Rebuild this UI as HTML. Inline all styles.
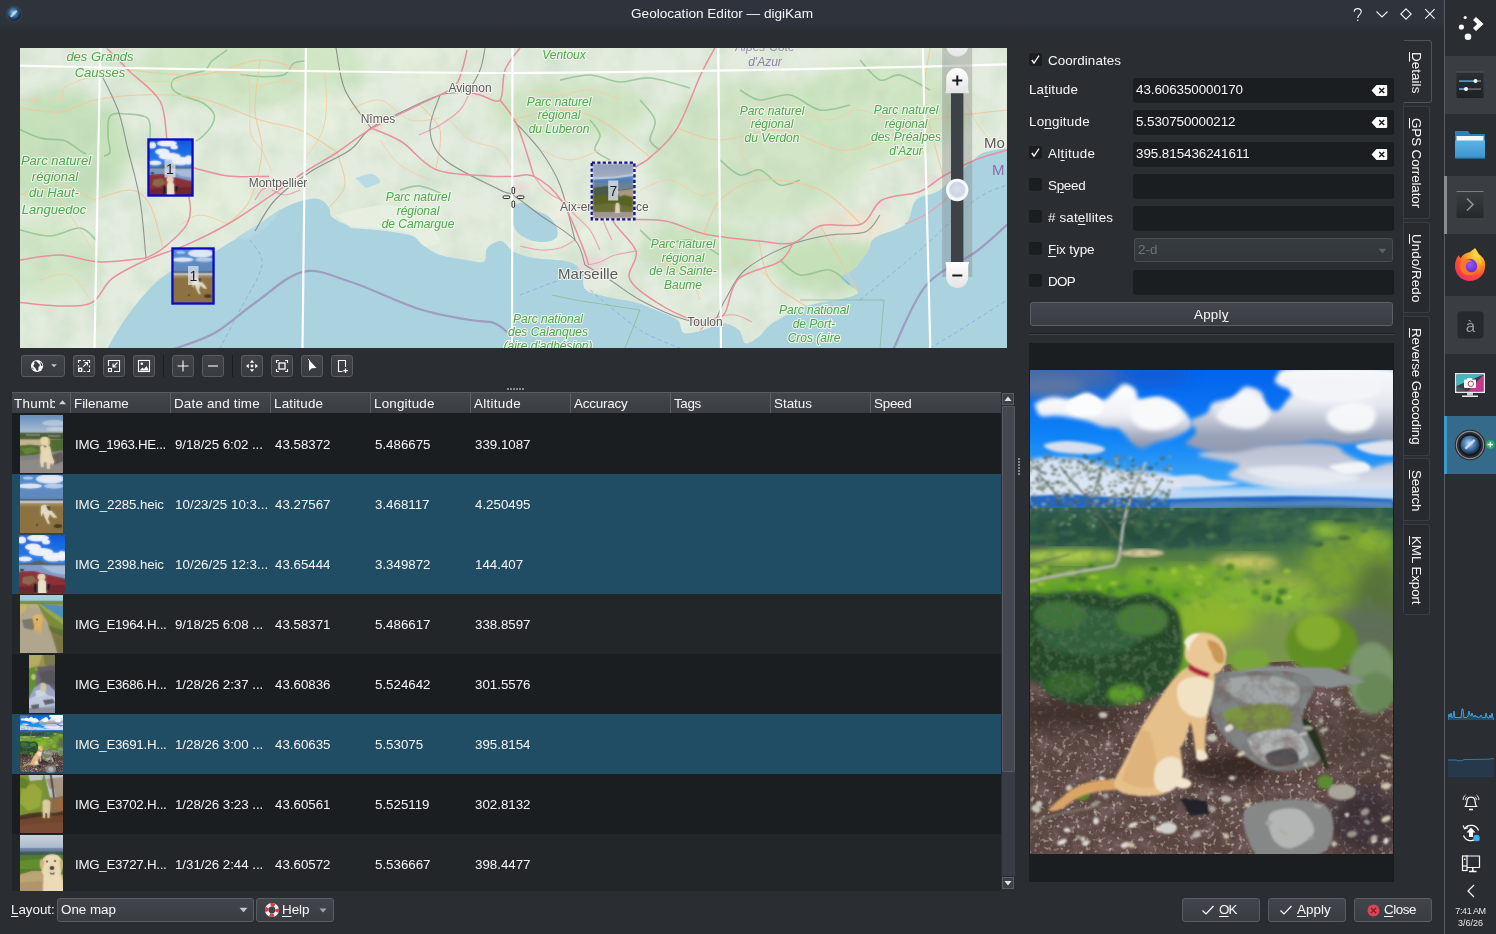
<!DOCTYPE html>
<html>
<head>
<meta charset="utf-8">
<title>Geolocation Editor — digiKam</title>
<style>
*{box-sizing:border-box;margin:0;padding:0}
html,body{width:1496px;height:934px;overflow:hidden;background:#2a2e32}
body{font-family:"Liberation Sans",sans-serif;font-size:13.4px;color:#f6f7f7;position:relative}
.abs{position:absolute}
.t{position:absolute;white-space:nowrap;line-height:16px;color:#f6f7f7}
.t,.cell,.vt,svg{will-change:transform}
u{text-decoration:underline;text-underline-offset:2px;text-decoration-thickness:1px}
#titlebar{left:0;top:0;width:1444px;height:34px;background:linear-gradient(#2f343c 0,#2f343c 23px,#2a2e32 32px)}
#win{left:0;top:0;width:1444px;height:934px;background:#2a2e32}
.btn{position:absolute;border:1px solid #585c61;border-radius:3px;background:linear-gradient(#40444a,#383c42);}
.field{position:absolute;background:#1b1e20;border-radius:3px;height:25px;left:1133px;width:261px}
.cb{position:absolute;width:13px;height:13px;background:#1b1e20;border-radius:2px;left:1029px}
.hdr{position:absolute;top:392px;height:21px;background:linear-gradient(#42464d,#3a3e44);border-top:1px solid #595d63}
.row{position:absolute;left:12px;width:989px;height:60px}
.sel{background:#204c64}
.alt{background:#232629}
.base{background:#1b1e20}
.cell{position:absolute;white-space:nowrap;line-height:16px;top:23px;font-size:13.3px}
.vtab{position:absolute;left:1404px;width:26px;border:1px solid #464a4e;border-left:none;border-radius:0 3px 3px 0}
.vt{position:absolute;white-space:nowrap;transform-origin:0 0;transform:rotate(90deg);line-height:16px;font-size:13.4px}
</style>
</head>
<body>
<div id="win" class="abs"></div>
<div id="titlebar" class="abs"></div>
<!--TITLE-->
<svg class="abs" style="left:4px;top:4px" width="20" height="20" viewBox="0 0 20 20">
<defs><radialGradient id="dk" cx="0.45" cy="0.4" r="0.6"><stop offset="0" stop-color="#a4c8e2"/><stop offset="0.4" stop-color="#3f76a6"/><stop offset="0.8" stop-color="#1c3656"/><stop offset="1" stop-color="#141c28"/></radialGradient></defs>
<circle cx="10" cy="10" r="8.3" fill="#3a424c"/><circle cx="10" cy="10" r="7" fill="url(#dk)"/>
<path d="M7.5 12 L12 7.5" stroke="#dcebf8" stroke-width="2.4" stroke-linecap="round" opacity="0.7"/>
</svg>
<div class="t" id="ttl" style="left:631px;top:6px;width:182px;text-align:center;font-size:13.6px;letter-spacing:-0.004px">Geolocation Editor — digiKam</div>
<svg class="abs" style="left:1346px;top:2px" width="96" height="24" viewBox="0 0 96 24" fill="none" stroke="#f2f3f4" stroke-width="1.1">
<path d="M8.2 9.8 C8.2 5.6 15.2 5.6 15.2 9.8 C15.2 12.6 11.8 12.6 11.8 16"/><circle cx="11.8" cy="18.3" r="0.8" fill="#f2f3f4" stroke="none"/>
<path d="M30.5 9.5 L36 15 L41.5 9.5"/>
<path d="M60 6.8 L65.2 12 L60 17.2 L54.8 12 Z"/>
<path d="M79.2 7.2 L88.6 16.6 M88.6 7.2 L79.2 16.6"/>
</svg>

<!--MAP-->
<svg class="abs" style="left:20px;top:48px" width="987" height="300" viewBox="0 0 987 300">
<defs><filter id="b6" x="-20%" y="-20%" width="140%" height="140%"><feGaussianBlur stdDeviation="7"/></filter><filter id="b3"><feGaussianBlur stdDeviation="3"/></filter><filter id="nz" x="0" y="0" width="100%" height="100%"><feTurbulence type="fractalNoise" baseFrequency="0.035" numOctaves="3" seed="4" result="n"/><feColorMatrix in="n" type="matrix" values="0 0 0 0 0.42  0 0 0 0 0.60  0 0 0 0 0.42  1.6 0 0 0 -0.62"/><feComposite in2="SourceGraphic" operator="in"/></filter><clipPath id="mc"><rect width="987" height="300"/></clipPath></defs>
<g clip-path="url(#mc)">
<rect width="987" height="300" fill="#e3ecde"/>
<ellipse cx="40" cy="102" rx="70" ry="60" fill="#c3e0b8" opacity="0.9" filter="url(#b6)"/>
<ellipse cx="20" cy="212" rx="60" ry="40" fill="#cfe6c2" opacity="0.8" filter="url(#b6)"/>
<ellipse cx="230" cy="22" rx="120" ry="40" fill="#cde5c0" opacity="0.8" filter="url(#b6)"/>
<ellipse cx="550" cy="62" rx="80" ry="30" fill="#cbe3bd" opacity="0.8" filter="url(#b6)"/>
<ellipse cx="740" cy="102" rx="110" ry="70" fill="#cbe3bd" opacity="0.7" filter="url(#b6)"/>
<ellipse cx="860" cy="62" rx="90" ry="50" fill="#cde5c0" opacity="0.8" filter="url(#b6)"/>
<ellipse cx="680" cy="202" rx="60" ry="30" fill="#c6e1b9" opacity="0.8" filter="url(#b6)"/>
<ellipse cx="810" cy="217" rx="60" ry="28" fill="#c3e0b6" opacity="0.9" filter="url(#b6)"/>
<ellipse cx="410" cy="12" rx="50" ry="25" fill="#e6efdd" opacity="0.8" filter="url(#b6)"/>
<ellipse cx="310" cy="72" rx="60" ry="30" fill="#e8f0de" opacity="0.8" filter="url(#b6)"/>
<ellipse cx="180" cy="152" rx="50" ry="30" fill="#e6efdb" opacity="0.8" filter="url(#b6)"/>
<ellipse cx="540" cy="172" rx="40" ry="25" fill="#ecefe2" opacity="0.8" filter="url(#b6)"/>
<ellipse cx="830" cy="177" rx="40" ry="14" fill="#f0e3d2" opacity="0.9" filter="url(#b6)"/>
<rect width="987" height="300" fill="#fff" filter="url(#nz)" opacity="0.38"/>
<path d="M87.0 301.0 C89.6 296.7 95.9 284.4 102.5 275.0 C109.1 265.6 118.4 252.8 126.4 244.3 C134.4 235.8 138.9 230.6 150.3 223.8 C161.7 217.0 183.8 208.8 194.6 203.4 C205.4 198.0 208.2 194.9 215.0 191.5 C221.8 188.1 229.8 186.8 235.5 183.0 C241.2 179.2 242.8 173.6 249.0 169.0 C255.2 164.4 265.0 158.8 273.0 155.7 C281.0 152.6 290.9 149.9 296.9 150.5 C302.9 151.1 306.2 155.9 308.8 159.0 C311.4 162.1 308.5 166.2 312.2 169.3 C315.9 172.4 322.2 175.9 331.0 177.8 C339.8 179.8 354.8 179.6 365.0 181.0 C375.2 182.4 386.0 183.7 392.3 186.3 C398.6 188.9 398.1 193.2 402.6 196.6 C407.2 200.0 412.2 204.2 419.6 206.8 C427.0 209.4 439.5 210.9 446.9 212.0 C454.3 213.1 460.6 215.6 464.0 213.6 C467.4 211.6 464.5 203.4 467.3 200.0 C470.1 196.6 476.6 192.4 481.0 193.0 C485.4 193.6 488.1 200.6 493.6 203.4 C499.1 206.2 504.9 208.3 514.0 210.0 C523.1 211.7 540.0 211.3 548.0 213.6 C556.0 215.9 559.0 219.2 561.8 223.8 C564.6 228.4 561.6 237.0 565.0 241.0 C568.4 245.0 573.5 245.4 582.0 247.7 C590.5 249.9 607.5 252.3 616.0 254.5 C624.5 256.7 626.2 258.1 633.0 261.0 C639.8 263.9 651.8 267.6 657.0 271.6 C662.2 275.6 659.4 283.3 664.0 285.0 C668.6 286.7 678.3 283.5 684.6 281.8 C690.9 280.1 695.9 275.0 701.6 275.0 C707.3 275.0 714.7 278.4 718.7 281.8 C722.7 285.2 722.1 294.3 725.5 295.4 C728.9 296.5 734.5 292.0 739.0 288.6 C743.5 285.2 744.8 280.1 752.8 275.0 C760.8 269.9 775.4 262.0 786.8 258.0 C798.2 254.0 812.5 253.3 821.0 251.0 C829.5 248.7 838.0 247.4 838.0 244.0 C838.0 240.6 821.6 234.6 821.0 230.7 C820.4 226.8 830.1 224.9 834.6 220.4 C839.1 215.8 844.6 208.5 848.0 203.4 C851.4 198.3 848.7 194.4 855.0 189.8 C861.3 185.2 878.9 182.3 885.7 176.0 C892.5 169.7 890.3 157.7 896.0 152.0 C901.7 146.3 910.7 148.2 919.8 142.0 C928.9 135.8 943.1 120.9 950.5 114.7 C957.9 108.4 957.4 107.0 964.0 104.5 C970.6 102.0 985.7 100.8 990.0 100.0 L990 304 L80 304 Z" fill="#abd3df"/>
<path d="M493.0 158.0 C494.5 157.5 498.3 154.3 502.0 155.0 C505.7 155.7 510.7 159.8 515.0 162.0 C519.3 164.2 524.3 165.0 528.0 168.0 C531.7 171.0 535.7 176.3 537.0 180.0 C538.3 183.7 538.0 187.7 536.0 190.0 C534.0 192.3 529.3 193.7 525.0 194.0 C520.7 194.3 514.7 193.7 510.0 192.0 C505.3 190.3 500.0 187.3 497.0 184.0 C494.0 180.7 492.8 174.0 492.0 172.0 Z" fill="#abd3df"/>
<path d="M335.0 130.0 C337.8 129.3 347.8 125.3 352.0 126.0 C356.2 126.7 361.0 131.7 360.0 134.0 C359.0 136.3 348.3 139.0 346.0 140.0 Z" fill="#b9dbe4"/>
<path d="M216.0 190.0 C220.3 187.3 234.7 178.7 242.0 174.0 C249.3 169.3 259.0 161.3 260.0 162.0 C261.0 162.7 253.7 173.0 248.0 178.0 C242.3 183.0 229.7 189.7 226.0 192.0 Z" fill="#b4d8e2"/>
<path d="M315.0 167.0 C323.3 165.3 350.8 157.0 365.0 157.0 C379.2 157.0 390.8 161.2 400.0 167.0 C409.2 172.8 419.2 186.8 420.0 192.0 C420.8 197.2 409.7 198.7 405.0 198.0 C400.3 197.3 398.7 190.5 392.0 188.0 C385.3 185.5 375.2 184.3 365.0 183.0 C354.8 181.7 336.7 180.5 331.0 180.0 Z" fill="#e9f0e2" opacity=".8"/>
<path d="M207.0 2.0 C204.5 3.8 195.7 9.7 192.0 13.0 C188.3 16.3 189.0 19.8 185.0 22.0 C181.0 24.2 173.2 25.0 168.0 26.5 C162.8 28.0 156.7 28.8 154.0 31.0 C151.3 33.2 151.2 37.5 152.0 40.0 C152.8 42.5 155.7 44.2 159.0 46.0 C162.3 47.8 168.0 49.5 172.0 51.0 C176.0 52.5 179.3 52.5 183.0 55.0 C186.7 57.5 192.5 62.3 194.0 66.0 C195.5 69.7 193.8 73.3 192.0 77.0 C190.2 80.7 185.7 85.3 183.0 88.0 C180.3 90.7 177.2 92.2 176.0 93.0" fill="none" stroke="#86bb86" stroke-width="1.6" opacity=".7"/>
<path d="M84.0 108.0 C85.0 107.3 89.3 107.3 90.0 104.0 C90.7 100.7 88.0 94.0 88.0 88.0 C88.0 82.0 87.0 71.7 90.0 68.0 C93.0 64.3 99.7 65.6 106.0 66.0 C112.3 66.4 124.0 66.2 128.0 70.6 C132.0 75.0 129.7 88.9 130.0 92.6" fill="none" stroke="#86bb86" stroke-width="1.6" opacity=".7"/>
<path d="M220.6 26.5 C224.3 26.9 235.3 28.7 242.7 28.7 C250.0 28.7 259.6 28.7 264.7 26.5 C269.8 24.3 270.2 17.6 273.5 15.4 C276.8 13.1 282.8 13.4 284.6 13.0" fill="none" stroke="#86bb86" stroke-width="1.6" opacity=".7"/>
<path d="M0.0 81.6 C3.7 83.1 14.7 88.6 22.0 90.4 C29.3 92.2 37.4 90.4 44.0 92.6 C50.6 94.8 58.1 101.5 61.8 103.7 C65.5 105.9 65.3 105.6 66.0 106.0" fill="none" stroke="#86bb86" stroke-width="1.6" opacity=".7"/>
<path d="M0.0 182.0 C5.0 183.0 20.0 188.3 30.0 188.0 C40.0 187.7 52.3 179.3 60.0 180.0 C67.7 180.7 73.3 190.0 76.0 192.0" fill="none" stroke="#86bb86" stroke-width="1.6" opacity=".7"/>
<path d="M540.0 32.0 C545.0 31.2 560.0 26.7 570.0 27.0 C580.0 27.3 590.0 33.5 600.0 34.0 C610.0 34.5 618.3 29.0 630.0 30.0 C641.7 31.0 663.3 38.3 670.0 40.0" fill="none" stroke="#86bb86" stroke-width="1.6" opacity=".7"/>
<path d="M570.0 72.0 C571.7 74.5 579.2 82.0 580.0 87.0 C580.8 92.0 573.3 97.8 575.0 102.0 C576.7 106.2 587.5 110.3 590.0 112.0" fill="none" stroke="#86bb86" stroke-width="1.6" opacity=".7"/>
<path d="M620.0 52.0 C622.5 55.3 633.3 65.3 635.0 72.0 C636.7 78.7 629.2 87.0 630.0 92.0 C630.8 97.0 638.3 100.3 640.0 102.0" fill="none" stroke="#86bb86" stroke-width="1.6" opacity=".7"/>
<path d="M720.0 42.0 C723.3 43.7 731.7 51.2 740.0 52.0 C748.3 52.8 760.0 45.3 770.0 47.0 C780.0 48.7 790.0 60.3 800.0 62.0 C810.0 63.7 825.0 57.8 830.0 57.0" fill="none" stroke="#86bb86" stroke-width="1.6" opacity=".7"/>
<path d="M700.0 112.0 C703.3 114.5 713.3 125.3 720.0 127.0 C726.7 128.7 733.3 120.3 740.0 122.0 C746.7 123.7 753.3 135.3 760.0 137.0 C766.7 138.7 776.7 132.8 780.0 132.0" fill="none" stroke="#86bb86" stroke-width="1.6" opacity=".7"/>
<path d="M840.0 12.0 C843.3 15.3 853.3 29.5 860.0 32.0 C866.7 34.5 871.7 25.3 880.0 27.0 C888.3 28.7 905.0 39.5 910.0 42.0" fill="none" stroke="#86bb86" stroke-width="1.6" opacity=".7"/>
<path d="M620.0 182.0 C623.3 184.5 631.7 195.3 640.0 197.0 C648.3 198.7 660.0 190.3 670.0 192.0 C680.0 193.7 695.0 204.5 700.0 207.0" fill="none" stroke="#86bb86" stroke-width="1.6" opacity=".7"/>
<path d="M760.0 212.0 C763.3 214.5 771.7 225.3 780.0 227.0 C788.3 228.7 801.7 220.3 810.0 222.0 C818.3 223.7 826.7 234.5 830.0 237.0" fill="none" stroke="#86bb86" stroke-width="1.6" opacity=".7"/>
<path d="M380.0 142.0 C383.3 141.3 392.5 137.2 400.0 138.0 C407.5 138.8 420.8 145.5 425.0 147.0" fill="none" stroke="#86bb86" stroke-width="1.6" opacity=".7"/>
<path d="M0.0 51.8 C6.6 52.0 32.4 55.0 39.7 53.0 C47.0 51.0 38.5 43.8 44.0 39.7 C49.5 35.7 64.0 30.5 72.8 28.7 C81.6 26.9 93.0 28.7 97.0 28.7" fill="none" stroke="#f4cda4" stroke-width="1" opacity=".85"/>
<path d="M123.5 33.0 C128.7 33.0 145.6 34.1 154.4 33.0 C163.2 31.9 165.5 27.8 176.5 26.5 C187.5 25.2 211.8 23.2 220.6 25.4 C229.4 27.6 227.8 30.0 229.4 39.7 C231.1 49.4 228.3 73.1 230.5 83.8 C232.7 94.5 239.2 97.1 242.7 103.7 C246.2 110.3 250.0 120.2 251.5 123.5" fill="none" stroke="#f4cda4" stroke-width="1" opacity=".85"/>
<path d="M229.4 39.7 C235.3 38.6 255.5 33.4 264.7 33.0 C273.9 32.6 281.3 36.8 284.6 37.5" fill="none" stroke="#f4cda4" stroke-width="1" opacity=".85"/>
<path d="M304.4 24.3 C304.8 29.4 307.0 45.1 306.6 55.0 C306.2 64.9 305.5 75.0 302.2 83.8 C298.9 92.6 289.4 104.0 286.8 108.0" fill="none" stroke="#f4cda4" stroke-width="1" opacity=".85"/>
<path d="M330.0 62.0 C335.0 60.3 350.0 50.3 360.0 52.0 C370.0 53.7 380.0 69.0 390.0 72.0 C400.0 75.0 415.0 70.3 420.0 70.0" fill="none" stroke="#f4cda4" stroke-width="1" opacity=".85"/>
<path d="M360.0 92.0 C363.3 96.2 371.7 110.3 380.0 117.0 C388.3 123.7 405.0 129.5 410.0 132.0" fill="none" stroke="#f4cda4" stroke-width="1" opacity=".85"/>
<path d="M430.0 72.0 C433.3 75.3 441.7 87.0 450.0 92.0 C458.3 97.0 473.0 97.0 480.0 102.0 C487.0 107.0 490.0 118.7 492.0 122.0" fill="none" stroke="#f4cda4" stroke-width="1" opacity=".85"/>
<path d="M510.0 42.0 C515.0 42.8 530.0 47.0 540.0 47.0 C550.0 47.0 560.0 41.2 570.0 42.0 C580.0 42.8 595.0 50.3 600.0 52.0" fill="none" stroke="#f4cda4" stroke-width="1" opacity=".85"/>
<path d="M520.0 102.0 C525.0 103.7 540.0 112.0 550.0 112.0 C560.0 112.0 575.0 103.7 580.0 102.0" fill="none" stroke="#f4cda4" stroke-width="1" opacity=".85"/>
<path d="M620.0 142.0 C625.0 140.3 640.0 131.2 650.0 132.0 C660.0 132.8 671.7 145.3 680.0 147.0 C688.3 148.7 696.7 142.8 700.0 142.0" fill="none" stroke="#f4cda4" stroke-width="1" opacity=".85"/>
<path d="M710.0 52.0 C713.3 55.3 728.3 63.7 730.0 72.0 C731.7 80.3 718.3 92.0 720.0 102.0 C721.7 112.0 736.7 127.0 740.0 132.0" fill="none" stroke="#f4cda4" stroke-width="1" opacity=".85"/>
<path d="M780.0 62.0 C785.0 63.7 800.0 72.0 810.0 72.0 C820.0 72.0 828.3 61.2 840.0 62.0 C851.7 62.8 873.3 74.5 880.0 77.0" fill="none" stroke="#f4cda4" stroke-width="1" opacity=".85"/>
<path d="M850.0 122.0 C855.0 120.3 870.0 115.3 880.0 112.0 C890.0 108.7 905.0 103.7 910.0 102.0" fill="none" stroke="#f4cda4" stroke-width="1" opacity=".85"/>
<path d="M710.0 212.0 C715.0 213.7 731.7 217.0 740.0 222.0 C748.3 227.0 752.3 236.0 760.0 242.0 C767.7 248.0 781.7 255.3 786.0 258.0" fill="none" stroke="#f4cda4" stroke-width="1" opacity=".85"/>
<path d="M640.0 212.0 C645.0 215.3 663.3 225.3 670.0 232.0 C676.7 238.7 678.3 248.7 680.0 252.0" fill="none" stroke="#f4cda4" stroke-width="1" opacity=".85"/>
<path d="M20.0 232.0 C25.0 231.2 41.3 223.3 50.0 227.0 C58.7 230.7 68.3 249.5 72.0 254.0" fill="none" stroke="#f4cda4" stroke-width="1" opacity=".85"/>
<path d="M40.0 152.0 C43.3 157.0 53.3 171.7 60.0 182.0 C66.7 192.3 76.7 208.7 80.0 214.0" fill="none" stroke="#f4cda4" stroke-width="1" opacity=".85"/>
<path d="M160.0 177.0 C163.3 175.3 172.0 167.2 180.0 167.0 C188.0 166.8 203.3 174.5 208.0 176.0" fill="none" stroke="#f4cda4" stroke-width="1" opacity=".85"/>
<path d="M940.0 42.0 C942.5 47.0 950.0 63.7 955.0 72.0 C960.0 80.3 967.5 88.7 970.0 92.0" fill="none" stroke="#f4cda4" stroke-width="1" opacity=".85"/>
<path d="M0.0 60.0 C6.7 60.7 27.5 65.3 40.0 64.0 C52.5 62.7 61.7 54.8 75.0 52.0 C88.3 49.2 102.5 47.3 120.0 47.0 C137.5 46.7 160.0 45.8 180.0 50.0 C200.0 54.2 223.3 66.7 240.0 72.0 C256.7 77.3 267.2 76.7 280.0 82.0 C292.8 87.3 310.8 100.3 317.0 104.0" fill="none" stroke="#f3c79b" stroke-width="1.1" opacity=".9"/>
<path d="M109.0 22.0 C120.8 22.8 158.2 28.7 180.0 27.0 C201.8 25.3 222.3 12.5 240.0 12.0 C257.7 11.5 278.3 22.0 286.0 24.0" fill="none" stroke="#f3c79b" stroke-width="1.1" opacity=".9"/>
<path d="M208.0 176.0 C211.7 172.0 224.3 164.3 230.0 152.0 C235.7 139.7 241.2 117.0 242.0 102.0 C242.8 87.0 235.3 77.0 235.0 62.0 C234.7 47.0 239.2 20.3 240.0 12.0" fill="none" stroke="#f3c79b" stroke-width="1.1" opacity=".9"/>
<path d="M74.0 152.0 C80.0 150.3 100.7 141.2 110.0 142.0 C119.3 142.8 124.5 147.3 130.0 157.0 C135.5 166.7 140.8 192.8 143.0 200.0" fill="none" stroke="#f3c79b" stroke-width="1.1" opacity=".9"/>
<path d="M0.0 147.0 C6.7 145.3 27.7 136.2 40.0 137.0 C52.3 137.8 68.3 149.5 74.0 152.0" fill="none" stroke="#f3c79b" stroke-width="1.1" opacity=".9"/>
<path d="M493.0 72.0 C500.8 70.3 525.5 62.0 540.0 62.0 C554.5 62.0 565.0 64.2 580.0 72.0 C595.0 79.8 621.7 102.8 630.0 109.0" fill="none" stroke="#f3c79b" stroke-width="1.1" opacity=".9"/>
<path d="M657.0 80.0 C664.2 82.0 682.8 91.7 700.0 92.0 C717.2 92.3 740.0 80.3 760.0 82.0 C780.0 83.7 803.3 100.3 820.0 102.0 C836.7 103.7 845.0 97.0 860.0 92.0 C875.0 87.0 888.8 77.0 910.0 72.0 C931.2 67.0 974.2 63.7 987.0 62.0" fill="none" stroke="#f3c79b" stroke-width="1.1" opacity=".9"/>
<path d="M684.0 186.0 C686.7 180.3 690.7 161.0 700.0 152.0 C709.3 143.0 723.3 133.7 740.0 132.0 C756.7 130.3 783.2 134.7 800.0 142.0 C816.8 149.3 834.2 170.3 841.0 176.0" fill="none" stroke="#f3c79b" stroke-width="1.1" opacity=".9"/>
<path d="M800.0 177.0 C803.3 182.8 813.7 200.8 820.0 212.0 C826.3 223.2 835.0 238.7 838.0 244.0" fill="none" stroke="#f3c79b" stroke-width="1.1" opacity=".9"/>
<path d="M910.0 0.0 C909.2 8.7 902.8 30.7 905.0 52.0 C907.2 73.3 920.0 115.3 923.0 128.0" fill="none" stroke="#f3c79b" stroke-width="1.1" opacity=".9"/>
<path d="M739.0 193.0 C740.8 199.5 742.2 221.2 750.0 232.0 C757.8 242.8 780.0 253.7 786.0 258.0" fill="none" stroke="#f3c79b" stroke-width="1.1" opacity=".9"/>
<path d="M317.0 104.0 C318.3 109.5 326.2 127.8 325.0 137.0 C323.8 146.2 312.5 155.3 310.0 159.0" fill="none" stroke="#f3c79b" stroke-width="1.1" opacity=".9"/>
<path d="M399.0 56.0 C402.5 60.3 417.2 71.2 420.0 82.0 C422.8 92.8 416.7 114.5 416.0 121.0" fill="none" stroke="#f3c79b" stroke-width="1.1" opacity=".9"/>
<ellipse cx="572" cy="218" rx="14" ry="10" fill="#e6d9d6" opacity=".85" filter="url(#b3)"/>
<ellipse cx="582" cy="157" rx="9" ry="7" fill="#e6d9d6" opacity=".85" filter="url(#b3)"/>
<ellipse cx="692" cy="273" rx="11" ry="5" fill="#e6d9d6" opacity=".85" filter="url(#b3)"/>
<ellipse cx="252" cy="142" rx="11" ry="7" fill="#e6d9d6" opacity=".85" filter="url(#b3)"/>
<ellipse cx="352" cy="79" rx="9" ry="6" fill="#e6d9d6" opacity=".85" filter="url(#b3)"/>
<ellipse cx="458" cy="44" rx="9" ry="6" fill="#e6d9d6" opacity=".85" filter="url(#b3)"/>
<ellipse cx="500" cy="140" rx="10" ry="6" fill="#e6d9d6" opacity=".85" filter="url(#b3)"/>
<ellipse cx="910" cy="132" rx="12" ry="5" fill="#e6d9d6" opacity=".85" filter="url(#b3)"/>
<ellipse cx="860" cy="157" rx="10" ry="5" fill="#e6d9d6" opacity=".85" filter="url(#b3)"/>
<path d="M541.0 152.0 C543.3 154.5 550.2 162.0 555.0 167.0 C559.8 172.0 565.8 176.2 570.0 182.0 C574.2 187.8 578.3 198.7 580.0 202.0" fill="none" stroke="#ee9fa8" stroke-width="1.2" opacity=".9"/>
<path d="M568.0 217.0 C570.0 216.5 575.5 215.7 580.0 214.0 C584.5 212.3 589.0 208.8 595.0 207.0 C601.0 205.2 612.5 203.7 616.0 203.0" fill="none" stroke="#ee9fa8" stroke-width="1.2" opacity=".9"/>
<path d="M555.0 192.0 C552.5 193.3 545.8 198.3 540.0 200.0 C534.2 201.7 526.7 202.3 520.0 202.0 C513.3 201.7 503.3 198.7 500.0 198.0" fill="none" stroke="#ee9fa8" stroke-width="1.2" opacity=".9"/>
<path d="M514.0 128.0 C515.8 130.3 520.5 138.0 525.0 142.0 C529.5 146.0 535.2 149.5 541.0 152.0 C546.8 154.5 553.5 155.7 560.0 157.0 C566.5 158.3 576.7 159.5 580.0 160.0" fill="none" stroke="#ee9fa8" stroke-width="1.2" opacity=".9"/>
<path d="M580.0 160.0 C580.8 162.8 583.0 171.7 585.0 177.0 C587.0 182.3 590.8 189.5 592.0 192.0" fill="none" stroke="#ee9fa8" stroke-width="1.2" opacity=".9"/>
<path d="M450.0 44.0 C448.3 47.0 445.0 56.5 440.0 62.0 C435.0 67.5 426.8 72.8 420.0 77.0 C413.2 81.2 402.5 85.3 399.0 87.0" fill="none" stroke="#ee9fa8" stroke-width="1.2" opacity=".9"/>
<path d="M252.0 142.0 C254.2 142.8 260.3 147.0 265.0 147.0 C269.7 147.0 277.5 142.8 280.0 142.0" fill="none" stroke="#ee9fa8" stroke-width="1.2" opacity=".9"/>
<path d="M235.0 152.0 C236.2 150.3 239.2 144.3 242.0 142.0 C244.8 139.7 250.3 138.7 252.0 138.0" fill="none" stroke="#ee9fa8" stroke-width="1.2" opacity=".9"/>
<path d="M885.0 176.0 C888.3 174.5 898.3 171.0 905.0 167.0 C911.7 163.0 919.2 157.0 925.0 152.0 C930.8 147.0 937.5 139.5 940.0 137.0" fill="none" stroke="#ee9fa8" stroke-width="1.2" opacity=".9"/>
<path d="M680.0 282.0 C682.5 280.0 689.2 272.5 695.0 270.0 C700.8 267.5 708.8 266.3 715.0 267.0 C721.2 267.7 729.2 272.8 732.0 274.0" fill="none" stroke="#ee9fa8" stroke-width="1.2" opacity=".9"/>
<path d="M80.0 24.0 C83.0 30.3 93.3 49.0 98.0 62.0 C102.7 75.0 104.3 87.0 108.0 102.0 C111.7 117.0 117.0 134.0 120.0 152.0 C123.0 170.0 125.0 200.3 126.0 210.0" fill="none" stroke="#7d7d7d" stroke-width="1.1" opacity=".8"/>
<path d="M235.0 183.0 C238.3 177.8 245.8 161.8 255.0 152.0 C264.2 142.2 277.5 132.3 290.0 124.0 C302.5 115.7 319.8 109.3 330.0 102.0 C340.2 94.7 341.0 87.0 351.0 80.0 C361.0 73.0 378.5 65.5 390.0 60.0 C401.5 54.5 410.5 50.0 420.0 47.0 C429.5 44.0 440.3 46.2 447.0 42.0 C453.7 37.8 457.0 29.0 460.0 22.0 C463.0 15.0 464.2 3.7 465.0 0.0" fill="none" stroke="#7d7d7d" stroke-width="1.1" opacity=".8"/>
<path d="M316.0 0.0 C317.5 7.0 319.2 28.7 325.0 42.0 C330.8 55.3 346.7 73.7 351.0 80.0" fill="none" stroke="#7d7d7d" stroke-width="1.1" opacity=".8"/>
<path d="M420.0 47.0 C418.3 52.8 409.2 71.2 410.0 82.0 C410.8 92.8 413.3 102.0 425.0 112.0 C436.7 122.0 468.7 136.2 480.0 142.0 C491.3 147.8 486.3 142.8 493.0 147.0 C499.7 151.2 509.7 159.5 520.0 167.0 C530.3 174.5 547.5 183.7 555.0 192.0 C562.5 200.3 563.3 212.8 565.0 217.0" fill="none" stroke="#7d7d7d" stroke-width="1.1" opacity=".8"/>
<path d="M493.0 72.0 C497.5 77.0 512.2 91.2 520.0 102.0 C527.8 112.8 534.2 122.0 540.0 137.0 C545.8 152.0 552.5 182.8 555.0 192.0" fill="none" stroke="#7d7d7d" stroke-width="1.1" opacity=".8"/>
<path d="M565.0 217.0 C569.2 219.5 580.8 226.2 590.0 232.0 C599.2 237.8 608.3 245.7 620.0 252.0 C631.7 258.3 648.2 266.2 660.0 270.0 C671.8 273.8 683.5 278.0 691.0 275.0 C698.5 272.0 699.3 260.8 705.0 252.0 C710.7 243.2 714.2 231.2 725.0 222.0 C735.8 212.8 755.8 202.8 770.0 197.0 C784.2 191.2 797.5 189.2 810.0 187.0 C822.5 184.8 836.7 187.3 845.0 184.0 C853.3 180.7 857.5 169.8 860.0 167.0" fill="none" stroke="#7d7d7d" stroke-width="1.1" opacity=".8"/>
<path d="M87.0 0.5 C90.7 4.2 100.2 14.0 109.0 22.7 C117.8 31.5 133.7 41.6 140.0 53.0 C146.3 64.4 145.0 81.2 147.0 91.0 C149.0 100.8 148.3 102.2 152.0 112.0 C155.7 121.8 166.5 138.8 169.0 149.5 C171.5 160.2 171.3 167.6 167.0 176.0 C162.7 184.4 150.2 194.3 143.4 200.0 C136.6 205.7 128.9 208.3 126.0 210.0" fill="none" stroke="#e9909c" stroke-width="1.5"/>
<path d="M0.0 254.5 C6.7 255.1 28.0 258.0 40.0 258.0 C52.0 258.0 63.3 259.1 72.0 254.5 C80.7 249.9 82.9 237.8 92.0 230.7 C101.1 223.6 113.9 217.7 126.4 212.0 C138.9 206.3 153.4 202.6 167.0 196.6 C180.6 190.6 194.3 183.9 208.0 176.0 C221.7 168.1 236.5 157.5 249.0 149.0 C261.5 140.5 271.7 132.4 283.0 125.0 C294.3 117.6 305.6 111.9 317.0 104.5 C328.4 97.1 337.7 88.5 351.4 80.6 C365.1 72.6 385.4 63.6 399.0 56.8 C412.6 50.0 425.8 45.5 433.0 39.7 C440.2 33.9 439.7 28.3 442.0 22.0 C444.3 15.7 446.2 5.3 447.0 2.0" fill="none" stroke="#e9909c" stroke-width="1.5"/>
<path d="M351.0 80.0 C356.2 82.3 371.2 87.1 382.0 94.0 C392.8 100.9 401.8 115.9 416.0 121.6 C430.2 127.3 454.2 126.9 467.0 128.0 C479.8 129.1 485.2 128.3 493.0 128.4 C500.8 128.5 506.0 124.5 514.0 128.4 C522.0 132.3 533.0 140.6 541.0 152.0 C549.0 163.4 557.2 185.8 561.8 196.6 C566.4 207.4 567.5 213.6 568.6 217.0" fill="none" stroke="#e9909c" stroke-width="1.5"/>
<path d="M174.0 120.0 C179.7 121.3 195.5 126.6 208.0 128.0 C220.5 129.4 242.2 128.3 249.0 128.4" fill="none" stroke="#e9909c" stroke-width="1.5"/>
<path d="M694.8 0.0 C692.5 4.3 687.3 12.6 681.0 26.0 C674.7 39.4 665.5 66.7 657.0 80.6 C648.5 94.5 637.0 103.0 630.0 109.6 C623.0 116.2 621.3 113.8 615.0 120.0 C608.7 126.2 595.8 138.3 592.0 147.0 C588.2 155.7 588.5 162.7 592.5 172.0 C596.5 181.3 613.1 193.2 616.0 203.0 C618.9 212.8 606.1 222.1 609.6 230.7 C613.1 239.3 626.6 247.7 636.8 254.5 C647.0 261.3 662.0 268.2 671.0 271.6 C680.0 275.0 687.7 274.4 691.0 275.0" fill="none" stroke="#e9909c" stroke-width="1.5"/>
<path d="M592.0 172.0 C600.6 172.1 628.3 170.4 643.7 172.7 C659.1 175.0 668.7 182.6 684.6 186.0 C700.5 189.4 724.3 191.5 739.0 193.0 C753.7 194.5 762.8 197.5 773.0 195.0 C783.2 192.5 789.1 181.0 800.5 177.8 C811.9 174.6 831.1 180.3 841.4 176.0 C851.6 171.7 852.3 157.4 862.0 152.0 C871.7 146.6 889.2 147.6 899.4 143.7 C909.6 139.8 913.7 133.7 923.0 128.4 C932.3 123.1 944.3 116.4 955.0 112.0 C965.7 107.6 981.7 103.7 987.0 102.0" fill="none" stroke="#e9909c" stroke-width="1.5"/>
<path d="M773.0 195.0 C770.8 198.1 768.6 207.7 759.6 213.6 C750.6 219.6 727.8 222.2 718.7 230.7 C709.6 239.2 709.6 257.4 705.0 264.8 C700.4 272.2 693.3 273.3 691.0 275.0" fill="none" stroke="#e9909c" stroke-width="1.5"/>
<path d="M480.0 52.0 C482.8 56.2 491.3 64.3 497.0 77.0 C502.7 89.7 511.2 119.8 514.0 128.4" fill="none" stroke="#e9909c" stroke-width="1.5"/>
<path d="M433.0 39.7 C437.5 40.9 452.2 45.0 460.0 47.0 C467.8 49.0 475.8 56.2 480.0 52.0 C484.2 47.8 481.7 30.7 485.0 22.0 C488.3 13.3 497.5 3.7 500.0 0.0" fill="none" stroke="#e9909c" stroke-width="1.5"/>
<path d="M0.0 212.0 C6.7 211.2 26.7 206.7 40.0 207.0 C53.3 207.3 65.7 213.5 80.0 214.0 C94.3 214.5 118.3 210.7 126.0 210.0" fill="none" stroke="#e9909c" stroke-width="1.5"/>
<path d="M153.7 301.0 C160.5 298.3 181.0 292.8 194.6 285.0 C208.2 277.2 220.8 264.7 235.5 254.5 C250.2 244.3 267.1 227.2 283.0 223.8 C298.9 220.4 311.7 227.8 331.0 234.0 C350.3 240.2 379.2 254.7 399.0 261.0 C418.8 267.3 437.5 269.7 450.0 272.0 C462.5 274.3 467.2 272.2 474.0 275.0 C480.8 277.8 487.5 284.1 491.0 288.6 C494.5 293.1 494.3 299.8 495.0 302.0" fill="none" stroke="#9a89b4" stroke-width="2.2" opacity=".75"/>
<path d="M873.0 302.0 C878.5 291.2 892.0 254.0 906.0 237.5 C920.0 221.0 943.0 213.6 957.0 203.0 C971.0 192.4 984.5 178.8 990.0 174.0" fill="none" stroke="#9a89b4" stroke-width="2.2" opacity=".75"/>
<path d="M230.0 192.0 C232.0 196.2 243.7 205.3 242.0 217.0 C240.3 228.7 227.0 248.2 220.0 262.0 C213.0 275.8 203.3 293.7 200.0 300.0" fill="none" stroke="#7fa6d8" stroke-width="1" stroke-dasharray="4 3" opacity=".7"/>
<path d="M500.0 247.0 C506.7 244.5 529.2 235.3 540.0 232.0 C550.8 228.7 560.8 227.8 565.0 227.0" fill="none" stroke="#7fa6d8" stroke-width="1" stroke-dasharray="4 3" opacity=".7"/>
<path d="M570.0 242.0 C578.3 248.7 605.0 272.3 620.0 282.0 C635.0 291.7 653.3 297.0 660.0 300.0" fill="none" stroke="#7fa6d8" stroke-width="1" stroke-dasharray="4 3" opacity=".7"/>
<path d="M840.0 252.0 C850.0 243.7 880.8 218.7 900.0 202.0 C919.2 185.3 940.5 162.8 955.0 152.0 C969.5 141.2 981.7 139.5 987.0 137.0" fill="none" stroke="#7fa6d8" stroke-width="1" stroke-dasharray="4 3" opacity=".7"/>
<path d="M910.0 300.0 C915.0 297.0 927.2 290.0 940.0 282.0 C952.8 274.0 979.2 257.0 987.0 252.0" fill="none" stroke="#7fa6d8" stroke-width="1" stroke-dasharray="4 3" opacity=".7"/>
<path d="M532.0 247.0 L555.0 252.0 L620.0 262.0 L605.0 300.0" fill="none" stroke="#8fb89a" stroke-width="1" opacity=".8"/>
<path d="M780.0 252.0 L864.0 252.0 L860.0 300.0" fill="none" stroke="#8fb89a" stroke-width="1" opacity=".8"/>
<path d="M80.3 0.0 L74.5 300.0" stroke="#ffffff" stroke-width="2.2" opacity=".95"/>
<path d="M286.0 0.0 L282.5 300.0" stroke="#ffffff" stroke-width="2.2" opacity=".95"/>
<path d="M492.5 0.0 L492.0 300.0" stroke="#ffffff" stroke-width="2.2" opacity=".95"/>
<path d="M698.2 0.0 L701.0 300.0" stroke="#ffffff" stroke-width="2.2" opacity=".95"/>
<path d="M902.8 0.0 L910.3 300.0" stroke="#ffffff" stroke-width="2.2" opacity=".95"/>
<path d="M0.0 17.6 C13.3 17.9 32.3 18.6 80.0 19.5 C127.7 20.4 217.2 22.1 286.0 23.0 C354.8 23.9 424.3 25.1 493.0 25.0 C561.7 24.9 629.7 23.8 698.0 22.7 C766.3 21.6 854.8 19.7 903.0 18.6 C951.2 17.5 973.0 16.7 987.0 16.3" fill="none" stroke="#ffffff" stroke-width="2.2" opacity=".95"/>
<text x="80" y="13" font-family="Liberation Sans, sans-serif" font-size="13" font-style="italic" fill="#48a448" text-anchor="middle" stroke="#eef5e8" stroke-width="2.2" paint-order="stroke" opacity=".95">des Grands</text>
<text x="80" y="29" font-family="Liberation Sans, sans-serif" font-size="13" font-style="italic" fill="#48a448" text-anchor="middle" stroke="#eef5e8" stroke-width="2.2" paint-order="stroke" opacity=".95">Causses</text>
<text x="36" y="117" font-family="Liberation Sans, sans-serif" font-size="13" font-style="italic" fill="#48a448" text-anchor="middle" stroke="#eef5e8" stroke-width="2.2" paint-order="stroke" opacity=".95">Parc naturel</text>
<text x="35" y="133" font-family="Liberation Sans, sans-serif" font-size="13" font-style="italic" fill="#48a448" text-anchor="middle" stroke="#eef5e8" stroke-width="2.2" paint-order="stroke" opacity=".95">régional</text>
<text x="34" y="149" font-family="Liberation Sans, sans-serif" font-size="13" font-style="italic" fill="#48a448" text-anchor="middle" stroke="#eef5e8" stroke-width="2.2" paint-order="stroke" opacity=".95">du Haut-</text>
<text x="34" y="166" font-family="Liberation Sans, sans-serif" font-size="13" font-style="italic" fill="#48a448" text-anchor="middle" stroke="#eef5e8" stroke-width="2.2" paint-order="stroke" opacity=".95">Languedoc</text>
<text x="544" y="11" font-family="Liberation Sans, sans-serif" font-size="12" font-style="italic" fill="#48a448" text-anchor="middle" stroke="#eef5e8" stroke-width="2.2" paint-order="stroke" opacity=".95">Ventoux</text>
<text x="539" y="58" font-family="Liberation Sans, sans-serif" font-size="12" font-style="italic" fill="#48a448" text-anchor="middle" stroke="#eef5e8" stroke-width="2.2" paint-order="stroke" opacity=".95">Parc naturel</text>
<text x="539" y="71" font-family="Liberation Sans, sans-serif" font-size="12" font-style="italic" fill="#48a448" text-anchor="middle" stroke="#eef5e8" stroke-width="2.2" paint-order="stroke" opacity=".95">régional</text>
<text x="539" y="85" font-family="Liberation Sans, sans-serif" font-size="12" font-style="italic" fill="#48a448" text-anchor="middle" stroke="#eef5e8" stroke-width="2.2" paint-order="stroke" opacity=".95">du Luberon</text>
<text x="398" y="153" font-family="Liberation Sans, sans-serif" font-size="12" font-style="italic" fill="#48a448" text-anchor="middle" stroke="#eef5e8" stroke-width="2.2" paint-order="stroke" opacity=".95">Parc naturel</text>
<text x="398" y="167" font-family="Liberation Sans, sans-serif" font-size="12" font-style="italic" fill="#48a448" text-anchor="middle" stroke="#eef5e8" stroke-width="2.2" paint-order="stroke" opacity=".95">régional</text>
<text x="398" y="180" font-family="Liberation Sans, sans-serif" font-size="12" font-style="italic" fill="#48a448" text-anchor="middle" stroke="#eef5e8" stroke-width="2.2" paint-order="stroke" opacity=".95">de Camargue</text>
<text x="752" y="67" font-family="Liberation Sans, sans-serif" font-size="12" font-style="italic" fill="#48a448" text-anchor="middle" stroke="#eef5e8" stroke-width="2.2" paint-order="stroke" opacity=".95">Parc naturel</text>
<text x="752" y="80" font-family="Liberation Sans, sans-serif" font-size="12" font-style="italic" fill="#48a448" text-anchor="middle" stroke="#eef5e8" stroke-width="2.2" paint-order="stroke" opacity=".95">régional</text>
<text x="752" y="94" font-family="Liberation Sans, sans-serif" font-size="12" font-style="italic" fill="#48a448" text-anchor="middle" stroke="#eef5e8" stroke-width="2.2" paint-order="stroke" opacity=".95">du Verdon</text>
<text x="886" y="66" font-family="Liberation Sans, sans-serif" font-size="12" font-style="italic" fill="#48a448" text-anchor="middle" stroke="#eef5e8" stroke-width="2.2" paint-order="stroke" opacity=".95">Parc naturel</text>
<text x="886" y="80" font-family="Liberation Sans, sans-serif" font-size="12" font-style="italic" fill="#48a448" text-anchor="middle" stroke="#eef5e8" stroke-width="2.2" paint-order="stroke" opacity=".95">régional</text>
<text x="886" y="93" font-family="Liberation Sans, sans-serif" font-size="12" font-style="italic" fill="#48a448" text-anchor="middle" stroke="#eef5e8" stroke-width="2.2" paint-order="stroke" opacity=".95">des Préalpes</text>
<text x="886" y="107" font-family="Liberation Sans, sans-serif" font-size="12" font-style="italic" fill="#48a448" text-anchor="middle" stroke="#eef5e8" stroke-width="2.2" paint-order="stroke" opacity=".95">d'Azur</text>
<text x="663" y="200" font-family="Liberation Sans, sans-serif" font-size="12" font-style="italic" fill="#48a448" text-anchor="middle" stroke="#eef5e8" stroke-width="2.2" paint-order="stroke" opacity=".95">Parc naturel</text>
<text x="663" y="214" font-family="Liberation Sans, sans-serif" font-size="12" font-style="italic" fill="#48a448" text-anchor="middle" stroke="#eef5e8" stroke-width="2.2" paint-order="stroke" opacity=".95">régional</text>
<text x="663" y="227" font-family="Liberation Sans, sans-serif" font-size="12" font-style="italic" fill="#48a448" text-anchor="middle" stroke="#eef5e8" stroke-width="2.2" paint-order="stroke" opacity=".95">de la Sainte-</text>
<text x="663" y="241" font-family="Liberation Sans, sans-serif" font-size="12" font-style="italic" fill="#48a448" text-anchor="middle" stroke="#eef5e8" stroke-width="2.2" paint-order="stroke" opacity=".95">Baume</text>
<text x="528" y="275" font-family="Liberation Sans, sans-serif" font-size="12" font-style="italic" fill="#48a448" text-anchor="middle" stroke="#eef5e8" stroke-width="2.2" paint-order="stroke" opacity=".95">Parc national</text>
<text x="528" y="288" font-family="Liberation Sans, sans-serif" font-size="12" font-style="italic" fill="#48a448" text-anchor="middle" stroke="#eef5e8" stroke-width="2.2" paint-order="stroke" opacity=".95">des Calanques</text>
<text x="528" y="302" font-family="Liberation Sans, sans-serif" font-size="12" font-style="italic" fill="#48a448" text-anchor="middle" stroke="#eef5e8" stroke-width="2.2" paint-order="stroke" opacity=".95">(aire d'adhésion)</text>
<text x="794" y="266" font-family="Liberation Sans, sans-serif" font-size="12" font-style="italic" fill="#48a448" text-anchor="middle" stroke="#eef5e8" stroke-width="2.2" paint-order="stroke" opacity=".95">Parc national</text>
<text x="794" y="280" font-family="Liberation Sans, sans-serif" font-size="12" font-style="italic" fill="#48a448" text-anchor="middle" stroke="#eef5e8" stroke-width="2.2" paint-order="stroke" opacity=".95">de Port-</text>
<text x="794" y="294" font-family="Liberation Sans, sans-serif" font-size="12" font-style="italic" fill="#48a448" text-anchor="middle" stroke="#eef5e8" stroke-width="2.2" paint-order="stroke" opacity=".95">Cros (aire</text>
<text x="745" y="3" font-family="Liberation Sans, sans-serif" font-size="12" font-style="italic" fill="#8b78a6" text-anchor="middle" opacity=".8">Alpes-Côte</text>
<text x="745" y="18" font-family="Liberation Sans, sans-serif" font-size="12" font-style="italic" fill="#8b78a6" text-anchor="middle" opacity=".9">d'Azur</text>
<text x="450" y="44" font-family="Liberation Sans, sans-serif" font-size="12" font-style="normal" fill="#5a5a5a" text-anchor="middle" stroke="#f4f4ee" stroke-width="2" paint-order="stroke">Avignon</text>
<text x="358" y="75" font-family="Liberation Sans, sans-serif" font-size="12" font-style="normal" fill="#5a5a5a" text-anchor="middle" stroke="#f4f4ee" stroke-width="2" paint-order="stroke">Nîmes</text>
<text x="258" y="139" font-family="Liberation Sans, sans-serif" font-size="12" font-style="normal" fill="#5a5a5a" text-anchor="middle" stroke="#f4f4ee" stroke-width="2" paint-order="stroke">Montpellier</text>
<text x="568" y="231" font-family="Liberation Sans, sans-serif" font-size="15" font-style="normal" fill="#5a5a5a" text-anchor="middle" stroke="#f4f4ee" stroke-width="2" paint-order="stroke">Marseille</text>
<text x="685" y="278" font-family="Liberation Sans, sans-serif" font-size="12" font-style="normal" fill="#5a5a5a" text-anchor="middle" stroke="#f4f4ee" stroke-width="2" paint-order="stroke">Toulon</text>
<text x="964" y="100" font-family="Liberation Sans, sans-serif" font-size="15" font-style="normal" fill="#5a5a5a" text-anchor="start" stroke="#f4f4ee" stroke-width="2" paint-order="stroke">Mo</text>
<text x="540" y="163" font-family="Liberation Sans, sans-serif" font-size="12" font-style="normal" fill="#5a5a5a" text-anchor="start" stroke="#f4f4ee" stroke-width="2" paint-order="stroke">Aix-en-Provence</text>
<text x="972" y="127" font-family="Liberation Sans, sans-serif" font-size="15" font-style="normal" fill="#8a6fa8" text-anchor="start" >M</text>
</g></svg>
<svg class="abs" style="left:147px;top:138px" width="47" height="59" viewBox="0 0 47 59">
<rect x="-.5" y="-.5" width="48" height="60" fill="#dfe4f0" opacity=".6"/>
<rect x=".3" y=".3" width="46.400" height="58.400" fill="#0a0ac0"/>
<svg x="2.600" y="2.600" width="41.800" height="53.800" viewBox="0 0 46 58" preserveAspectRatio="none"><use href="#thg3"/></svg>
<rect x="17.500" y="22" width="11" height="17.500" fill="#e4e8ee" opacity=".7"/>
<text x="23" y="36" font-family="Liberation Sans, sans-serif" font-size="14" fill="#222" text-anchor="middle">1</text>
</svg>
<svg class="abs" style="left:171px;top:247px" width="44" height="58" viewBox="0 0 44 58">
<rect x=".3" y=".3" width="43.400" height="57.400" fill="#0a0ac0"/>
<svg x="2.600" y="2.600" width="38.800" height="52.800" viewBox="0 0 43 58" preserveAspectRatio="none"><use href="#thg2"/></svg>
<rect x="17" y="19" width="10.500" height="19" fill="#e4e8ee" opacity=".7"/>
<text x="22.300" y="34" font-family="Liberation Sans, sans-serif" font-size="14" fill="#222" text-anchor="middle">1</text>
</svg>
<svg class="abs" style="left:590px;top:161px" width="46" height="60" viewBox="0 0 46 60">
<defs><linearGradient id="m3s" x1="0" y1="0" x2="0" y2="1"><stop offset="0" stop-color="#8f9fb6"/><stop offset=".5" stop-color="#b4bccb"/><stop offset="1" stop-color="#cdd3dc"/></linearGradient><filter id="m3b"><feGaussianBlur stdDeviation=".8"/></filter></defs>
<rect x=".6" y=".4" width="45" height="59.200" fill="#f4f4fb"/>
<rect x="1.900" y="1.700" width="42.400" height="56.600" fill="none" stroke="#0c0c8c" stroke-width="2.600" stroke-dasharray="3.200 2.200"/>
<g filter="url(#m3b)"><rect x="3.200" y="3" width="39.800" height="54" fill="url(#m3s)"/>
<path d="M3.200 17 L20 16 L43 13.500 V24 H3.200Z" fill="#4f7fb4"/><path d="M3.200 16.500 L24 15.500 L43 13 V15 L24 17.500 L3.200 18.500Z" fill="#dfe6ee" opacity=".8"/>
<rect x="3.200" y="22" width="39.800" height="8" fill="#6a8296"/>
<path d="M3.200 27 L16 25 L30 29 L43 27 V40 H3.200Z" fill="#4a5a48"/><path d="M26 30 L43 28 V36 L30 36Z" fill="#a89a84"/>
<path d="M3.200 36 L14 33 L24 38 L34 34 L43 36 V52 H3.200Z" fill="#586224"/><path d="M3.200 44 L20 42 L43 46 V52 H3.200Z" fill="#6a6e34"/>
<rect x="3.200" y="51" width="39.800" height="6" fill="#a09890"/>
<path d="M25 52 L25.500 44 C25.500 41 29.500 41 29.500 44 L30 52Z" fill="#e2d6be"/></g><g opacity=".55"><rect x="3.200" y="3" width="39.800" height="54" fill="url(#m3s)"/>
<path d="M3.200 17 L20 16 L43 13.500 V24 H3.200Z" fill="#4f7fb4"/><path d="M3.200 16.500 L24 15.500 L43 13 V15 L24 17.500 L3.200 18.500Z" fill="#dfe6ee" opacity=".8"/>
<rect x="3.200" y="22" width="39.800" height="8" fill="#6a8296"/>
<path d="M3.200 27 L16 25 L30 29 L43 27 V40 H3.200Z" fill="#4a5a48"/><path d="M26 30 L43 28 V36 L30 36Z" fill="#a89a84"/>
<path d="M3.200 36 L14 33 L24 38 L34 34 L43 36 V52 H3.200Z" fill="#586224"/><path d="M3.200 44 L20 42 L43 46 V52 H3.200Z" fill="#6a6e34"/>
<rect x="3.200" y="51" width="39.800" height="6" fill="#a09890"/>
<path d="M25 52 L25.500 44 C25.500 41 29.500 41 29.500 44 L30 52Z" fill="#e2d6be"/></g>
<rect x="18.200" y="19.500" width="10" height="20" fill="#dfe6f2" opacity=".78"/>
<text x="23.300" y="34.500" font-family="Liberation Sans, sans-serif" font-size="14" fill="#1c1c1c" text-anchor="middle">7</text>
</svg>
<svg class="abs" style="left:938px;top:48px" width="40" height="245" viewBox="0 0 40 245">
<defs><linearGradient id="zb" x1="0" y1="0" x2="0" y2="1"><stop offset="0" stop-color="#ffffff"/><stop offset="1" stop-color="#e4e4e4"/></linearGradient>
<radialGradient id="zh" cx=".5" cy=".45" r=".6"><stop offset="0" stop-color="#d8e0ec"/><stop offset=".7" stop-color="#ccd6e4"/><stop offset="1" stop-color="#eef2f6"/></radialGradient></defs>
<rect x="4.200" y="0" width="30" height="229" fill="#7c7c7c" opacity=".34"/>
<rect x="13" y="44" width="12.400" height="172" fill="#3c4246"/>
<circle cx="19.200" cy="-2.500" r="11" fill="url(#zb)"/>
<path d="M8.200 31 A11 11 0 0 1 30.200 31 V42 L31.200 45.300 H7.200 L8.200 42 Z" fill="url(#zb)"/>
<path d="M14.300 32.500 H24.300 M19.300 27.500 V37.500" stroke="#1a1a1a" stroke-width="2"/>
<path d="M7.200 214 H31.200 L30.200 217 V229 A11 11 0 0 1 8.200 229 V217 Z" fill="url(#zb)"/>
<path d="M14.300 227.500 H24.300" stroke="#1a1a1a" stroke-width="2"/>
<circle cx="19.200" cy="142" r="11.200" fill="#f6f8fa"/><circle cx="19.200" cy="142" r="8.300" fill="url(#zh)"/>
</svg>
<svg class="abs" style="left:501px;top:185px" width="25" height="25" viewBox="0 0 25 25" fill="#fff" stroke="#111" stroke-width=".9">
<rect x="11" y="2.300" width="2.600" height="6.400" rx="1.200"/><rect x="11" y="16" width="2.600" height="6.400" rx="1.200"/><rect x="2" y="10.900" width="6.800" height="2.600" rx="1.200"/><rect x="16.200" y="10.900" width="6.800" height="2.600" rx="1.200"/>
</svg>
<!--TOOLBAR-->
<div class="btn" style="left:21px;top:355px;width:44px;height:22px"></div>
<svg class="abs" style="left:29px;top:358px" width="16" height="16" viewBox="0 0 16 16" ><circle cx="8.100" cy="8" r="6.100" fill="#fcfcfc"/><path d="M5.500 3.400 C6.800 2.800 8.200 3.400 8.600 4.600 C9.200 5.800 10.600 5.600 10.800 7 C11 8.400 9.600 8.600 9.400 9.800 C9.200 11 10 12.200 8.800 12.800 C7.600 13.200 7 11.800 6.600 10.600 C6.200 9.400 4.600 9.400 4.400 8 C4.200 6.800 5.400 6.400 5.400 5.400 C5.400 4.600 4.800 3.900 5.500 3.400Z M11.400 4 C12.600 4.800 13.400 6.400 13.400 8 C12.600 8.400 11.800 7.600 11.800 6.600 C11.800 5.600 11 4.800 11.400 4Z M3 9.600 C3.800 9.800 4.600 10.400 4.800 11.400 C4 11.400 3.200 10.600 3 9.600Z" fill="#3a3e45"/></svg><svg class="abs" style="left:50px;top:363px" width="8" height="6" viewBox="0 0 8 6" ><path d="M1.200 1.200 H6.800 L4 4.200Z" fill="#c4c6c8"/></svg>
<div class="btn" style="left:73px;top:355px;width:22px;height:22px"></div>
<svg class="abs" style="left:76px;top:358px" width="16" height="16" viewBox="0 0 16 16" ><g fill="none" stroke="#fcfcfc" stroke-width="1.1"><path d="M2.500 5 V2.500 H5 M7 2.500 H9.200 M11.200 2.500 H13.500 V5 M13.500 7.500 V9.500 M13.500 11.200 V13.500 H11.200 M9.500 13.500 H7.500 M2.500 7 V8.500"/><rect x="2.700" y="10.300" width="3" height="3" stroke-width="1.400"/><path d="M7.300 8.700 L11.300 4.700 M8.600 4.500 H11.500 V7.400"/></g></svg>
<div class="btn" style="left:103px;top:355px;width:22px;height:22px"></div>
<svg class="abs" style="left:106px;top:358px" width="16" height="16" viewBox="0 0 16 16" ><g fill="none" stroke="#fcfcfc" stroke-width="1.1"><path d="M2.500 8 V2.500 H13.500 V13.500 H8"/><rect x="2.500" y="10.500" width="3" height="3"/><path d="M11.500 4.500 L7 9 M7 5.500 V9 H10.500"/></g></svg>
<div class="btn" style="left:133px;top:355px;width:22px;height:22px"></div>
<svg class="abs" style="left:136px;top:358px" width="16" height="16" viewBox="0 0 16 16" ><rect x="2.500" y="2.500" width="11" height="11" fill="none" stroke="#fcfcfc" stroke-width="1.1"/><circle cx="5.800" cy="5.800" r="1.300" fill="#fcfcfc"/><path d="M3.500 12.500 L6.500 9.500 L8 11 L10.500 8 L12.800 12.500Z" fill="#fcfcfc"/></svg>
<div class="abs" style="left:163px;top:355px;width:1px;height:22px;background:#1b1e20"></div>
<div class="btn" style="left:172px;top:355px;width:22px;height:22px"></div>
<svg class="abs" style="left:175px;top:358px" width="16" height="16" viewBox="0 0 16 16" ><path d="M8 2.500 V13.500 M2.500 8 H13.500" fill="none" stroke="#fcfcfc" stroke-width="1.1" stroke-width="1.300"/></svg>
<div class="btn" style="left:202px;top:355px;width:22px;height:22px"></div>
<svg class="abs" style="left:205px;top:358px" width="16" height="16" viewBox="0 0 16 16" ><path d="M3 8 H13" fill="none" stroke="#fcfcfc" stroke-width="1.1" stroke-width="2"/></svg>
<div class="abs" style="left:232px;top:355px;width:1px;height:22px;background:#1b1e20"></div>
<div class="btn" style="left:241px;top:355px;width:22px;height:22px"></div>
<svg class="abs" style="left:244px;top:358px" width="16" height="16" viewBox="0 0 16 16" ><g fill="#fcfcfc"><path d="M8 2 L10.200 4.800 H5.800Z M8 14 L10.200 11.200 H5.800Z M2 8 L4.800 5.800 V10.200Z M14 8 L11.200 5.800 V10.200Z"/><rect x="6.800" y="6.800" width="2.400" height="2.400"/></g></svg>
<div class="btn" style="left:271px;top:355px;width:22px;height:22px"></div>
<svg class="abs" style="left:274px;top:358px" width="16" height="16" viewBox="0 0 16 16" ><g fill="none" stroke="#fcfcfc" stroke-width="1.1"><path d="M2.500 5 V2.500 H5 M11 2.500 H13.500 V5 M13.500 11 V13.500 H11 M5 13.500 H2.500 V11"/><rect x="5" y="5" width="6" height="6" stroke-width="1.300"/></g></svg>
<div class="btn" style="left:301px;top:355px;width:22px;height:22px"></div>
<svg class="abs" style="left:304px;top:358px" width="16" height="16" viewBox="0 0 16 16" ><path d="M5 2 L5 13 L7.800 10.300 L12.500 10 Z" fill="#fcfcfc"/><path d="M4 1 L6 3" stroke="#fcfcfc" stroke-width=".8"/></svg>
<div class="btn" style="left:331px;top:355px;width:22px;height:22px"></div>
<svg class="abs" style="left:334px;top:358px" width="16" height="16" viewBox="0 0 16 16" ><g fill="none" stroke="#fcfcfc" stroke-width="1.1"><path d="M11.500 9 V2.500 H4.500 V13.500 H8.500"/><path d="M11.500 10.500 V15 M9.300 12.700 H13.800" stroke-width="1.200"/></g></svg>
<div class="abs" style="left:507px;top:388px;width:17px;height:2px;background:repeating-linear-gradient(90deg,#85888c 0 2px,transparent 2px 3px)"></div>
<div class="hdr" style="left:12px;width:989px"></div>
<div class="abs" style="left:70px;top:393px;width:1px;height:20px;background:#5e6268"></div>
<div class="abs" style="left:170px;top:393px;width:1px;height:20px;background:#5e6268"></div>
<div class="abs" style="left:270px;top:393px;width:1px;height:20px;background:#5e6268"></div>
<div class="abs" style="left:370px;top:393px;width:1px;height:20px;background:#5e6268"></div>
<div class="abs" style="left:470px;top:393px;width:1px;height:20px;background:#5e6268"></div>
<div class="abs" style="left:570px;top:393px;width:1px;height:20px;background:#5e6268"></div>
<div class="abs" style="left:670px;top:393px;width:1px;height:20px;background:#5e6268"></div>
<div class="abs" style="left:770px;top:393px;width:1px;height:20px;background:#5e6268"></div>
<div class="abs" style="left:870px;top:393px;width:1px;height:20px;background:#5e6268"></div>
<div class="t hd" style="left:14px;top:396px;width:41px;overflow:hidden;word-spacing:0;font-kerning:none"><span style="letter-spacing:.32px">Thumbnail</span></div>
<svg class="abs" style="left:58px;top:399px" width="9" height="6"><path d="M1 5.200 L4.500 1.300 L8 5.200Z" fill="#cfd1d3"/></svg>
<div class="t hd" id="h1" style="left:74px;top:396px;letter-spacing:-0.047px">Filename</div>
<div class="t hd" id="h2" style="left:174px;top:396px;letter-spacing:0.187px">Date and time</div>
<div class="t hd" id="h3" style="left:274px;top:396px;letter-spacing:0.193px">Latitude</div>
<div class="t hd" id="h4" style="left:374px;top:396px;letter-spacing:0.197px">Longitude</div>
<div class="t hd" id="h5" style="left:474px;top:396px;letter-spacing:0.279px">Altitude</div>
<div class="t hd" id="h6" style="left:574px;top:396px;letter-spacing:-0.197px">Accuracy</div>
<div class="t hd" id="h7" style="left:674px;top:396px;letter-spacing:-0.349px">Tags</div>
<div class="t hd" id="h8" style="left:774px;top:396px;letter-spacing:0.005px">Status</div>
<div class="t hd" id="h9" style="left:874px;top:396px;letter-spacing:-0.247px">Speed</div>
<div class="abs" style="left:12px;top:413px;width:989px;height:478px;overflow:hidden;background:#1b1e20">
<div class="row base" style="left:0;top:1px">
<div class="cell c0" id="c0_0" style="left:63px;letter-spacing:-0.317px">IMG_1963.HE...</div>
<div class="cell c1" id="c0_1" style="left:163px;letter-spacing:-0.051px">9/18/25 6:02 ...</div>
<div class="cell c2" id="c0_2" style="left:263px">43.58372</div>
<div class="cell c3" id="c0_3" style="left:363px">5.486675</div>
<div class="cell c4" id="c0_4" style="left:463px">339.1087</div>
</div>
<div class="row sel" style="left:0;top:61px">
<div class="cell c0" id="c1_0" style="left:63px;letter-spacing:-0.099px">IMG_2285.heic</div>
<div class="cell c1" id="c1_1" style="left:163px;letter-spacing:0.055px">10/23/25 10:3...</div>
<div class="cell c2" id="c1_2" style="left:263px">43.27567</div>
<div class="cell c3" id="c1_3" style="left:363px">3.468117</div>
<div class="cell c4" id="c1_4" style="left:463px">4.250495</div>
</div>
<div class="row sel" style="left:0;top:121px">
<div class="cell c0" id="c2_0" style="left:63px;letter-spacing:-0.099px">IMG_2398.heic</div>
<div class="cell c1" id="c2_1" style="left:163px;letter-spacing:0.055px">10/26/25 12:3...</div>
<div class="cell c2" id="c2_2" style="left:263px">43.65444</div>
<div class="cell c3" id="c2_3" style="left:363px">3.349872</div>
<div class="cell c4" id="c2_4" style="left:463px">144.407</div>
</div>
<div class="row alt" style="left:0;top:181px">
<div class="cell c0" id="c3_0" style="left:63px;letter-spacing:-0.275px">IMG_E1964.H...</div>
<div class="cell c1" id="c3_1" style="left:163px;letter-spacing:-0.032px">9/18/25 6:08 ...</div>
<div class="cell c2" id="c3_2" style="left:263px">43.58371</div>
<div class="cell c3" id="c3_3" style="left:363px">5.486617</div>
<div class="cell c4" id="c3_4" style="left:463px">338.8597</div>
</div>
<div class="row base" style="left:0;top:241px">
<div class="cell c0" id="c4_0" style="left:63px;letter-spacing:-0.275px">IMG_E3686.H...</div>
<div class="cell c1" id="c4_1" style="left:163px;letter-spacing:-0.032px">1/28/26 2:37 ...</div>
<div class="cell c2" id="c4_2" style="left:263px">43.60836</div>
<div class="cell c3" id="c4_3" style="left:363px">5.524642</div>
<div class="cell c4" id="c4_4" style="left:463px">301.5576</div>
</div>
<div class="row sel" style="left:0;top:301px">
<div class="cell c0" id="c5_0" style="left:63px;letter-spacing:-0.275px">IMG_E3691.H...</div>
<div class="cell c1" id="c5_1" style="left:163px;letter-spacing:-0.032px">1/28/26 3:00 ...</div>
<div class="cell c2" id="c5_2" style="left:263px">43.60635</div>
<div class="cell c3" id="c5_3" style="left:363px">5.53075</div>
<div class="cell c4" id="c5_4" style="left:463px">395.8154</div>
</div>
<div class="row base" style="left:0;top:361px">
<div class="cell c0" id="c6_0" style="left:63px;letter-spacing:-0.275px">IMG_E3702.H...</div>
<div class="cell c1" id="c6_1" style="left:163px;letter-spacing:-0.032px">1/28/26 3:23 ...</div>
<div class="cell c2" id="c6_2" style="left:263px">43.60561</div>
<div class="cell c3" id="c6_3" style="left:363px">5.525119</div>
<div class="cell c4" id="c6_4" style="left:463px">302.8132</div>
</div>
<div class="row alt" style="left:0;top:421px">
<div class="cell c0" id="c7_0" style="left:63px;letter-spacing:-0.275px">IMG_E3727.H...</div>
<div class="cell c1" id="c7_1" style="left:163px;letter-spacing:-0.032px">1/31/26 2:44 ...</div>
<div class="cell c2" id="c7_2" style="left:263px">43.60572</div>
<div class="cell c3" id="c7_3" style="left:363px">5.536667</div>
<div class="cell c4" id="c7_4" style="left:463px">398.4477</div>
</div>
<!--THUMBS-->
<svg class="abs" style="left:8px;top:2px" width="43" height="58" viewBox="0 0 43 58"><defs><linearGradient id="t1s" x1="0" y1="0" x2="0" y2="1"><stop offset="0" stop-color="#5f88ba"/><stop offset="1" stop-color="#aec2d4"/></linearGradient><filter id="tb"><feGaussianBlur stdDeviation="0.8"/></filter><clipPath id="tc43"><rect width="43" height="58"/></clipPath></defs><g clip-path="url(#tc43)"><g id="thg1"><g filter="url(#tb)"><rect x="-2" y="-2" width="47" height="62" fill="#84807e"/><rect x="-2" y="-2" width="47" height="20.500" fill="url(#t1s)"/>
<ellipse cx="34" cy="8" rx="12" ry="3" fill="#c8d4e0" opacity=".7"/><ellipse cx="36" cy="14" rx="10" ry="2" fill="#d0d8e0" opacity=".7"/>
<rect x="-2" y="17.600" width="47" height="7" fill="#4a5a36"/><path d="M6 19 H20 V21 H6Z M28 20 H40 V22 H28Z" fill="#8a9270" opacity=".7"/>
<rect x="-2" y="24.500" width="47" height="6" fill="#c6b690"/>
<path d="M-2 31 L10 29.500 L22 31 L30 25 L45 24 V37 L30 38 L14 41 L-2 41Z" fill="#4f6c30"/><path d="M0 34 L12 32 L20 36 L6 39Z" fill="#6a8a3c" opacity=".8"/>
<path d="M-2 41 L14 40 L30 37 L45 35 V60 H-2Z" fill="#84807e"/><path d="M-2 46 L20 44 L45 42 V60 H-2Z" fill="#8e8a88"/>
<path d="M32 40 L42 37 L44 46 L34 50Z" fill="#55524e" opacity=".75"/>
<path d="M21 31 C20 30 20 33 20.500 36 L20 46 L21 52 L23.500 52.500 L24 47 L26.500 47.500 L27 54 L29.500 54 L30.500 48 L33 50 L34.500 47 L32 41 L30.500 33 C30 30 28 30 27 31Z" fill="#e6d8b4"/>
<path d="M20.500 24 C20 21 29 20.500 29.500 24.500 C30.500 28 29 31.500 25.500 31.500 C22 31.500 20 28 20.500 24Z" fill="#e8d6aa"/><path d="M28 23.500 C30.500 24 31 29 29 31 C28 29 28.500 26 28 23.500Z" fill="#cfb482"/>
<path d="M23 30 L27 31 L25 33Z" fill="#6a3a3a" opacity=".7"/></g><g opacity=".5"><rect x="-2" y="-2" width="47" height="62" fill="#84807e"/><rect x="-2" y="-2" width="47" height="20.500" fill="url(#t1s)"/>
<ellipse cx="34" cy="8" rx="12" ry="3" fill="#c8d4e0" opacity=".7"/><ellipse cx="36" cy="14" rx="10" ry="2" fill="#d0d8e0" opacity=".7"/>
<rect x="-2" y="17.600" width="47" height="7" fill="#4a5a36"/><path d="M6 19 H20 V21 H6Z M28 20 H40 V22 H28Z" fill="#8a9270" opacity=".7"/>
<rect x="-2" y="24.500" width="47" height="6" fill="#c6b690"/>
<path d="M-2 31 L10 29.500 L22 31 L30 25 L45 24 V37 L30 38 L14 41 L-2 41Z" fill="#4f6c30"/><path d="M0 34 L12 32 L20 36 L6 39Z" fill="#6a8a3c" opacity=".8"/>
<path d="M-2 41 L14 40 L30 37 L45 35 V60 H-2Z" fill="#84807e"/><path d="M-2 46 L20 44 L45 42 V60 H-2Z" fill="#8e8a88"/>
<path d="M32 40 L42 37 L44 46 L34 50Z" fill="#55524e" opacity=".75"/>
<path d="M21 31 C20 30 20 33 20.500 36 L20 46 L21 52 L23.500 52.500 L24 47 L26.500 47.500 L27 54 L29.500 54 L30.500 48 L33 50 L34.500 47 L32 41 L30.500 33 C30 30 28 30 27 31Z" fill="#e6d8b4"/>
<path d="M20.500 24 C20 21 29 20.500 29.500 24.500 C30.500 28 29 31.500 25.500 31.500 C22 31.500 20 28 20.500 24Z" fill="#e8d6aa"/><path d="M28 23.500 C30.500 24 31 29 29 31 C28 29 28.500 26 28 23.500Z" fill="#cfb482"/>
<path d="M23 30 L27 31 L25 33Z" fill="#6a3a3a" opacity=".7"/></g></g></g></svg>
<svg class="abs" style="left:8px;top:62px" width="43" height="58" viewBox="0 0 43 58"><defs><linearGradient id="t2s" x1="0" y1="0" x2="0" y2="1"><stop offset="0" stop-color="#4a8ad8"/><stop offset="1" stop-color="#6a8cb8"/></linearGradient><filter id="tb"><feGaussianBlur stdDeviation="0.8"/></filter><clipPath id="tc43"><rect width="43" height="58"/></clipPath></defs><g clip-path="url(#tc43)"><g id="thg2"><g filter="url(#tb)"><rect x="-2" y="-2" width="47" height="62" fill="#8c7240"/><rect x="-2" y="-2" width="47" height="27" fill="url(#t2s)"/>
<g fill="#dfe8f4"><ellipse cx="30" cy="4" rx="14" ry="4.500"/><ellipse cx="10" cy="11" rx="12" ry="2.500"/><ellipse cx="34" cy="11" rx="10" ry="2.500" opacity=".7"/><ellipse cx="8" cy="3" rx="5" ry="1.500" opacity=".7"/></g>
<rect x="-2" y="17" width="47" height="8" fill="#6288be" opacity=".8"/>
<rect x="-2" y="24.200" width="47" height="1.600" fill="#24405e"/><rect x="-2" y="25.600" width="47" height="3" fill="#c8cccc"/><rect x="-2" y="28.400" width="47" height="3" fill="#9c8450"/>
<path d="M21 31 L25 29.600 L29 31 L31 35 L36 41 L37 43 L33 42.500 L30 39 L28 44 L30 48.500 L28 49 L25 43 L23 38 L21.500 42 L20.600 38Z" fill="#e4dcc4"/><path d="M26 30.500 L30 31.500 L31 36 L28 35Z" fill="#4a3c2c"/>
<ellipse cx="38" cy="51" rx="4.200" ry="2" fill="#463820"/><circle cx="17" cy="50" r="1" fill="#4a3820"/></g><g opacity=".5"><rect x="-2" y="-2" width="47" height="62" fill="#8c7240"/><rect x="-2" y="-2" width="47" height="27" fill="url(#t2s)"/>
<g fill="#dfe8f4"><ellipse cx="30" cy="4" rx="14" ry="4.500"/><ellipse cx="10" cy="11" rx="12" ry="2.500"/><ellipse cx="34" cy="11" rx="10" ry="2.500" opacity=".7"/><ellipse cx="8" cy="3" rx="5" ry="1.500" opacity=".7"/></g>
<rect x="-2" y="17" width="47" height="8" fill="#6288be" opacity=".8"/>
<rect x="-2" y="24.200" width="47" height="1.600" fill="#24405e"/><rect x="-2" y="25.600" width="47" height="3" fill="#c8cccc"/><rect x="-2" y="28.400" width="47" height="3" fill="#9c8450"/>
<path d="M21 31 L25 29.600 L29 31 L31 35 L36 41 L37 43 L33 42.500 L30 39 L28 44 L30 48.500 L28 49 L25 43 L23 38 L21.500 42 L20.600 38Z" fill="#e4dcc4"/><path d="M26 30.500 L30 31.500 L31 36 L28 35Z" fill="#4a3c2c"/>
<ellipse cx="38" cy="51" rx="4.200" ry="2" fill="#463820"/><circle cx="17" cy="50" r="1" fill="#4a3820"/></g></g></g></svg>
<svg class="abs" style="left:7px;top:122px" width="46" height="58" viewBox="0 0 46 58"><defs><linearGradient id="t3s" x1="0" y1="0" x2="0" y2="1"><stop offset="0" stop-color="#0c58dc"/><stop offset="1" stop-color="#2f88ec"/></linearGradient><filter id="tb"><feGaussianBlur stdDeviation="0.8"/></filter><clipPath id="tc46"><rect width="46" height="58"/></clipPath></defs><g clip-path="url(#tc46)"><g id="thg3"><g filter="url(#tb)"><rect x="-2" y="-2" width="50" height="62" fill="#80303a"/><rect x="-2" y="-2" width="50" height="32" fill="url(#t3s)"/>
<g fill="#eef2f8"><ellipse cx="3" cy="5" rx="4" ry="3.500"/><ellipse cx="19" cy="3" rx="11" ry="3.500"/><ellipse cx="27" cy="7" rx="4" ry="2.500"/><ellipse cx="14" cy="12" rx="8" ry="3.500"/><ellipse cx="22" cy="17" rx="12" ry="4"/><ellipse cx="34" cy="22" rx="10" ry="4.500"/><ellipse cx="43" cy="21" rx="5" ry="5"/><ellipse cx="6" cy="24" rx="7" ry="2.500"/></g>
<path d="M-2 28.500 L10 28 L16 26.200 L21 25.400 L27 27.400 L34 28.500 L48 28.500 V31 H-2Z" fill="#5c5e58"/>
<path d="M-2 30 H48 V44 L30 40 L14 36 L-2 37Z" fill="#7f9cc8"/><path d="M22 31 H48 V40 L34 38Z" fill="#a8bcda"/><ellipse cx="3" cy="35" rx="2" ry="1.200" fill="#2a4030"/>
<path d="M-2 37 L14 36 L30 40 L48 45 V60 H-2Z" fill="#8a3038"/><path d="M4 42 L14 40.500 L18 46 L10 50 L3 48Z" fill="#8c7250" opacity=".85"/><path d="M-2 52 L48 50 V60 H-2Z" fill="#6e2630"/>
<path d="M19 60 L19 48 C19 45.500 20.500 44.500 23 44.500 C25.500 44.500 27 45.500 27 48 L27.500 60Z" fill="#ece2cc"/><ellipse cx="22.500" cy="42" rx="4" ry="3.200" fill="#e4d6b8"/>
<path d="M15 49 H18.500 V57 H15Z M27.500 49 H31.500 L30 55 H27.500Z" fill="#1c1a1c"/></g><g opacity=".5"><rect x="-2" y="-2" width="50" height="62" fill="#80303a"/><rect x="-2" y="-2" width="50" height="32" fill="url(#t3s)"/>
<g fill="#eef2f8"><ellipse cx="3" cy="5" rx="4" ry="3.500"/><ellipse cx="19" cy="3" rx="11" ry="3.500"/><ellipse cx="27" cy="7" rx="4" ry="2.500"/><ellipse cx="14" cy="12" rx="8" ry="3.500"/><ellipse cx="22" cy="17" rx="12" ry="4"/><ellipse cx="34" cy="22" rx="10" ry="4.500"/><ellipse cx="43" cy="21" rx="5" ry="5"/><ellipse cx="6" cy="24" rx="7" ry="2.500"/></g>
<path d="M-2 28.500 L10 28 L16 26.200 L21 25.400 L27 27.400 L34 28.500 L48 28.500 V31 H-2Z" fill="#5c5e58"/>
<path d="M-2 30 H48 V44 L30 40 L14 36 L-2 37Z" fill="#7f9cc8"/><path d="M22 31 H48 V40 L34 38Z" fill="#a8bcda"/><ellipse cx="3" cy="35" rx="2" ry="1.200" fill="#2a4030"/>
<path d="M-2 37 L14 36 L30 40 L48 45 V60 H-2Z" fill="#8a3038"/><path d="M4 42 L14 40.500 L18 46 L10 50 L3 48Z" fill="#8c7250" opacity=".85"/><path d="M-2 52 L48 50 V60 H-2Z" fill="#6e2630"/>
<path d="M19 60 L19 48 C19 45.500 20.500 44.500 23 44.500 C25.500 44.500 27 45.500 27 48 L27.500 60Z" fill="#ece2cc"/><ellipse cx="22.500" cy="42" rx="4" ry="3.200" fill="#e4d6b8"/>
<path d="M15 49 H18.500 V57 H15Z M27.500 49 H31.500 L30 55 H27.500Z" fill="#1c1a1c"/></g></g></g></svg>
<svg class="abs" style="left:8px;top:182px" width="43" height="58" viewBox="0 0 43 58"><defs><filter id="tb"><feGaussianBlur stdDeviation="0.8"/></filter><clipPath id="tc43"><rect width="43" height="58"/></clipPath></defs><g clip-path="url(#tc43)"><g id="thg4"><g filter="url(#tb)"><rect x="-2" y="-2" width="47" height="62" fill="#aaa08a"/><rect x="-2" y="-2" width="47" height="8.500" fill="#a4cce4"/><rect x="-2" y="5.800" width="47" height="3.600" fill="#6f8c3c"/>
<path d="M18 9.300 L45 11 V60 H38 L30 40 Z" fill="#7a8c3c"/><path d="M20.500 9.300 L45 11.300 V25 L34 18Z" fill="#4f8fbe"/><path d="M18 9.300 L20.500 9.300 L34 18 L45 25 V31 L30 20Z" fill="#94aa4a"/>
<path d="M-2 9.300 L17 9.300 L27 26 L34 44 L38 60 H-2Z" fill="#b0a68e"/><path d="M-2 9 L8 9 L5 16 L-2 22Z" fill="#c4b46e"/><path d="M8 9.300 L17 9.300 L20 14 L10 13Z" fill="#bcae80"/>
<path d="M2 25 L12 23.500 L15 30 L13 35 L4 33Z" fill="#6c665e" opacity=".75"/>
<path d="M13 21 C13 18.500 22 18 22.500 21.500 C24 24 23 28 22 30 L21.500 36 L20 39 L18.500 36 L17 33 L16 38 L14.500 36 L14 30 C13 27 12.600 24 13 21Z" fill="#dcae62"/><ellipse cx="17.500" cy="23" rx="3.600" ry="3" fill="#e2b870"/><circle cx="17" cy="24.500" r="1" fill="#4a3420"/>
<path d="M30 34 L45 40 V60 H38Z" fill="#7c7444" opacity=".9"/><path d="M28 30 L45 36 V42 L30 36Z" fill="#5e7030" opacity=".8"/></g><g opacity=".5"><rect x="-2" y="-2" width="47" height="62" fill="#aaa08a"/><rect x="-2" y="-2" width="47" height="8.500" fill="#a4cce4"/><rect x="-2" y="5.800" width="47" height="3.600" fill="#6f8c3c"/>
<path d="M18 9.300 L45 11 V60 H38 L30 40 Z" fill="#7a8c3c"/><path d="M20.500 9.300 L45 11.300 V25 L34 18Z" fill="#4f8fbe"/><path d="M18 9.300 L20.500 9.300 L34 18 L45 25 V31 L30 20Z" fill="#94aa4a"/>
<path d="M-2 9.300 L17 9.300 L27 26 L34 44 L38 60 H-2Z" fill="#b0a68e"/><path d="M-2 9 L8 9 L5 16 L-2 22Z" fill="#c4b46e"/><path d="M8 9.300 L17 9.300 L20 14 L10 13Z" fill="#bcae80"/>
<path d="M2 25 L12 23.500 L15 30 L13 35 L4 33Z" fill="#6c665e" opacity=".75"/>
<path d="M13 21 C13 18.500 22 18 22.500 21.500 C24 24 23 28 22 30 L21.500 36 L20 39 L18.500 36 L17 33 L16 38 L14.500 36 L14 30 C13 27 12.600 24 13 21Z" fill="#dcae62"/><ellipse cx="17.500" cy="23" rx="3.600" ry="3" fill="#e2b870"/><circle cx="17" cy="24.500" r="1" fill="#4a3420"/>
<path d="M30 34 L45 40 V60 H38Z" fill="#7c7444" opacity=".9"/><path d="M28 30 L45 36 V42 L30 36Z" fill="#5e7030" opacity=".8"/></g></g></g></svg>
<svg class="abs" style="left:17px;top:242px" width="26" height="58" viewBox="0 0 26 58"><defs><filter id="tb"><feGaussianBlur stdDeviation="0.8"/></filter><clipPath id="tc26"><rect width="26" height="58"/></clipPath></defs><g clip-path="url(#tc26)"><g id="thg5"><g filter="url(#tb)"><rect x="-2" y="-2" width="30" height="62" fill="#6e6a72"/><rect x="-2" y="-2" width="30" height="18" fill="#98964e"/><path d="M-2 -2 H14 L10 10 L-2 14Z" fill="#b4ac62"/><path d="M14 -2 H28 V14 L16 10Z" fill="#7c7a50"/>
<path d="M-2 14 L6 12 L7 36 L-2 40Z" fill="#62902e"/><ellipse cx="4.500" cy="22" rx="2.200" ry="3" fill="#b4cc6e"/>
<path d="M8 12 L28 10 V36 L12 32Z" fill="#625e68"/><path d="M10 18 L22 15 L28 20 V30 L14 28Z" fill="#58545c"/>
<path d="M5 33 L12 28 L20 30 L28 38 V60 H-2 V46Z" fill="#9aa4c0"/><path d="M0 44 L12 38 L26 42 L28 50 L-2 54Z" fill="#c0c8dc"/><path d="M6 36 L14 34 L18 40 L8 42Z" fill="#cfd6e6"/>
<path d="M-2 53 H28 V60 H-2Z" fill="#8a8e9e"/><path d="M14 45 L24 44 L26 48 L16 50Z M2 50 L10 49 L10 53 L3 54Z" fill="#5c5c68"/>
<path d="M11.500 30 C11.500 27 17 27 17 30 L17 36.500 L11.500 36.500Z" fill="#d2c6a4"/></g><g opacity=".5"><rect x="-2" y="-2" width="30" height="62" fill="#6e6a72"/><rect x="-2" y="-2" width="30" height="18" fill="#98964e"/><path d="M-2 -2 H14 L10 10 L-2 14Z" fill="#b4ac62"/><path d="M14 -2 H28 V14 L16 10Z" fill="#7c7a50"/>
<path d="M-2 14 L6 12 L7 36 L-2 40Z" fill="#62902e"/><ellipse cx="4.500" cy="22" rx="2.200" ry="3" fill="#b4cc6e"/>
<path d="M8 12 L28 10 V36 L12 32Z" fill="#625e68"/><path d="M10 18 L22 15 L28 20 V30 L14 28Z" fill="#58545c"/>
<path d="M5 33 L12 28 L20 30 L28 38 V60 H-2 V46Z" fill="#9aa4c0"/><path d="M0 44 L12 38 L26 42 L28 50 L-2 54Z" fill="#c0c8dc"/><path d="M6 36 L14 34 L18 40 L8 42Z" fill="#cfd6e6"/>
<path d="M-2 53 H28 V60 H-2Z" fill="#8a8e9e"/><path d="M14 45 L24 44 L26 48 L16 50Z M2 50 L10 49 L10 53 L3 54Z" fill="#5c5c68"/>
<path d="M11.500 30 C11.500 27 17 27 17 30 L17 36.500 L11.500 36.500Z" fill="#d2c6a4"/></g></g></g></svg>
<svg class="abs" style="left:8px;top:302px" width="43" height="58" viewBox="0 0 363 490" preserveAspectRatio="none"><use href="#photoG"/></svg>
<svg class="abs" style="left:8px;top:362px" width="43" height="58" viewBox="0 0 43 58"><defs><filter id="tb"><feGaussianBlur stdDeviation="0.8"/></filter><clipPath id="tc43"><rect width="43" height="58"/></clipPath></defs><g clip-path="url(#tc43)"><g id="thg6"><g filter="url(#tb)"><rect x="-2" y="-2" width="47" height="62" fill="#788c34"/><path d="M24 -2 H45 V26 L30 22Z" fill="#bcc8d6"/><path d="M6 -2 H24 L22 5 L10 6Z" fill="#c4c8c0"/>
<path d="M-2 -2 H8 L10 6 L22 5 L26 20 L24 38 L-2 42Z" fill="#7c9434"/><path d="M2 14 L14 8 L22 16 L20 32 L8 36 L0 28Z" fill="#98a83c"/><path d="M0 2 L10 6 L6 14 L-2 12Z" fill="#64802c"/>
<path d="M26 4 L43 2 V12 L30 14Z M34 12 L45 10 V20 L36 22Z" fill="#a08a6c" opacity=".8"/>
<path d="M29.500 -2 L31.500 -2 L36.500 33 L34.500 33Z" fill="#4e3a2e"/>
<path d="M28 24 L45 20 V40 L30 40Z" fill="#8c6c48"/><path d="M36 26 L45 24 V38 L38 38Z" fill="#9c6a3c"/>
<path d="M-2 41 L12 38 L24 37 L34 38 L45 36 V60 H-2Z" fill="#70462e"/><path d="M-2 41 L12 38 L24 37 L34 38 L45 36 V40 L24 41 L-2 45Z" fill="#4a3422"/><path d="M-2 50 L45 47 V60 H-2Z" fill="#7a4c34"/>
<path d="M22.500 27 C22.500 23.500 30.500 23.500 30.500 27.500 L30 36 L29.500 43 L27.500 43 L27 38 L25.500 38 L25 43 L23 43 L22.500 36Z" fill="#dccca4"/></g><g opacity=".5"><rect x="-2" y="-2" width="47" height="62" fill="#788c34"/><path d="M24 -2 H45 V26 L30 22Z" fill="#bcc8d6"/><path d="M6 -2 H24 L22 5 L10 6Z" fill="#c4c8c0"/>
<path d="M-2 -2 H8 L10 6 L22 5 L26 20 L24 38 L-2 42Z" fill="#7c9434"/><path d="M2 14 L14 8 L22 16 L20 32 L8 36 L0 28Z" fill="#98a83c"/><path d="M0 2 L10 6 L6 14 L-2 12Z" fill="#64802c"/>
<path d="M26 4 L43 2 V12 L30 14Z M34 12 L45 10 V20 L36 22Z" fill="#a08a6c" opacity=".8"/>
<path d="M29.500 -2 L31.500 -2 L36.500 33 L34.500 33Z" fill="#4e3a2e"/>
<path d="M28 24 L45 20 V40 L30 40Z" fill="#8c6c48"/><path d="M36 26 L45 24 V38 L38 38Z" fill="#9c6a3c"/>
<path d="M-2 41 L12 38 L24 37 L34 38 L45 36 V60 H-2Z" fill="#70462e"/><path d="M-2 41 L12 38 L24 37 L34 38 L45 36 V40 L24 41 L-2 45Z" fill="#4a3422"/><path d="M-2 50 L45 47 V60 H-2Z" fill="#7a4c34"/>
<path d="M22.500 27 C22.500 23.500 30.500 23.500 30.500 27.500 L30 36 L29.500 43 L27.500 43 L27 38 L25.500 38 L25 43 L23 43 L22.500 36Z" fill="#dccca4"/></g></g></g></svg>
<svg class="abs" style="left:8px;top:422px" width="43" height="58" viewBox="0 0 43 58"><defs><linearGradient id="t8s" x1="0" y1="0" x2="0" y2="1"><stop offset="0" stop-color="#ccd6de"/><stop offset="1" stop-color="#a8b8cc"/></linearGradient><filter id="tb"><feGaussianBlur stdDeviation="0.8"/></filter><clipPath id="tc43"><rect width="43" height="58"/></clipPath></defs><g clip-path="url(#tc43)"><g id="thg7"><g filter="url(#tb)"><rect x="-2" y="-2" width="47" height="62" fill="#b49e70"/><rect x="-2" y="-2" width="47" height="16" fill="url(#t8s)"/><rect x="-2" y="13" width="47" height="4" fill="#6a82a4"/><rect x="-2" y="16.500" width="47" height="4" fill="#3e5a50"/>
<rect x="-2" y="20" width="47" height="20" fill="#527c2c"/><path d="M-2 26 L20 24 L45 26 V34 H-2Z" fill="#648e30"/><path d="M-2 40 L12 36 L24 36 L45 40 V60 H-2Z" fill="#bca474"/><path d="M-2 48 L22 46 V60 H-2Z" fill="#b0966a"/>
<path d="M23 60 L23.500 40 C21 36 20 28 23.500 23 C27 18 37 18 40 22.500 C43.500 27 42.500 35 40.500 39 L43 46 L45 60Z" fill="#ecdcb6"/>
<path d="M21 24 C19 26 19.500 34 22.500 36 L24.500 26Z M41.500 24 C44 26 43.500 34 40.500 36 L39.500 26Z" fill="#d0b47e"/>
<ellipse cx="32" cy="33" rx="2.400" ry="2" fill="#2a2220"/><path d="M29.500 36.500 C31 38.500 33.500 38.500 35 36.500 L34 39.500 H30.500Z" fill="#5a3a34"/><ellipse cx="27" cy="26.500" rx="1.100" ry="1" fill="#2a2220"/><ellipse cx="35" cy="26" rx="1.100" ry="1" fill="#2a2220"/></g><g opacity=".5"><rect x="-2" y="-2" width="47" height="62" fill="#b49e70"/><rect x="-2" y="-2" width="47" height="16" fill="url(#t8s)"/><rect x="-2" y="13" width="47" height="4" fill="#6a82a4"/><rect x="-2" y="16.500" width="47" height="4" fill="#3e5a50"/>
<rect x="-2" y="20" width="47" height="20" fill="#527c2c"/><path d="M-2 26 L20 24 L45 26 V34 H-2Z" fill="#648e30"/><path d="M-2 40 L12 36 L24 36 L45 40 V60 H-2Z" fill="#bca474"/><path d="M-2 48 L22 46 V60 H-2Z" fill="#b0966a"/>
<path d="M23 60 L23.500 40 C21 36 20 28 23.500 23 C27 18 37 18 40 22.500 C43.500 27 42.500 35 40.500 39 L43 46 L45 60Z" fill="#ecdcb6"/>
<path d="M21 24 C19 26 19.500 34 22.500 36 L24.500 26Z M41.500 24 C44 26 43.500 34 40.500 36 L39.500 26Z" fill="#d0b47e"/>
<ellipse cx="32" cy="33" rx="2.400" ry="2" fill="#2a2220"/><path d="M29.500 36.500 C31 38.500 33.500 38.500 35 36.500 L34 39.500 H30.500Z" fill="#5a3a34"/><ellipse cx="27" cy="26.500" rx="1.100" ry="1" fill="#2a2220"/><ellipse cx="35" cy="26" rx="1.100" ry="1" fill="#2a2220"/></g></g></g></svg>
<!--/THUMBS-->
</div>
<div class="abs" style="left:1002px;top:392px;width:13px;height:499px;background:#2a2e32"></div>
<div class="abs" style="left:1002px;top:406px;width:13px;height:366px;background:#44474e;border:1px solid #575b61;border-radius:1px"></div>
<div class="abs" style="left:1002px;top:772px;width:13px;height:104px;background:#393c44"></div>
<svg class="abs" style="left:1002px;top:393px" width="12" height="12"><rect x=".5" y=".5" width="11" height="11" fill="#3d4146" stroke="#5a5e62"/><path d="M2.500 8 L6 3.500 L9.500 8Z" fill="#e4e5e6"/></svg>
<svg class="abs" style="left:1002px;top:877px" width="12" height="12"><rect x=".5" y=".5" width="11" height="11" fill="#3d4146" stroke="#5a5e62"/><path d="M2.500 4 L6 8.500 L9.500 4Z" fill="#e4e5e6"/></svg>
<div class="abs" style="left:1018px;top:458px;width:2px;height:17px;background:repeating-linear-gradient(180deg,#85888c 0 2px,transparent 2px 3px)"></div>
<!--TABLE-->
<!--RIGHT-->
<div class="cb" style="top:53px"></div><svg class="abs" style="left:1029px;top:53px" width="13" height="13" viewBox="0 0 13 13"><path d="M2.800 7 L5 10 L10 2.600" fill="none" stroke="#fcfcfc" stroke-width="1.300"/></svg>
<div class="t rl" id="r0" style="left:1048px;top:53px;letter-spacing:0.071px">Coordinates</div>
<div class="t rl" id="r1" style="left:1029px;top:82px;letter-spacing:0.177px">La<u>t</u>itude</div>
<div class="field" style="top:78px"></div>
<div class="t fv" id="f1" style="left:1136px;top:82px;letter-spacing:-0.066px">43.606350000170</div>
<svg class="abs" style="left:1371px;top:84px" width="17" height="13" viewBox="0 0 17 13"><path d="M0.500 6.500 L5.500 1 H15 C15.800 1 16.200 1.400 16.200 2.200 V10.800 C16.200 11.600 15.800 12 15 12 H5.500 Z" fill="#fcfcfc"/><path d="M8.200 4 L13.200 9 M13.200 4 L8.200 9" stroke="#1b1e20" stroke-width="1.500"/></svg>
<div class="t rl" id="r2" style="left:1029px;top:114px;letter-spacing:0.217px">Lo<u>n</u>gitude</div>
<div class="field" style="top:110px"></div>
<div class="t fv" id="f2" style="left:1136px;top:114px;letter-spacing:-0.075px">5.530750000212</div>
<svg class="abs" style="left:1371px;top:116px" width="17" height="13" viewBox="0 0 17 13"><path d="M0.500 6.500 L5.500 1 H15 C15.800 1 16.200 1.400 16.200 2.200 V10.800 C16.200 11.600 15.800 12 15 12 H5.500 Z" fill="#fcfcfc"/><path d="M8.200 4 L13.200 9 M13.200 4 L8.200 9" stroke="#1b1e20" stroke-width="1.500"/></svg>
<div class="cb" style="top:145.5px"></div>
<svg class="abs" style="left:1029px;top:145.5px" width="13" height="13" viewBox="0 0 13 13"><path d="M2.800 7 L5 10 L10 2.600" fill="none" stroke="#fcfcfc" stroke-width="1.300"/></svg>
<div class="t rl" id="r3" style="left:1048px;top:146px;letter-spacing:0.337px">Al<u>t</u>itude</div>
<div class="field" style="top:142px"></div>
<div class="t fv" id="f3" style="left:1136px;top:146px;letter-spacing:-0.052px">395.815436241611</div>
<svg class="abs" style="left:1371px;top:148px" width="17" height="13" viewBox="0 0 17 13"><path d="M0.500 6.500 L5.500 1 H15 C15.800 1 16.200 1.400 16.200 2.200 V10.800 C16.200 11.600 15.800 12 15 12 H5.500 Z" fill="#fcfcfc"/><path d="M8.200 4 L13.200 9 M13.200 4 L8.200 9" stroke="#1b1e20" stroke-width="1.500"/></svg>
<div class="cb" style="top:177.5px"></div>
<div class="t rl" id="r4" style="left:1048px;top:178px;letter-spacing:-0.287px">S<u>p</u>eed</div>
<div class="field" style="top:174px"></div>
<div class="cb" style="top:209.5px"></div>
<div class="t rl" id="r5" style="left:1048px;top:210px;letter-spacing:0.152px"># sat<u>e</u>llites</div>
<div class="field" style="top:206px"></div>
<div class="cb" style="top:241.5px"></div>
<div class="t rl" id="r6" style="left:1048px;top:242px;letter-spacing:-0.061px"><u>F</u>ix type</div>
<div class="btn" style="left:1134px;top:238px;width:259px;height:24px;background:linear-gradient(#363b40,#32373c);border-color:#4a4e52"></div>
<div class="t" style="left:1138px;top:242px;color:#6e7276">2-d</div>
<svg class="abs" style="left:1378px;top:248px" width="9" height="6"><path d="M0.500 0.800 H8.500 L4.500 5.200Z" fill="#5e6266"/></svg>
<div class="cb" style="top:273.5px"></div>
<div class="t rl" id="r7" style="left:1048px;top:274px;letter-spacing:-0.71px">DOP</div>
<div class="field" style="top:270px"></div>
<div class="btn" style="left:1030px;top:302px;width:363px;height:24px;background:linear-gradient(#43474d,#3a3e44);border-color:#5c6065"></div>
<div class="t" id="apl" style="left:1194px;top:307px;letter-spacing:0.217px">Appl<u>y</u></div>
<div class="abs" style="left:1029px;top:333px;width:365px;height:1px;background:#1d2023"></div>
<div class="abs" style="left:1029px;top:334px;width:365px;height:1px;background:#3e4246"></div>
<div class="vtab" style="top:40px;height:63px;width:28px;background:#2a2e32;border-color:#50545a"></div>
<div class="vt" id="v0" style="left:1424px;top:51.5px;letter-spacing:0.066px"><u>D</u>etails</div>
<div class="vtab" style="top:106px;height:113px;border-color:#3a3e42;background:#272b2f"></div>
<div class="vt" id="v1" style="left:1424px;top:117.5px;letter-spacing:-0.11px"><u>G</u>PS Correlator</div>
<div class="vtab" style="top:222px;height:91px;border-color:#3a3e42;background:#272b2f"></div>
<div class="vt" id="v2" style="left:1424px;top:233.5px;letter-spacing:0.072px"><u>U</u>ndo/Redo</div>
<div class="vtab" style="top:316px;height:140px;border-color:#3a3e42;background:#272b2f"></div>
<div class="vt" id="v3" style="left:1424px;top:327.5px;letter-spacing:-0.109px"><u>R</u>everse Geocoding</div>
<div class="vtab" style="top:458px;height:63px;border-color:#3a3e42;background:#272b2f"></div>
<div class="vt" id="v4" style="left:1424px;top:469.5px;letter-spacing:-0.223px"><u>S</u>earch</div>
<div class="vtab" style="top:524px;height:91px;border-color:#3a3e42;background:#272b2f"></div>
<div class="vt" id="v5" style="left:1424px;top:535.5px;letter-spacing:-0.097px"><u>K</u>ML Export</div>
<div class="abs" style="left:1403px;top:103px;width:1px;height:510px;background:#3a3e42"></div>
<!--PHOTO-->
<div class="abs" style="left:1029px;top:343px;width:365px;height:539px;background:#1b1e20"></div>
<svg class="abs" style="left:1030px;top:370px" width="363" height="484" viewBox="0 0 363 484">
<defs>
<linearGradient id="psky" x1="0" y1="0" x2="0" y2="1"><stop offset="0" stop-color="#0462ee"/><stop offset=".5" stop-color="#0f82f6"/><stop offset=".85" stop-color="#3ba4f6"/><stop offset="1" stop-color="#7cc4f4"/></linearGradient>
<linearGradient id="cg1" x1="0" y1="0" x2="0" y2="1"><stop offset="0" stop-color="#ffffff"/><stop offset=".5" stop-color="#eef0f6"/><stop offset=".8" stop-color="#a9b0c4"/><stop offset="1" stop-color="#8a92ac"/></linearGradient>
<linearGradient id="cg2" x1="0" y1="0" x2="0" y2="1"><stop offset="0" stop-color="#fafbfd"/><stop offset=".45" stop-color="#e4e7f0"/><stop offset=".8" stop-color="#9aa2b8"/><stop offset="1" stop-color="#9098b0"/></linearGradient>
<linearGradient id="cg3" x1="0" y1="0" x2="0" y2="1"><stop offset="0" stop-color="#b8bece"/><stop offset=".5" stop-color="#c8cede"/><stop offset="1" stop-color="#e4eaf4"/></linearGradient>
<linearGradient id="pveg" x1="0" y1="0" x2="0" y2="1"><stop offset="0" stop-color="#2f5e58"/><stop offset=".15" stop-color="#3a6a4c"/><stop offset=".26" stop-color="#5a8440"/><stop offset=".36" stop-color="#9ab04a"/><stop offset=".5" stop-color="#86b82e"/><stop offset=".8" stop-color="#6aa626"/><stop offset="1" stop-color="#588e28"/></linearGradient>
<filter id="pb2" x="-10%" y="-10%" width="120%" height="120%"><feGaussianBlur stdDeviation="2"/></filter>
<filter id="pb15" x="-10%" y="-10%" width="120%" height="120%"><feGaussianBlur stdDeviation="1.4"/></filter>
<filter id="pb4" x="-20%" y="-20%" width="140%" height="140%"><feGaussianBlur stdDeviation="4"/></filter>
<filter id="pb8" x="-30%" y="-30%" width="160%" height="160%"><feGaussianBlur stdDeviation="8"/></filter>
<filter id="pb1"><feGaussianBlur stdDeviation="0.8"/></filter>
<filter id="gnz" x="0" y="0" width="100%" height="100%"><feTurbulence type="fractalNoise" baseFrequency="0.22" numOctaves="2" seed="7" result="n"/><feColorMatrix in="n" type="matrix" values="0 0 0 0 0.70  0 0 0 0 0.65  0 0 0 0 0.58  0 3.2 0 0 -1.78"/><feComposite in2="SourceGraphic" operator="in"/></filter>
<filter id="gnd" x="0" y="0" width="100%" height="100%"><feTurbulence type="fractalNoise" baseFrequency="0.06" numOctaves="3" seed="11" result="n"/><feColorMatrix in="n" type="matrix" values="0 0 0 0 0.16  0 0 0 0 0.10  0 0 0 0 0.10  2.6 0 0 0 -1.0"/><feComposite in2="SourceGraphic" operator="in"/></filter>
<filter id="vnz" x="0" y="0" width="100%" height="100%"><feTurbulence type="fractalNoise" baseFrequency="0.07" numOctaves="2" seed="3" result="n"/><feColorMatrix in="n" type="matrix" values="0 0 0 0 0.10  0 0 0 0 0.22  0 0 0 0 0.08  0 2.2 0 0 -0.95"/><feComposite in2="SourceGraphic" operator="in"/></filter>
<filter id="bnz" x="0" y="0" width="100%" height="100%"><feTurbulence type="fractalNoise" baseFrequency="0.14" numOctaves="2" seed="9" result="n"/><feColorMatrix in="n" type="matrix" values="0 0 0 0 0.08  0 0 0 0 0.16  0 0 0 0 0.08  0 3 0 0 -1.3"/><feComposite in2="SourceGraphic" operator="in"/></filter>
<clipPath id="pc"><rect width="363" height="484"/></clipPath>
</defs><g clip-path="url(#pc)" id="photoG">
<rect width="363" height="132" fill="url(#psky)"/>
<ellipse cx="30" cy="6" rx="70" ry="18" fill="#3f6cae" filter="url(#pb8)"/>
<ellipse cx="20" cy="16" rx="34" ry="10" fill="#5a74a4" filter="url(#pb4)"/>
<ellipse cx="120" cy="4" rx="40" ry="10" fill="#1f58c8" filter="url(#pb8)" opacity=".8"/>
<path d="M169 84 C173.3 81.7 193.3 76.8 209 75 C224.7 73.2 247.3 73.0 263 73 C278.7 73.0 294.2 73.2 303 75 C311.8 76.8 311.2 81.2 316 84 C320.8 86.8 328.0 89.7 332 92 C336.0 94.3 334.3 97.7 340 98 C345.7 98.3 361.7 89.8 366 94 C370.3 98.2 381.0 118.3 366 123 C351.0 127.7 297.7 123.0 276 122 C254.3 121.0 248.8 119.7 236 117 C223.2 114.3 203.5 109.7 199 106 C194.5 102.3 211.7 97.8 209 95 C206.3 92.2 189.7 90.8 183 89 C176.3 87.2 164.7 86.3 169 84Z" fill="url(#cg3)" filter="url(#pb2)" opacity="1"/>
<path d="M215 100 C216.7 97.3 245.8 96.0 260 96 C274.2 96.0 288.3 98.0 300 100 C311.7 102.0 330.0 105.7 330 108 C330.0 110.3 313.3 113.3 300 114 C286.7 114.7 264.2 114.3 250 112 C235.8 109.7 213.3 102.7 215 100Z" fill="#e8ecf4" filter="url(#pb2)" opacity="0.9"/>
<path d="M300 96 C302.7 94.0 325.3 91.3 332 92 C338.7 92.7 342.7 98.0 340 100 C337.3 102.0 322.7 104.7 316 104 C309.3 103.3 297.3 98.0 300 96Z" fill="#f2f4f8" filter="url(#pb15)" opacity="1"/>
<path d="M156 73 C156.8 70.7 165.2 65.7 166 62 C166.8 58.3 159.2 54.2 161 51 C162.8 47.8 173.3 46.0 177 43 C180.7 40.0 178.5 35.7 183 33 C187.5 30.3 198.7 29.7 204 27 C209.3 24.3 210.5 17.8 215 17 C219.5 16.2 227.5 19.0 231 22 C234.5 25.0 233.3 31.8 236 35 C238.7 38.2 243.5 41.8 247 41 C250.5 40.2 254.3 33.2 257 30 C259.7 26.8 264.7 24.7 263 22 C261.3 19.3 249.7 16.7 247 14 C244.3 11.3 244.3 8.7 247 6 C249.7 3.3 245.2 -0.7 263 -2 C280.8 -3.3 336.5 -4.2 354 -2 C371.5 0.2 365.7 -1.3 368 11 C370.3 23.3 372.2 62.0 368 72 C363.8 82.0 351.7 70.7 343 71 C334.3 71.3 324.8 74.0 316 74 C307.2 74.0 298.8 71.0 290 71 C281.2 71.0 272.0 73.2 263 74 C254.0 74.8 245.0 74.7 236 76 C227.0 77.3 217.8 81.0 209 82 C200.2 83.0 191.0 83.0 183 82 C175.0 81.0 165.5 77.5 161 76 C156.5 74.5 155.2 75.3 156 73Z" fill="url(#cg2)" filter="url(#pb2)" opacity="1"/>
<path d="M268 8 C274.3 4.3 287.2 2.3 300 2 C312.8 1.7 336.7 2.7 345 6 C353.3 9.3 352.5 18.0 350 22 C347.5 26.0 340.0 28.3 330 30 C320.0 31.7 301.3 33.0 290 32 C278.7 31.0 265.7 28.0 262 24 C258.3 20.0 261.7 11.7 268 8Z" fill="#f4f5f9" filter="url(#pb2)" opacity="0.95"/>
<path d="M300 40 C304.5 36.7 317.5 32.0 325 32 C332.5 32.0 342.5 35.7 345 40 C347.5 44.3 345.0 54.3 340 58 C335.0 61.7 322.0 63.0 315 62 C308.0 61.0 300.5 55.7 298 52 C295.5 48.3 295.5 43.3 300 40Z" fill="#f8f9fb" filter="url(#pb2)" opacity="0.95"/>
<path d="M196 34 C200.8 30.0 209.0 22.7 215 22 C221.0 21.3 227.8 26.0 232 30 C236.2 34.0 241.2 41.3 240 46 C238.8 50.7 231.7 56.3 225 58 C218.3 59.7 206.5 58.0 200 56 C193.5 54.0 186.7 49.7 186 46 C185.3 42.3 191.2 38.0 196 34Z" fill="#f6f7fa" filter="url(#pb2)" opacity="0.95"/>
<path d="M6 33 C8.7 31.2 15.8 27.7 22 27 C28.2 26.3 37.2 29.7 43 29 C48.8 28.3 52.0 22.8 57 23 C62.0 23.2 68.5 30.2 73 30 C77.5 29.8 80.5 24.7 84 22 C87.5 19.3 90.5 14.5 94 14 C97.5 13.5 102.3 16.3 105 19 C107.7 21.7 106.0 28.7 110 30 C114.0 31.3 123.2 26.5 129 27 C134.8 27.5 140.2 29.8 145 33 C149.8 36.2 155.3 42.0 158 46 C160.7 50.0 163.2 53.5 161 57 C158.8 60.5 151.2 64.3 145 67 C138.8 69.7 129.3 71.2 124 73 C118.7 74.8 116.7 78.0 113 78 C109.3 78.0 106.0 76.2 102 73 C98.0 69.8 93.8 61.7 89 59 C84.2 56.3 78.3 58.3 73 57 C67.7 55.7 64.2 52.8 57 51 C49.8 49.2 37.7 46.8 30 46 C22.3 45.2 15.0 47.3 11 46 C7.0 44.7 6.8 40.2 6 38 C5.2 35.8 3.3 34.8 6 33Z" fill="url(#cg1)" filter="url(#pb2)" opacity="1"/>
<path d="M40 30 C43.5 27.3 51.7 23.7 57 24 C62.3 24.3 69.8 28.7 72 32 C74.2 35.3 73.7 41.7 70 44 C66.3 46.3 55.7 46.7 50 46 C44.3 45.3 37.7 42.7 36 40 C34.3 37.3 36.5 32.7 40 30Z" fill="#fbfcfd" filter="url(#pb15)" opacity="1"/>
<path d="M100 36 C102.8 31.3 117.3 27.7 125 28 C132.7 28.3 141.8 34.0 146 38 C150.2 42.0 152.7 48.3 150 52 C147.3 55.7 137.0 59.3 130 60 C123.0 60.7 113.0 60.0 108 56 C103.0 52.0 97.2 40.7 100 36Z" fill="#f8f9fb" filter="url(#pb2)" opacity="1"/>
<path d="M14 75 C15.3 73.2 27.0 71.2 35 71 C43.0 70.8 55.3 72.7 62 74 C68.7 75.3 75.0 77.3 75 79 C75.0 80.7 70.0 83.5 62 84 C54.0 84.5 35.0 83.5 27 82 C19.0 80.5 12.7 76.8 14 75Z" fill="#d8deee" filter="url(#pb15)" opacity="1"/>
<path d="M327 75 C331.7 73.0 359.5 69.3 366 71 C372.5 72.7 370.7 83.0 366 85 C361.3 87.0 344.5 84.7 338 83 C331.5 81.3 322.3 77.0 327 75Z" fill="#dfe3ee" filter="url(#pb15)" opacity="1"/>
<path d="M-4 92 C4.8 85.7 33.5 87.7 49 89 C64.5 90.3 73.8 97.3 89 100 C104.2 102.7 131.5 101.0 140 105 C148.5 109.0 164.0 120.3 140 124 C116.0 127.7 20.0 132.3 -4 127 C-28.0 121.7 -12.8 98.3 -4 92Z" fill="#e2e8f4" filter="url(#pb2)" opacity="0.95"/>
<path d="M140 108 C143.5 106.0 158.8 104.7 166 105 C173.2 105.3 175.8 108.7 183 110 C190.2 111.3 209.0 111.8 209 113 C209.0 114.2 193.7 116.3 183 117 C172.3 117.7 152.2 118.5 145 117 C137.8 115.5 136.5 110.0 140 108Z" fill="#dfe4f0" filter="url(#pb15)" opacity="0.95"/>
<rect x="130" y="118" width="240" height="12" fill="#c4dcf6" filter="url(#pb2)" opacity=".9"/>
<path d="M0 126 L40 124 L90 128 L140 129 L200 127 L260 126 L320 127 L363 129 V143 H0Z" fill="#2468c4" filter="url(#pb1)"/>
<path d="M140 133 L190 131 L240 132 L300 130 L363 132 V140 H140Z" fill="#6f98c0" opacity=".65" filter="url(#pb15)"/>
<rect y="138" width="363" height="212" fill="url(#pveg)"/>
<path d="M-5 140 L100 142 L150 144 L230 138 L300 137 L368 140 V160 L300 164 L250 172 L180 176 L-5 182Z" fill="#2f5a4c" filter="url(#pb2)"/>
<path d="M-5 150 L150 148 L230 154 L190 170 L-5 176Z" fill="#28503f" filter="url(#pb4)" opacity=".85"/>
<path d="M200 150 L280 146 L368 150 V162 L280 168 L200 166Z" fill="#3a6a48" filter="url(#pb4)" opacity=".8"/>
<ellipse cx="112" cy="183" rx="22" ry="4" fill="#d8c49a" filter="url(#pb15)"/>
<ellipse cx="215" cy="193" rx="34" ry="8" fill="#c8c662" filter="url(#pb4)"/>
<ellipse cx="40" cy="186" rx="50" ry="7" fill="#b4d048" filter="url(#pb4)"/>
<ellipse cx="90" cy="228" rx="120" ry="26" fill="#62a624" filter="url(#pb8)"/>
<ellipse cx="220" cy="238" rx="70" ry="26" fill="#84b634" filter="url(#pb8)"/>
<ellipse cx="160" cy="205" rx="60" ry="10" fill="#7eb22c" filter="url(#pb4)"/>
<ellipse cx="322" cy="200" rx="48" ry="46" fill="#78a030" filter="url(#pb8)"/>
<ellipse cx="350" cy="240" rx="28" ry="50" fill="#58723a" filter="url(#pb8)"/>
<ellipse cx="296" cy="160" rx="16" ry="7" fill="#8cba3a" filter="url(#pb4)"/>
<ellipse cx="345" cy="170" rx="18" ry="10" fill="#86b030" filter="url(#pb4)"/>
<g filter="url(#pb15)" opacity=".75"><ellipse cx="43" cy="242" rx="3.9" ry="2.5" fill="#4a8a26"/><ellipse cx="257" cy="227" rx="4.9" ry="1.9" fill="#b4d448"/><ellipse cx="61" cy="196" rx="3.1" ry="2.7" fill="#3e7a22"/><ellipse cx="38" cy="246" rx="4.8" ry="2.9" fill="#a4cc3a"/><ellipse cx="259" cy="245" rx="4.6" ry="2.7" fill="#3e7a22"/><ellipse cx="249" cy="232" rx="4.1" ry="2.8" fill="#2f6a20"/><ellipse cx="6" cy="245" rx="2.3" ry="3.1" fill="#3e7a22"/><ellipse cx="118" cy="232" rx="3.0" ry="2.5" fill="#4a8a26"/><ellipse cx="173" cy="227" rx="4.5" ry="1.6" fill="#4a8a26"/><ellipse cx="54" cy="260" rx="4.7" ry="3.0" fill="#b4d448"/><ellipse cx="257" cy="201" rx="3.7" ry="2.6" fill="#a4cc3a"/><ellipse cx="52" cy="257" rx="4.7" ry="2.3" fill="#2f6a20"/><ellipse cx="248" cy="229" rx="3.0" ry="2.5" fill="#2f6a20"/><ellipse cx="7" cy="202" rx="4.2" ry="3.5" fill="#a4cc3a"/><ellipse cx="1" cy="201" rx="3.8" ry="2.5" fill="#b4d448"/><ellipse cx="158" cy="233" rx="3.9" ry="1.9" fill="#4a8a26"/><ellipse cx="163" cy="251" rx="3.0" ry="3.0" fill="#2f6a20"/><ellipse cx="64" cy="207" rx="4.8" ry="1.8" fill="#a4cc3a"/><ellipse cx="97" cy="241" rx="4.0" ry="3.3" fill="#4a8a26"/><ellipse cx="106" cy="261" rx="4.9" ry="2.7" fill="#2f6a20"/><ellipse cx="128" cy="221" rx="2.7" ry="3.3" fill="#4a8a26"/><ellipse cx="146" cy="225" rx="3.2" ry="3.0" fill="#3e7a22"/><ellipse cx="218" cy="199" rx="2.8" ry="2.1" fill="#a4cc3a"/><ellipse cx="65" cy="222" rx="4.6" ry="2.8" fill="#4a8a26"/><ellipse cx="256" cy="245" rx="3.4" ry="2.0" fill="#b4d448"/><ellipse cx="237" cy="228" rx="4.9" ry="3.3" fill="#2f6a20"/><ellipse cx="207" cy="254" rx="3.8" ry="2.4" fill="#b4d448"/><ellipse cx="235" cy="227" rx="2.4" ry="2.7" fill="#4a8a26"/><ellipse cx="200" cy="197" rx="4.1" ry="3.4" fill="#3e7a22"/><ellipse cx="69" cy="218" rx="2.7" ry="3.4" fill="#a4cc3a"/><ellipse cx="67" cy="223" rx="4.9" ry="3.3" fill="#4a8a26"/><ellipse cx="37" cy="222" rx="2.6" ry="2.8" fill="#4a8a26"/><ellipse cx="19" cy="204" rx="2.8" ry="2.1" fill="#2f6a20"/><ellipse cx="103" cy="255" rx="3.9" ry="1.9" fill="#a4cc3a"/><ellipse cx="52" cy="245" rx="4.3" ry="2.7" fill="#b4d448"/><ellipse cx="227" cy="247" rx="4.4" ry="1.5" fill="#a4cc3a"/><ellipse cx="225" cy="222" rx="3.7" ry="3.2" fill="#4a8a26"/><ellipse cx="66" cy="242" rx="2.9" ry="1.6" fill="#a4cc3a"/><ellipse cx="41" cy="244" rx="5.0" ry="3.1" fill="#b4d448"/><ellipse cx="127" cy="234" rx="3.6" ry="1.6" fill="#b4d448"/><ellipse cx="191" cy="260" rx="2.9" ry="2.9" fill="#b4d448"/><ellipse cx="197" cy="209" rx="3.8" ry="2.2" fill="#4a8a26"/><ellipse cx="92" cy="217" rx="5.0" ry="1.7" fill="#3e7a22"/><ellipse cx="169" cy="237" rx="4.4" ry="3.5" fill="#b4d448"/><ellipse cx="162" cy="197" rx="3.9" ry="2.4" fill="#b4d448"/><ellipse cx="133" cy="254" rx="2.2" ry="1.5" fill="#a4cc3a"/><ellipse cx="11" cy="214" rx="3.8" ry="2.3" fill="#a4cc3a"/><ellipse cx="119" cy="212" rx="3.2" ry="2.5" fill="#3e7a22"/><ellipse cx="10" cy="207" rx="3.1" ry="2.7" fill="#4a8a26"/><ellipse cx="203" cy="237" rx="4.3" ry="2.8" fill="#b4d448"/><ellipse cx="182" cy="241" rx="2.7" ry="3.3" fill="#a4cc3a"/><ellipse cx="80" cy="221" rx="3.6" ry="2.9" fill="#3e7a22"/><ellipse cx="42" cy="209" rx="4.6" ry="2.9" fill="#3e7a22"/><ellipse cx="144" cy="201" rx="2.9" ry="3.4" fill="#a4cc3a"/><ellipse cx="256" cy="261" rx="2.5" ry="2.4" fill="#2f6a20"/><ellipse cx="97" cy="234" rx="2.6" ry="1.7" fill="#3e7a22"/><ellipse cx="84" cy="213" rx="4.5" ry="1.8" fill="#b4d448"/><ellipse cx="52" cy="235" rx="2.8" ry="2.3" fill="#a4cc3a"/><ellipse cx="121" cy="225" rx="3.9" ry="2.1" fill="#4a8a26"/><ellipse cx="174" cy="237" rx="2.3" ry="3.5" fill="#4a8a26"/><ellipse cx="9" cy="249" rx="4.8" ry="2.9" fill="#3e7a22"/><ellipse cx="19" cy="234" rx="3.2" ry="2.4" fill="#a4cc3a"/><ellipse cx="62" cy="197" rx="3.6" ry="1.7" fill="#2f6a20"/><ellipse cx="49" cy="220" rx="2.0" ry="1.8" fill="#b4d448"/><ellipse cx="206" cy="250" rx="3.6" ry="1.6" fill="#4a8a26"/><ellipse cx="108" cy="254" rx="2.7" ry="2.6" fill="#b4d448"/><ellipse cx="241" cy="254" rx="2.1" ry="2.7" fill="#3e7a22"/><ellipse cx="113" cy="251" rx="5.0" ry="2.8" fill="#4a8a26"/><ellipse cx="16" cy="250" rx="3.8" ry="2.7" fill="#a4cc3a"/><ellipse cx="177" cy="241" rx="2.5" ry="1.8" fill="#2f6a20"/><ellipse cx="77" cy="237" rx="4.7" ry="1.6" fill="#3e7a22"/><ellipse cx="48" cy="202" rx="4.5" ry="2.2" fill="#2f6a20"/><ellipse cx="15" cy="198" rx="3.5" ry="2.9" fill="#a4cc3a"/><ellipse cx="41" cy="203" rx="4.8" ry="2.6" fill="#a4cc3a"/><ellipse cx="52" cy="209" rx="4.9" ry="2.3" fill="#2f6a20"/><ellipse cx="215" cy="210" rx="2.1" ry="2.2" fill="#b4d448"/><ellipse cx="165" cy="238" rx="2.1" ry="2.2" fill="#a4cc3a"/><ellipse cx="42" cy="252" rx="4.4" ry="3.3" fill="#3e7a22"/><ellipse cx="57" cy="247" rx="4.7" ry="2.6" fill="#3e7a22"/><ellipse cx="252" cy="222" rx="4.8" ry="3.4" fill="#2f6a20"/><ellipse cx="3" cy="219" rx="3.8" ry="2.7" fill="#a4cc3a"/><ellipse cx="168" cy="207" rx="4.8" ry="2.6" fill="#a4cc3a"/><ellipse cx="54" cy="262" rx="3.7" ry="3.1" fill="#2f6a20"/><ellipse cx="237" cy="212" rx="3.8" ry="2.2" fill="#2f6a20"/><ellipse cx="149" cy="262" rx="4.7" ry="3.4" fill="#3e7a22"/><ellipse cx="256" cy="245" rx="4.2" ry="1.9" fill="#b4d448"/><ellipse cx="136" cy="255" rx="3.5" ry="1.7" fill="#4a8a26"/><ellipse cx="172" cy="236" rx="3.4" ry="2.5" fill="#4a8a26"/><ellipse cx="169" cy="213" rx="3.3" ry="2.3" fill="#a4cc3a"/><ellipse cx="124" cy="199" rx="4.6" ry="1.9" fill="#2f6a20"/><ellipse cx="213" cy="169" rx="9.9" ry="2.6" fill="#3c6a50"/><ellipse cx="137" cy="155" rx="4.0" ry="2.5" fill="#4a7a52"/><ellipse cx="209" cy="176" rx="5.6" ry="1.8" fill="#2a5244"/><ellipse cx="244" cy="143" rx="11.3" ry="1.7" fill="#4a7a52"/><ellipse cx="168" cy="155" rx="9.0" ry="2.4" fill="#24483c"/><ellipse cx="314" cy="168" rx="7.0" ry="1.9" fill="#2a5244"/><ellipse cx="288" cy="174" rx="5.6" ry="2.8" fill="#24483c"/><ellipse cx="271" cy="150" rx="5.0" ry="2.6" fill="#4a7a52"/><ellipse cx="38" cy="163" rx="9.2" ry="2.3" fill="#3c6a50"/><ellipse cx="181" cy="166" rx="5.7" ry="2.5" fill="#4a7a52"/><ellipse cx="334" cy="160" rx="4.1" ry="2.8" fill="#4a7a52"/><ellipse cx="21" cy="166" rx="7.3" ry="1.7" fill="#24483c"/><ellipse cx="362" cy="150" rx="9.6" ry="2.2" fill="#4a7a52"/><ellipse cx="157" cy="143" rx="11.6" ry="1.7" fill="#2a5244"/><ellipse cx="274" cy="164" rx="7.7" ry="2.3" fill="#3c6a50"/><ellipse cx="159" cy="150" rx="10.8" ry="2.8" fill="#3c6a50"/><ellipse cx="281" cy="173" rx="10.0" ry="2.0" fill="#3c6a50"/><ellipse cx="60" cy="169" rx="6.6" ry="2.0" fill="#3c6a50"/><ellipse cx="350" cy="158" rx="5.6" ry="1.5" fill="#3c6a50"/><ellipse cx="308" cy="150" rx="4.9" ry="2.3" fill="#24483c"/><ellipse cx="228" cy="146" rx="5.0" ry="2.6" fill="#3c6a50"/><ellipse cx="196" cy="145" rx="5.9" ry="2.4" fill="#24483c"/><ellipse cx="89" cy="157" rx="10.3" ry="2.9" fill="#24483c"/><ellipse cx="145" cy="175" rx="10.5" ry="2.5" fill="#2a5244"/><ellipse cx="12" cy="159" rx="11.1" ry="2.7" fill="#2a5244"/><ellipse cx="66" cy="173" rx="4.6" ry="2.9" fill="#2a5244"/><ellipse cx="261" cy="160" rx="5.3" ry="2.0" fill="#2a5244"/><ellipse cx="238" cy="155" rx="10.4" ry="1.6" fill="#4a7a52"/><ellipse cx="212" cy="159" rx="10.6" ry="1.7" fill="#3c6a50"/><ellipse cx="113" cy="155" rx="6.2" ry="2.5" fill="#3c6a50"/><ellipse cx="18" cy="167" rx="10.6" ry="2.3" fill="#24483c"/><ellipse cx="228" cy="158" rx="8.5" ry="2.0" fill="#3c6a50"/><ellipse cx="17" cy="163" rx="8.9" ry="2.2" fill="#24483c"/><ellipse cx="154" cy="149" rx="4.3" ry="1.8" fill="#4a7a52"/><ellipse cx="5" cy="168" rx="10.8" ry="2.9" fill="#3c6a50"/><ellipse cx="267" cy="160" rx="7.0" ry="1.9" fill="#3c6a50"/><ellipse cx="251" cy="158" rx="6.6" ry="2.8" fill="#3c6a50"/><ellipse cx="104" cy="168" rx="9.6" ry="2.6" fill="#24483c"/><ellipse cx="319" cy="150" rx="12.0" ry="2.0" fill="#2a5244"/><ellipse cx="298" cy="169" rx="9.8" ry="1.5" fill="#4a7a52"/></g>
<rect y="138" width="363" height="212" fill="#fff" filter="url(#vnz)" opacity=".5"/>
<ellipse cx="250" cy="272" rx="90" ry="30" fill="#7a964e" filter="url(#pb8)"/>
<ellipse cx="335" cy="262" rx="46" ry="26" fill="#5f6e58" filter="url(#pb8)"/>
<ellipse cx="185" cy="250" rx="40" ry="20" fill="#90b62e" filter="url(#pb8)"/>
<g filter="url(#pb1)"><path d="M-2 212 C30 204 60 200 84 196 C92 190 90 170 94 152 C98 130 108 110 116 92" fill="none" stroke="#b4b4b0" stroke-width="3"/><path d="M-2 196 C14 192 26 188 40 184 M92 176 C84 160 70 150 60 130 M94 150 C110 140 124 128 132 108 M60 130 C50 120 40 110 30 96 M-2 176 L18 176 M60 130 C66 118 70 106 72 96 M30 130 C24 120 16 112 8 104" fill="none" stroke="#5e6658" stroke-width="1.300"/></g>
<g opacity=".8" filter="url(#pb1)"><ellipse cx="87.7" cy="137.9" rx="2.7" ry="1.6" fill="#6a7a6a"/><ellipse cx="133.8" cy="131.4" rx="1.4" ry="1.3" fill="#74847a"/><ellipse cx="33.5" cy="124.1" rx="1.6" ry="1.6" fill="#a4b0a8"/><ellipse cx="56.8" cy="98.7" rx="1.5" ry="1.6" fill="#46564c"/><ellipse cx="18.0" cy="129.2" rx="1.4" ry="1.8" fill="#74847a"/><ellipse cx="-1.2" cy="140.2" rx="2.6" ry="1.2" fill="#74847a"/><ellipse cx="136.5" cy="123.7" rx="2.2" ry="1.1" fill="#6a7a6a"/><ellipse cx="137.5" cy="99.8" rx="1.7" ry="1.2" fill="#46564c"/><ellipse cx="21.9" cy="96.2" rx="1.7" ry="1.6" fill="#566656"/><ellipse cx="82.4" cy="127.7" rx="1.7" ry="1.2" fill="#6a7a6a"/><ellipse cx="115.9" cy="119.7" rx="1.5" ry="1.3" fill="#8c9c90"/><ellipse cx="23.4" cy="103.9" rx="2.7" ry="1.2" fill="#566656"/><ellipse cx="56.2" cy="124.4" rx="1.8" ry="1.4" fill="#46564c"/><ellipse cx="-0.7" cy="89.3" rx="2.2" ry="1.8" fill="#74847a"/><ellipse cx="15.1" cy="103.2" rx="1.8" ry="1.2" fill="#46564c"/><ellipse cx="105.8" cy="141.8" rx="1.9" ry="1.8" fill="#566656"/><ellipse cx="28.0" cy="121.9" rx="2.7" ry="1.2" fill="#8c9c90"/><ellipse cx="131.1" cy="124.2" rx="2.3" ry="1.2" fill="#8c9c90"/><ellipse cx="113.0" cy="129.9" rx="2.3" ry="1.8" fill="#6a7a6a"/><ellipse cx="21.3" cy="89.4" rx="2.1" ry="1.3" fill="#a4b0a8"/><ellipse cx="32.2" cy="127.6" rx="1.9" ry="1.3" fill="#8c9c90"/><ellipse cx="103.4" cy="152.5" rx="1.4" ry="1.3" fill="#46564c"/><ellipse cx="63.3" cy="156.0" rx="1.9" ry="1.3" fill="#a4b0a8"/><ellipse cx="103.0" cy="119.5" rx="2.0" ry="1.7" fill="#8c9c90"/><ellipse cx="23.8" cy="151.6" rx="1.3" ry="1.1" fill="#74847a"/><ellipse cx="111.2" cy="140.2" rx="1.3" ry="1.2" fill="#6a7a6a"/><ellipse cx="78.5" cy="132.8" rx="1.6" ry="1.8" fill="#46564c"/><ellipse cx="109.4" cy="108.8" rx="1.9" ry="1.6" fill="#8c9c90"/><ellipse cx="90.7" cy="137.6" rx="1.8" ry="1.7" fill="#46564c"/><ellipse cx="123.3" cy="134.2" rx="2.7" ry="1.4" fill="#8c9c90"/><ellipse cx="74.2" cy="97.6" rx="2.7" ry="1.3" fill="#8c9c90"/><ellipse cx="97.6" cy="136.4" rx="1.9" ry="1.5" fill="#6a7a6a"/><ellipse cx="132.8" cy="122.2" rx="1.7" ry="1.4" fill="#46564c"/><ellipse cx="122.9" cy="104.9" rx="1.5" ry="1.4" fill="#566656"/><ellipse cx="87.9" cy="98.7" rx="1.5" ry="1.5" fill="#6a7a6a"/><ellipse cx="126.4" cy="93.8" rx="1.5" ry="0.9" fill="#46564c"/><ellipse cx="65.0" cy="112.6" rx="1.3" ry="1.1" fill="#a4b0a8"/><ellipse cx="101.4" cy="112.2" rx="1.8" ry="1.2" fill="#8c9c90"/><ellipse cx="57.0" cy="94.1" rx="1.8" ry="0.9" fill="#a4b0a8"/><ellipse cx="86.4" cy="92.6" rx="2.0" ry="1.8" fill="#a4b0a8"/><ellipse cx="40.2" cy="110.6" rx="1.9" ry="1.6" fill="#74847a"/><ellipse cx="90.5" cy="111.9" rx="1.5" ry="1.2" fill="#74847a"/><ellipse cx="66.7" cy="99.9" rx="2.2" ry="1.2" fill="#74847a"/><ellipse cx="79.5" cy="129.1" rx="1.7" ry="1.7" fill="#74847a"/><ellipse cx="79.3" cy="116.0" rx="2.0" ry="1.3" fill="#74847a"/><ellipse cx="100.0" cy="112.9" rx="2.2" ry="1.1" fill="#74847a"/><ellipse cx="139.3" cy="120.7" rx="1.2" ry="1.8" fill="#46564c"/><ellipse cx="1.4" cy="132.2" rx="1.6" ry="0.9" fill="#46564c"/><ellipse cx="17.6" cy="113.5" rx="2.1" ry="1.1" fill="#46564c"/><ellipse cx="36.5" cy="96.8" rx="1.7" ry="1.4" fill="#8c9c90"/><ellipse cx="66.3" cy="131.1" rx="2.6" ry="1.7" fill="#a4b0a8"/><ellipse cx="0.3" cy="94.8" rx="2.1" ry="1.2" fill="#8c9c90"/><ellipse cx="40.7" cy="123.1" rx="1.8" ry="1.5" fill="#46564c"/><ellipse cx="77.7" cy="134.0" rx="2.6" ry="1.4" fill="#566656"/><ellipse cx="80.9" cy="135.6" rx="2.2" ry="1.7" fill="#6a7a6a"/><ellipse cx="119.1" cy="119.3" rx="2.6" ry="1.1" fill="#6a7a6a"/><ellipse cx="118.4" cy="134.6" rx="2.1" ry="1.5" fill="#46564c"/><ellipse cx="66.0" cy="107.8" rx="2.0" ry="1.4" fill="#74847a"/><ellipse cx="69.7" cy="109.2" rx="1.9" ry="1.4" fill="#74847a"/><ellipse cx="5.0" cy="137.3" rx="2.5" ry="1.6" fill="#8c9c90"/><ellipse cx="93.6" cy="87.8" rx="1.9" ry="1.0" fill="#6a7a6a"/><ellipse cx="56.4" cy="120.1" rx="2.5" ry="1.1" fill="#566656"/><ellipse cx="91.0" cy="152.7" rx="2.8" ry="1.5" fill="#74847a"/><ellipse cx="61.1" cy="98.8" rx="1.9" ry="1.0" fill="#74847a"/><ellipse cx="87.6" cy="89.0" rx="2.3" ry="1.6" fill="#566656"/><ellipse cx="38.3" cy="126.0" rx="2.4" ry="1.7" fill="#566656"/><ellipse cx="17.3" cy="116.2" rx="2.3" ry="1.3" fill="#8c9c90"/><ellipse cx="48.9" cy="131.9" rx="1.4" ry="1.2" fill="#566656"/><ellipse cx="79.9" cy="133.5" rx="2.7" ry="1.4" fill="#8c9c90"/><ellipse cx="87.4" cy="104.4" rx="1.6" ry="1.6" fill="#a4b0a8"/><ellipse cx="38.8" cy="154.3" rx="1.9" ry="1.3" fill="#8c9c90"/><ellipse cx="16.9" cy="87.3" rx="1.3" ry="1.5" fill="#8c9c90"/><ellipse cx="11.1" cy="94.7" rx="1.9" ry="1.3" fill="#a4b0a8"/><ellipse cx="74.4" cy="123.9" rx="1.3" ry="1.0" fill="#46564c"/><ellipse cx="135.1" cy="133.7" rx="2.4" ry="1.0" fill="#74847a"/><ellipse cx="129.2" cy="120.4" rx="1.4" ry="1.5" fill="#74847a"/><ellipse cx="49.0" cy="102.5" rx="2.7" ry="1.5" fill="#8c9c90"/><ellipse cx="112.6" cy="112.5" rx="2.5" ry="1.5" fill="#6a7a6a"/><ellipse cx="113.8" cy="116.3" rx="2.0" ry="1.4" fill="#8c9c90"/><ellipse cx="80.5" cy="137.8" rx="1.3" ry="0.9" fill="#46564c"/><ellipse cx="24.8" cy="99.7" rx="2.6" ry="1.3" fill="#46564c"/><ellipse cx="126.1" cy="129.4" rx="1.7" ry="1.3" fill="#46564c"/><ellipse cx="25.6" cy="131.7" rx="1.8" ry="1.2" fill="#566656"/><ellipse cx="38.0" cy="97.3" rx="2.3" ry="0.9" fill="#8c9c90"/><ellipse cx="127.1" cy="110.1" rx="1.7" ry="1.0" fill="#8c9c90"/><ellipse cx="1.1" cy="118.0" rx="1.4" ry="1.5" fill="#74847a"/><ellipse cx="39.9" cy="133.2" rx="2.8" ry="0.9" fill="#6a7a6a"/><ellipse cx="100.9" cy="126.2" rx="1.3" ry="1.3" fill="#6a7a6a"/><ellipse cx="138.2" cy="111.5" rx="1.5" ry="1.2" fill="#8c9c90"/><ellipse cx="109.7" cy="98.3" rx="2.7" ry="1.5" fill="#74847a"/><ellipse cx="4.5" cy="124.4" rx="2.1" ry="1.7" fill="#a4b0a8"/><ellipse cx="101.2" cy="102.6" rx="1.3" ry="1.3" fill="#46564c"/><ellipse cx="96.3" cy="131.1" rx="1.8" ry="1.0" fill="#46564c"/><ellipse cx="34.8" cy="114.5" rx="2.2" ry="1.7" fill="#8c9c90"/><ellipse cx="134.8" cy="99.6" rx="2.0" ry="1.3" fill="#6a7a6a"/><ellipse cx="74.5" cy="91.9" rx="2.5" ry="1.0" fill="#8c9c90"/><ellipse cx="103.1" cy="129.7" rx="2.1" ry="1.3" fill="#46564c"/><ellipse cx="80.3" cy="112.4" rx="1.4" ry="0.9" fill="#6a7a6a"/><ellipse cx="106.9" cy="134.2" rx="2.1" ry="1.0" fill="#74847a"/><ellipse cx="56.0" cy="95.3" rx="1.3" ry="1.1" fill="#a4b0a8"/><ellipse cx="10.1" cy="116.0" rx="2.3" ry="1.1" fill="#a4b0a8"/><ellipse cx="68.9" cy="103.4" rx="1.5" ry="1.2" fill="#6a7a6a"/><ellipse cx="51.8" cy="92.9" rx="2.4" ry="1.2" fill="#46564c"/><ellipse cx="18.7" cy="134.1" rx="2.4" ry="1.5" fill="#566656"/><ellipse cx="16.8" cy="90.6" rx="1.4" ry="1.3" fill="#74847a"/><ellipse cx="44.5" cy="88.4" rx="2.4" ry="1.4" fill="#a4b0a8"/><ellipse cx="2.0" cy="89.5" rx="2.5" ry="1.3" fill="#74847a"/><ellipse cx="74.0" cy="94.8" rx="1.7" ry="0.9" fill="#74847a"/><ellipse cx="82.2" cy="143.9" rx="1.6" ry="1.4" fill="#566656"/><ellipse cx="88.8" cy="96.1" rx="2.5" ry="1.0" fill="#46564c"/><ellipse cx="60.5" cy="116.9" rx="2.7" ry="1.4" fill="#6a7a6a"/><ellipse cx="137.6" cy="127.7" rx="1.4" ry="1.7" fill="#566656"/><ellipse cx="96.7" cy="100.5" rx="1.3" ry="1.4" fill="#566656"/><ellipse cx="29.0" cy="105.4" rx="1.7" ry="1.4" fill="#74847a"/><ellipse cx="114.5" cy="143.0" rx="2.2" ry="1.3" fill="#566656"/><ellipse cx="3.4" cy="97.9" rx="2.4" ry="1.2" fill="#566656"/><ellipse cx="130.6" cy="141.8" rx="2.3" ry="1.7" fill="#46564c"/><ellipse cx="-0.5" cy="121.8" rx="2.2" ry="1.6" fill="#a4b0a8"/><ellipse cx="1.2" cy="133.5" rx="1.7" ry="1.2" fill="#a4b0a8"/><ellipse cx="66.6" cy="135.2" rx="1.9" ry="1.6" fill="#46564c"/><ellipse cx="6.8" cy="96.3" rx="1.8" ry="1.4" fill="#46564c"/><ellipse cx="95.8" cy="122.6" rx="1.7" ry="0.9" fill="#8c9c90"/><ellipse cx="109.4" cy="128.7" rx="1.9" ry="1.8" fill="#6a7a6a"/><ellipse cx="3.4" cy="92.2" rx="2.6" ry="1.5" fill="#8c9c90"/><ellipse cx="118.7" cy="137.7" rx="2.1" ry="1.3" fill="#a4b0a8"/><ellipse cx="11.2" cy="94.5" rx="2.8" ry="1.4" fill="#8c9c90"/><ellipse cx="54.7" cy="86.2" rx="1.8" ry="1.6" fill="#46564c"/><ellipse cx="74.1" cy="100.5" rx="2.2" ry="1.2" fill="#6a7a6a"/><ellipse cx="13.7" cy="134.2" rx="2.3" ry="1.8" fill="#a4b0a8"/><ellipse cx="33.9" cy="93.0" rx="1.7" ry="1.1" fill="#8c9c90"/><ellipse cx="89.1" cy="139.7" rx="2.2" ry="1.4" fill="#74847a"/><ellipse cx="88.2" cy="130.8" rx="2.4" ry="1.3" fill="#a4b0a8"/><ellipse cx="59.3" cy="123.0" rx="1.7" ry="1.2" fill="#74847a"/><ellipse cx="2.4" cy="94.1" rx="2.1" ry="1.4" fill="#a4b0a8"/><ellipse cx="60.5" cy="108.8" rx="2.2" ry="1.5" fill="#566656"/><ellipse cx="103.0" cy="90.3" rx="1.4" ry="1.4" fill="#46564c"/><ellipse cx="8.5" cy="99.3" rx="2.2" ry="1.7" fill="#46564c"/><ellipse cx="31.0" cy="134.8" rx="2.5" ry="0.9" fill="#46564c"/><ellipse cx="94.8" cy="93.8" rx="1.4" ry="1.5" fill="#8c9c90"/><ellipse cx="13.1" cy="139.1" rx="1.7" ry="1.6" fill="#6a7a6a"/><ellipse cx="81.6" cy="146.8" rx="1.4" ry="1.0" fill="#8c9c90"/><ellipse cx="27.7" cy="112.2" rx="2.6" ry="1.8" fill="#46564c"/><ellipse cx="108.2" cy="103.2" rx="1.9" ry="0.9" fill="#a4b0a8"/><ellipse cx="-1.5" cy="112.7" rx="2.7" ry="1.0" fill="#8c9c90"/><ellipse cx="107.4" cy="136.5" rx="1.2" ry="1.6" fill="#8c9c90"/><ellipse cx="141.9" cy="138.6" rx="2.7" ry="1.2" fill="#74847a"/><ellipse cx="39.8" cy="120.9" rx="2.4" ry="1.0" fill="#6a7a6a"/><ellipse cx="13.8" cy="114.6" rx="2.0" ry="0.9" fill="#566656"/><ellipse cx="58.6" cy="102.6" rx="2.4" ry="1.0" fill="#6a7a6a"/><ellipse cx="137.3" cy="124.7" rx="2.8" ry="1.4" fill="#46564c"/><ellipse cx="108.3" cy="111.3" rx="1.2" ry="1.4" fill="#566656"/><ellipse cx="137.9" cy="99.6" rx="1.2" ry="1.4" fill="#46564c"/><ellipse cx="135.7" cy="127.9" rx="2.0" ry="0.9" fill="#6a7a6a"/><ellipse cx="21.0" cy="140.0" rx="1.9" ry="1.4" fill="#a4b0a8"/><ellipse cx="127.9" cy="131.2" rx="2.1" ry="1.1" fill="#6a7a6a"/><ellipse cx="58.7" cy="136.6" rx="2.7" ry="1.2" fill="#46564c"/><ellipse cx="141.9" cy="138.9" rx="1.4" ry="1.6" fill="#8c9c90"/><ellipse cx="58.8" cy="154.0" rx="1.8" ry="1.1" fill="#74847a"/><ellipse cx="18.1" cy="111.4" rx="2.3" ry="1.0" fill="#566656"/><ellipse cx="22.4" cy="118.0" rx="2.3" ry="0.9" fill="#566656"/><ellipse cx="57.0" cy="96.5" rx="1.2" ry="1.6" fill="#6a7a6a"/><ellipse cx="136.4" cy="127.9" rx="1.9" ry="1.0" fill="#74847a"/><ellipse cx="50.5" cy="129.3" rx="1.5" ry="1.3" fill="#566656"/><ellipse cx="36.4" cy="138.8" rx="1.7" ry="1.1" fill="#8c9c90"/><ellipse cx="40.3" cy="148.7" rx="1.3" ry="1.0" fill="#a4b0a8"/><ellipse cx="90.7" cy="112.2" rx="2.7" ry="1.4" fill="#8c9c90"/><ellipse cx="61.8" cy="147.0" rx="1.6" ry="1.4" fill="#74847a"/><ellipse cx="103.3" cy="95.4" rx="2.3" ry="1.0" fill="#46564c"/><ellipse cx="0.2" cy="100.8" rx="2.0" ry="1.4" fill="#74847a"/><ellipse cx="3.5" cy="113.0" rx="2.4" ry="1.4" fill="#8c9c90"/><ellipse cx="61.3" cy="93.2" rx="2.7" ry="1.2" fill="#566656"/><ellipse cx="74.3" cy="135.9" rx="2.7" ry="1.8" fill="#a4b0a8"/><ellipse cx="41.5" cy="97.7" rx="1.3" ry="1.3" fill="#6a7a6a"/><ellipse cx="104.0" cy="123.0" rx="1.4" ry="1.4" fill="#46564c"/><ellipse cx="115.7" cy="112.1" rx="1.4" ry="1.2" fill="#46564c"/><ellipse cx="69.2" cy="125.6" rx="2.1" ry="0.9" fill="#74847a"/><ellipse cx="104.9" cy="94.2" rx="1.8" ry="1.2" fill="#74847a"/><ellipse cx="115.4" cy="119.9" rx="2.4" ry="1.1" fill="#74847a"/><ellipse cx="117.4" cy="129.8" rx="1.5" ry="1.6" fill="#46564c"/><ellipse cx="99.1" cy="127.4" rx="2.7" ry="1.7" fill="#46564c"/><ellipse cx="83.5" cy="125.6" rx="1.8" ry="1.0" fill="#6a7a6a"/><ellipse cx="63.6" cy="134.6" rx="2.0" ry="1.7" fill="#a4b0a8"/><ellipse cx="3.7" cy="127.2" rx="1.9" ry="1.4" fill="#566656"/><ellipse cx="61.8" cy="126.4" rx="2.7" ry="1.0" fill="#a4b0a8"/><ellipse cx="7.2" cy="133.9" rx="1.3" ry="1.5" fill="#566656"/><ellipse cx="41.8" cy="122.7" rx="2.4" ry="1.0" fill="#a4b0a8"/><ellipse cx="106.6" cy="104.1" rx="1.7" ry="1.7" fill="#8c9c90"/><ellipse cx="44.5" cy="132.0" rx="1.9" ry="1.0" fill="#46564c"/><ellipse cx="29.2" cy="104.4" rx="1.5" ry="1.0" fill="#a4b0a8"/><ellipse cx="48.8" cy="91.5" rx="1.9" ry="1.4" fill="#46564c"/><ellipse cx="54.8" cy="99.8" rx="1.5" ry="1.4" fill="#46564c"/><ellipse cx="132.7" cy="110.1" rx="1.4" ry="1.1" fill="#566656"/><ellipse cx="69.1" cy="123.5" rx="2.1" ry="1.5" fill="#74847a"/><ellipse cx="58.4" cy="140.9" rx="2.2" ry="1.1" fill="#8c9c90"/><ellipse cx="68.1" cy="135.6" rx="2.7" ry="1.0" fill="#566656"/><ellipse cx="108.9" cy="109.5" rx="2.6" ry="1.2" fill="#566656"/><ellipse cx="106.8" cy="98.5" rx="1.8" ry="1.5" fill="#a4b0a8"/><ellipse cx="102.3" cy="104.2" rx="2.6" ry="1.7" fill="#46564c"/><ellipse cx="42.9" cy="106.5" rx="1.9" ry="1.7" fill="#8c9c90"/><ellipse cx="7.0" cy="107.1" rx="1.3" ry="1.0" fill="#74847a"/><ellipse cx="64.5" cy="91.0" rx="1.2" ry="1.4" fill="#46564c"/><ellipse cx="39.8" cy="93.5" rx="1.7" ry="1.2" fill="#a4b0a8"/><ellipse cx="8.9" cy="112.6" rx="2.4" ry="1.0" fill="#74847a"/><ellipse cx="75.4" cy="91.9" rx="2.1" ry="1.3" fill="#6a7a6a"/><ellipse cx="37.2" cy="124.6" rx="1.3" ry="1.7" fill="#46564c"/><ellipse cx="139.3" cy="95.4" rx="2.7" ry="1.2" fill="#74847a"/><ellipse cx="114.8" cy="123.0" rx="1.7" ry="1.7" fill="#74847a"/><ellipse cx="90.3" cy="107.4" rx="2.7" ry="1.4" fill="#a4b0a8"/><ellipse cx="70.0" cy="105.9" rx="2.2" ry="1.3" fill="#6a7a6a"/><ellipse cx="56.2" cy="135.7" rx="1.4" ry="1.1" fill="#566656"/><ellipse cx="98.1" cy="137.0" rx="1.9" ry="1.1" fill="#566656"/><ellipse cx="34.0" cy="131.0" rx="1.9" ry="1.5" fill="#6a7a6a"/><ellipse cx="121.5" cy="97.4" rx="1.7" ry="1.7" fill="#566656"/><ellipse cx="88.4" cy="134.8" rx="2.4" ry="1.0" fill="#a4b0a8"/><ellipse cx="108.0" cy="109.6" rx="2.0" ry="1.7" fill="#a4b0a8"/><ellipse cx="124.0" cy="122.5" rx="1.7" ry="1.2" fill="#a4b0a8"/><ellipse cx="92.3" cy="139.0" rx="1.3" ry="1.3" fill="#6a7a6a"/><ellipse cx="45.2" cy="134.2" rx="1.5" ry="1.3" fill="#566656"/><ellipse cx="-1.8" cy="141.4" rx="1.3" ry="1.4" fill="#8c9c90"/><ellipse cx="66.9" cy="94.4" rx="1.5" ry="1.1" fill="#74847a"/><ellipse cx="71.1" cy="132.6" rx="2.2" ry="1.2" fill="#46564c"/><ellipse cx="90.8" cy="102.0" rx="2.7" ry="1.1" fill="#8c9c90"/><ellipse cx="32.0" cy="90.7" rx="1.8" ry="1.4" fill="#a4b0a8"/><ellipse cx="30.1" cy="92.6" rx="2.2" ry="1.6" fill="#a4b0a8"/><ellipse cx="62.0" cy="134.0" rx="2.6" ry="1.4" fill="#566656"/><ellipse cx="-1.6" cy="115.8" rx="1.2" ry="1.6" fill="#46564c"/><ellipse cx="13.3" cy="118.1" rx="2.6" ry="1.3" fill="#46564c"/><ellipse cx="39.6" cy="91.2" rx="2.4" ry="1.5" fill="#6a7a6a"/><ellipse cx="118.2" cy="129.0" rx="2.7" ry="1.7" fill="#6a7a6a"/><ellipse cx="27.4" cy="131.6" rx="2.8" ry="1.1" fill="#46564c"/><ellipse cx="7.5" cy="109.8" rx="2.1" ry="1.7" fill="#566656"/><ellipse cx="22.8" cy="113.7" rx="1.9" ry="1.2" fill="#566656"/><ellipse cx="102.9" cy="113.2" rx="2.4" ry="1.0" fill="#74847a"/><ellipse cx="53.3" cy="99.2" rx="1.8" ry="1.3" fill="#74847a"/><ellipse cx="56.9" cy="87.8" rx="2.0" ry="1.1" fill="#46564c"/><ellipse cx="11.3" cy="102.3" rx="2.5" ry="1.3" fill="#46564c"/><ellipse cx="93.0" cy="132.1" rx="2.4" ry="1.6" fill="#6a7a6a"/><ellipse cx="27.2" cy="126.7" rx="2.3" ry="1.6" fill="#6a7a6a"/><ellipse cx="25.7" cy="123.3" rx="1.8" ry="1.0" fill="#74847a"/><ellipse cx="85.2" cy="111.4" rx="2.2" ry="1.1" fill="#74847a"/><ellipse cx="76.4" cy="135.4" rx="2.4" ry="1.5" fill="#566656"/><ellipse cx="65.2" cy="144.0" rx="2.7" ry="1.0" fill="#6a7a6a"/><ellipse cx="19.7" cy="86.5" rx="2.4" ry="1.2" fill="#566656"/><ellipse cx="125.5" cy="104.5" rx="1.9" ry="1.7" fill="#a4b0a8"/><ellipse cx="85.6" cy="123.6" rx="1.8" ry="1.4" fill="#74847a"/><ellipse cx="13.7" cy="122.0" rx="2.0" ry="1.0" fill="#a4b0a8"/><ellipse cx="92.3" cy="108.0" rx="2.4" ry="1.3" fill="#566656"/><ellipse cx="44.2" cy="146.0" rx="2.2" ry="1.6" fill="#8c9c90"/><ellipse cx="131.5" cy="148.3" rx="2.2" ry="0.9" fill="#6a7a6a"/><ellipse cx="71.9" cy="118.9" rx="1.7" ry="1.3" fill="#46564c"/><ellipse cx="86.7" cy="126.1" rx="2.0" ry="1.7" fill="#6a7a6a"/><ellipse cx="117.7" cy="127.3" rx="2.7" ry="1.2" fill="#566656"/><ellipse cx="11.8" cy="110.2" rx="1.3" ry="1.2" fill="#46564c"/><ellipse cx="28.1" cy="133.7" rx="1.7" ry="1.6" fill="#46564c"/><ellipse cx="69.5" cy="88.5" rx="2.3" ry="1.7" fill="#46564c"/><ellipse cx="71.9" cy="92.5" rx="2.1" ry="1.3" fill="#a4b0a8"/><ellipse cx="92.6" cy="129.1" rx="2.7" ry="1.0" fill="#46564c"/><ellipse cx="7.1" cy="108.6" rx="1.7" ry="1.2" fill="#566656"/><ellipse cx="84.9" cy="127.3" rx="1.2" ry="1.0" fill="#74847a"/><ellipse cx="42.0" cy="125.7" rx="2.4" ry="1.7" fill="#a4b0a8"/><ellipse cx="7.7" cy="91.7" rx="1.7" ry="1.3" fill="#6a7a6a"/><ellipse cx="31.4" cy="116.3" rx="1.5" ry="1.2" fill="#8c9c90"/><ellipse cx="97.9" cy="121.7" rx="2.5" ry="1.5" fill="#46564c"/><ellipse cx="120.0" cy="98.4" rx="2.8" ry="1.7" fill="#46564c"/><ellipse cx="10.7" cy="116.6" rx="1.8" ry="1.6" fill="#8c9c90"/><ellipse cx="105.6" cy="136.9" rx="1.8" ry="1.1" fill="#46564c"/><ellipse cx="139.7" cy="86.7" rx="1.6" ry="1.5" fill="#8c9c90"/><ellipse cx="61.0" cy="128.9" rx="1.4" ry="1.2" fill="#46564c"/><ellipse cx="25.9" cy="99.5" rx="1.6" ry="1.3" fill="#46564c"/><ellipse cx="81.7" cy="121.3" rx="2.4" ry="1.2" fill="#566656"/><ellipse cx="46.8" cy="128.8" rx="2.6" ry="0.9" fill="#74847a"/><ellipse cx="26.2" cy="88.3" rx="2.0" ry="0.9" fill="#46564c"/><ellipse cx="30.3" cy="155.2" rx="1.8" ry="0.9" fill="#74847a"/><ellipse cx="98.6" cy="139.1" rx="2.8" ry="1.2" fill="#566656"/><ellipse cx="33.7" cy="90.6" rx="2.4" ry="1.7" fill="#566656"/><ellipse cx="46.6" cy="114.8" rx="1.7" ry="1.3" fill="#8c9c90"/><ellipse cx="32.7" cy="153.4" rx="2.0" ry="1.1" fill="#8c9c90"/><ellipse cx="6.0" cy="138.3" rx="1.5" ry="1.5" fill="#a4b0a8"/><ellipse cx="12.0" cy="119.9" rx="1.6" ry="1.3" fill="#6a7a6a"/><ellipse cx="15.3" cy="91.6" rx="1.7" ry="1.1" fill="#74847a"/><ellipse cx="86.5" cy="86.5" rx="2.4" ry="1.4" fill="#6a7a6a"/><ellipse cx="44.4" cy="113.5" rx="1.6" ry="1.1" fill="#8c9c90"/><ellipse cx="119.1" cy="126.9" rx="1.4" ry="0.9" fill="#46564c"/><ellipse cx="82.2" cy="102.0" rx="2.1" ry="1.0" fill="#566656"/><ellipse cx="32.1" cy="112.8" rx="2.1" ry="1.2" fill="#6a7a6a"/><ellipse cx="103.2" cy="100.5" rx="1.4" ry="1.4" fill="#74847a"/><ellipse cx="99.5" cy="137.3" rx="1.6" ry="1.3" fill="#46564c"/><ellipse cx="42.1" cy="103.8" rx="1.5" ry="1.3" fill="#a4b0a8"/><ellipse cx="76.5" cy="92.7" rx="2.2" ry="1.4" fill="#6a7a6a"/><ellipse cx="-0.0" cy="97.6" rx="2.2" ry="1.2" fill="#74847a"/><ellipse cx="38.2" cy="118.9" rx="2.2" ry="1.2" fill="#a4b0a8"/><ellipse cx="25.9" cy="124.4" rx="1.5" ry="1.0" fill="#6a7a6a"/><ellipse cx="40.4" cy="88.2" rx="2.3" ry="1.1" fill="#8c9c90"/><ellipse cx="117.1" cy="104.9" rx="1.8" ry="1.5" fill="#6a7a6a"/><ellipse cx="88.0" cy="87.5" rx="2.7" ry="1.6" fill="#74847a"/><ellipse cx="126.4" cy="155.0" rx="2.4" ry="1.8" fill="#566656"/><ellipse cx="86.2" cy="89.1" rx="2.4" ry="1.1" fill="#a4b0a8"/><ellipse cx="70.4" cy="98.3" rx="2.2" ry="1.5" fill="#46564c"/><ellipse cx="94.5" cy="150.8" rx="2.6" ry="1.7" fill="#6a7a6a"/><ellipse cx="79.5" cy="141.0" rx="2.4" ry="1.1" fill="#8c9c90"/><ellipse cx="68.9" cy="122.7" rx="1.5" ry="1.6" fill="#6a7a6a"/><ellipse cx="67.3" cy="120.3" rx="2.1" ry="1.8" fill="#6a7a6a"/><ellipse cx="44.6" cy="136.0" rx="1.3" ry="1.6" fill="#74847a"/><ellipse cx="91.9" cy="123.8" rx="2.6" ry="1.0" fill="#566656"/><ellipse cx="68.1" cy="129.1" rx="1.4" ry="1.0" fill="#6a7a6a"/><ellipse cx="4.7" cy="139.3" rx="1.9" ry="1.1" fill="#46564c"/><ellipse cx="15.2" cy="87.4" rx="2.1" ry="1.5" fill="#46564c"/><ellipse cx="89.8" cy="146.6" rx="2.0" ry="1.3" fill="#74847a"/><ellipse cx="92.7" cy="125.3" rx="2.4" ry="1.4" fill="#566656"/><ellipse cx="77.0" cy="103.7" rx="1.6" ry="1.5" fill="#8c9c90"/><ellipse cx="61.9" cy="90.7" rx="2.6" ry="1.3" fill="#46564c"/><ellipse cx="45.3" cy="104.1" rx="1.9" ry="1.2" fill="#8c9c90"/><ellipse cx="111.9" cy="102.6" rx="2.4" ry="1.7" fill="#8c9c90"/><ellipse cx="49.0" cy="103.5" rx="1.4" ry="1.4" fill="#8c9c90"/><ellipse cx="34.4" cy="123.2" rx="1.6" ry="1.0" fill="#6a7a6a"/><ellipse cx="108.3" cy="124.0" rx="1.7" ry="1.8" fill="#74847a"/><ellipse cx="-1.6" cy="104.2" rx="2.3" ry="1.6" fill="#a4b0a8"/><ellipse cx="65.1" cy="149.6" rx="1.8" ry="1.8" fill="#74847a"/><ellipse cx="122.7" cy="105.5" rx="1.9" ry="1.4" fill="#46564c"/><ellipse cx="63.3" cy="107.7" rx="1.4" ry="1.4" fill="#46564c"/><ellipse cx="82.0" cy="130.9" rx="2.2" ry="1.4" fill="#a4b0a8"/><ellipse cx="95.0" cy="133.1" rx="2.0" ry="1.1" fill="#a4b0a8"/><ellipse cx="100.3" cy="87.7" rx="1.8" ry="0.9" fill="#a4b0a8"/><ellipse cx="95.1" cy="109.6" rx="2.6" ry="1.7" fill="#74847a"/><ellipse cx="35.3" cy="101.9" rx="2.0" ry="1.0" fill="#46564c"/><ellipse cx="40.0" cy="135.9" rx="2.3" ry="1.3" fill="#566656"/><ellipse cx="5.7" cy="98.1" rx="1.9" ry="1.7" fill="#74847a"/><ellipse cx="83.5" cy="100.6" rx="2.3" ry="1.6" fill="#74847a"/><ellipse cx="59.8" cy="101.6" rx="2.0" ry="1.6" fill="#6a7a6a"/><ellipse cx="17.3" cy="152.3" rx="1.4" ry="1.3" fill="#46564c"/><ellipse cx="8.4" cy="118.3" rx="2.7" ry="1.7" fill="#6a7a6a"/><ellipse cx="132.6" cy="136.9" rx="2.0" ry="1.5" fill="#566656"/><ellipse cx="51.4" cy="107.5" rx="1.3" ry="1.2" fill="#a4b0a8"/><ellipse cx="47.7" cy="98.0" rx="1.8" ry="1.3" fill="#74847a"/><ellipse cx="85.0" cy="115.5" rx="2.2" ry="1.6" fill="#74847a"/><ellipse cx="132.3" cy="88.2" rx="2.4" ry="1.7" fill="#566656"/><ellipse cx="59.6" cy="122.8" rx="2.3" ry="1.0" fill="#46564c"/><ellipse cx="141.7" cy="111.9" rx="1.4" ry="0.9" fill="#46564c"/><ellipse cx="57.4" cy="105.5" rx="2.0" ry="1.1" fill="#8c9c90"/><ellipse cx="64.1" cy="101.5" rx="2.0" ry="1.8" fill="#6a7a6a"/><ellipse cx="10.9" cy="96.4" rx="2.0" ry="1.3" fill="#8c9c90"/><ellipse cx="96.0" cy="119.1" rx="1.9" ry="1.6" fill="#46564c"/><ellipse cx="132.0" cy="129.5" rx="1.2" ry="1.6" fill="#a4b0a8"/><ellipse cx="84.1" cy="93.4" rx="2.0" ry="1.5" fill="#74847a"/><ellipse cx="80.7" cy="135.0" rx="2.6" ry="1.7" fill="#566656"/><ellipse cx="78.6" cy="152.0" rx="2.3" ry="1.1" fill="#566656"/><ellipse cx="140.4" cy="98.9" rx="2.8" ry="1.2" fill="#a4b0a8"/><ellipse cx="98.6" cy="100.3" rx="2.3" ry="1.0" fill="#46564c"/><ellipse cx="117.8" cy="106.1" rx="1.8" ry="1.3" fill="#a4b0a8"/><ellipse cx="101.4" cy="108.0" rx="2.8" ry="1.5" fill="#566656"/><ellipse cx="65.9" cy="125.3" rx="1.6" ry="1.6" fill="#6a7a6a"/><ellipse cx="56.7" cy="131.3" rx="2.6" ry="1.8" fill="#566656"/><ellipse cx="69.5" cy="115.5" rx="2.2" ry="1.2" fill="#46564c"/><ellipse cx="92.6" cy="104.0" rx="2.5" ry="1.5" fill="#a4b0a8"/><ellipse cx="26.1" cy="152.3" rx="1.4" ry="1.6" fill="#46564c"/><ellipse cx="48.3" cy="95.0" rx="2.4" ry="1.6" fill="#a4b0a8"/><ellipse cx="53.7" cy="95.2" rx="1.5" ry="1.5" fill="#566656"/><ellipse cx="98.3" cy="105.1" rx="1.4" ry="1.4" fill="#566656"/><ellipse cx="28.2" cy="128.3" rx="1.6" ry="1.6" fill="#6a7a6a"/><ellipse cx="60.7" cy="126.6" rx="1.4" ry="1.0" fill="#8c9c90"/><ellipse cx="67.8" cy="111.7" rx="2.2" ry="1.3" fill="#6a7a6a"/><ellipse cx="91.7" cy="130.0" rx="2.2" ry="1.0" fill="#46564c"/><ellipse cx="2.8" cy="138.7" rx="1.5" ry="1.2" fill="#46564c"/><ellipse cx="96.9" cy="131.9" rx="1.9" ry="1.1" fill="#46564c"/><ellipse cx="115.9" cy="119.3" rx="2.7" ry="1.0" fill="#6a7a6a"/><ellipse cx="102.0" cy="152.0" rx="2.6" ry="1.1" fill="#6a7a6a"/><ellipse cx="114.3" cy="123.3" rx="1.7" ry="1.5" fill="#74847a"/></g>
<path d="M-2 296 L40 316 L110 322 L150 305 L200 294 L290 290 L365 298 V486 H-2Z" fill="#5a4640"/>
<path d="M-2 296 L40 316 L110 322 L150 305 L200 294 L290 290 L365 298 V486 H-2Z" fill="#fff" filter="url(#gnd)"/>
<path d="M-2 296 L40 316 L110 322 L150 305 L200 294 L290 290 L365 298 V486 H-2Z" fill="#fff" filter="url(#gnz)" opacity=".75"/>
<ellipse cx="200" cy="398" rx="46" ry="15" fill="#2e201e" filter="url(#pb8)" opacity=".85"/>
<ellipse cx="40" cy="345" rx="56" ry="18" fill="#382a28" filter="url(#pb8)" opacity=".75"/>
<ellipse cx="330" cy="370" rx="40" ry="30" fill="#4a3a36" filter="url(#pb8)" opacity=".6"/>
<ellipse cx="335" cy="450" rx="36" ry="36" fill="#2e2832" filter="url(#pb8)" opacity=".65"/>
<g filter="url(#pb2)">
<path d="M-4 232 C0.0 219.3 9.3 225.7 20 224 C30.7 222.3 48.3 221.3 60 222 C71.7 222.7 80.0 227.7 90 228 C100.0 228.3 110.7 222.0 120 224 C129.3 226.0 140.7 232.7 146 240 C151.3 247.3 151.3 258.7 152 268 C152.7 277.3 153.3 287.0 150 296 C146.7 305.0 140.3 315.7 132 322 C123.7 328.3 110.3 331.7 100 334 C89.7 336.3 81.7 336.7 70 336 C58.3 335.3 40.3 333.7 30 330 C19.7 326.3 13.7 319.0 8 314 C2.3 309.0 -2.0 313.7 -4 300 C-6.0 286.3 -8.0 244.7 -4 232Z" fill="#264a2c" opacity="1"/>
<ellipse cx="60" cy="262" rx="52" ry="24" fill="#33603a"/><ellipse cx="96" cy="324" rx="18" ry="10" fill="#5c9c28"/><ellipse cx="40" cy="314" rx="26" ry="12" fill="#34642a"/><ellipse cx="112" cy="250" rx="26" ry="16" fill="#467c36"/><ellipse cx="30" cy="245" rx="26" ry="14" fill="#3e7238"/></g>
<g opacity=".7">
<path d="M-4 232 C0.0 219.3 9.3 225.7 20 224 C30.7 222.3 48.3 221.3 60 222 C71.7 222.7 80.0 227.7 90 228 C100.0 228.3 110.7 222.0 120 224 C129.3 226.0 140.7 232.7 146 240 C151.3 247.3 151.3 258.7 152 268 C152.7 277.3 153.3 287.0 150 296 C146.7 305.0 140.3 315.7 132 322 C123.7 328.3 110.3 331.7 100 334 C89.7 336.3 81.7 336.7 70 336 C58.3 335.3 40.3 333.7 30 330 C19.7 326.3 13.7 319.0 8 314 C2.3 309.0 -2.0 313.7 -4 300 C-6.0 286.3 -8.0 244.7 -4 232Z" fill="#fff" filter="url(#bnz)" opacity="1"/>
</g>
<g filter="url(#pb2)"><ellipse cx="220" cy="292" rx="20" ry="14" fill="#78a63a"/><ellipse cx="292" cy="274" rx="36" ry="30" fill="#628f22"/><ellipse cx="288" cy="262" rx="22" ry="18" fill="#84ac2e"/><ellipse cx="342" cy="308" rx="24" ry="36" fill="#7a966c"/><ellipse cx="346" cy="322" rx="20" ry="20" fill="#688858"/></g>
<path d="M186 304 L240 296 L300 298 L336 312 L300 318 L240 310Z" fill="#8a9090" filter="url(#pb1)" opacity="1"/>
<g filter="url(#pb1)">
<path d="M182 308 C187.2 300.0 201.7 303.0 215 302 C228.3 301.0 250.5 299.7 262 302 C273.5 304.3 282.3 308.0 284 316 C285.7 324.0 271.0 338.0 272 350 C273.0 362.0 291.7 379.7 290 388 C288.3 396.3 271.0 398.3 262 400 C253.0 401.7 245.0 401.3 236 398 C227.0 394.7 216.7 388.0 208 380 C199.3 372.0 188.3 362.0 184 350 C179.7 338.0 176.8 316.0 182 308Z" fill="#7e8484" opacity="1"/>
<path d="M190 312 C193.3 307.3 227.0 305.3 240 306 C253.0 306.7 264.3 311.0 268 316 C271.7 321.0 270.0 333.0 262 336 C254.0 339.0 232.0 338.0 220 334 C208.0 330.0 186.7 316.7 190 312Z" fill="#a0a6a6" opacity="1"/>
<path d="M196 340 C203.7 336.0 239.0 332.0 250 334 C261.0 336.0 263.7 347.3 262 352 C260.3 356.7 249.7 361.0 240 362 C230.3 363.0 211.3 361.7 204 358 C196.7 354.3 188.3 344.0 196 340Z" fill="#7a9636" opacity="0.85"/>
<path d="M220 366 C225.7 361.3 252.3 357.0 262 360 C271.7 363.0 280.0 378.3 278 384 C276.0 389.7 258.3 393.3 250 394 C241.7 394.7 233.0 392.7 228 388 C223.0 383.3 214.3 370.7 220 366Z" fill="#b0b6b6" opacity="1"/>
<path d="M236 384 C239.0 381.0 256.7 376.7 262 378 C267.3 379.3 271.0 389.0 268 392 C265.0 395.0 249.3 397.3 244 396 C238.7 394.7 233.0 387.0 236 384Z" fill="#2e2e30" opacity="0.75"/>
<path d="M272 350 C272.7 354.7 285.7 380.0 290 388 C294.3 396.0 298.7 402.7 298 398 C297.3 393.3 290.3 368.0 286 360 C281.7 352.0 271.3 345.3 272 350Z" fill="#26301f" opacity="1"/>
</g>
<g opacity=".5">
<path d="M182 308 C187.2 300.0 201.7 303.0 215 302 C228.3 301.0 250.5 299.7 262 302 C273.5 304.3 282.3 308.0 284 316 C285.7 324.0 271.0 338.0 272 350 C273.0 362.0 291.7 379.7 290 388 C288.3 396.3 271.0 398.3 262 400 C253.0 401.7 245.0 401.3 236 398 C227.0 394.7 216.7 388.0 208 380 C199.3 372.0 188.3 362.0 184 350 C179.7 338.0 176.8 316.0 182 308Z" fill="#fff" filter="url(#gnd)" opacity="1"/>
</g>
<g filter="url(#pb1)">
<path d="M214 442 C217.3 432.3 236.3 431.0 250 430 C263.7 429.0 287.3 429.3 296 436 C304.7 442.7 304.7 461.3 302 470 C299.3 478.7 292.0 485.0 280 488 C268.0 491.0 241.0 495.7 230 488 C219.0 480.3 210.7 451.7 214 442Z" fill="#868888" opacity="1"/>
<path d="M240 444 C244.3 439.0 262.7 437.0 270 440 C277.3 443.0 285.3 455.7 284 462 C282.7 468.3 268.7 476.7 262 478 C255.3 479.3 247.7 475.7 244 470 C240.3 464.3 235.7 449.0 240 444Z" fill="#b4b6b6" opacity="1"/>
<ellipse cx="172" cy="431" rx="3.2" ry="2.3" fill="#9a968e" transform="rotate(-7 172 431)"/>
<ellipse cx="167" cy="463" rx="4.0" ry="2.8" fill="#b0aca4" transform="rotate(-21 167 463)"/>
<ellipse cx="355" cy="387" rx="5.2" ry="1.6" fill="#d0c8b4" transform="rotate(22 355 387)"/>
<ellipse cx="72" cy="409" rx="3.2" ry="2.3" fill="#e0dcd4" transform="rotate(23 72 409)"/>
<ellipse cx="32" cy="472" rx="5.2" ry="2.5" fill="#e0dcd4" transform="rotate(-25 32 472)"/>
<ellipse cx="359" cy="395" rx="2.4" ry="2.3" fill="#a8a49c" transform="rotate(-22 359 395)"/>
<ellipse cx="196" cy="466" rx="2.6" ry="2.9" fill="#cfc4a8" transform="rotate(-27 196 466)"/>
<ellipse cx="202" cy="408" rx="3.4" ry="2.3" fill="#c4c0b8" transform="rotate(8 202 408)"/>
<ellipse cx="196" cy="429" rx="5.4" ry="3.5" fill="#c4c0b8" transform="rotate(12 196 429)"/>
<ellipse cx="95" cy="475" rx="4.4" ry="2.8" fill="#e0dcd4" transform="rotate(-23 95 475)"/>
<ellipse cx="278" cy="358" rx="4.9" ry="2.4" fill="#a8a49c" transform="rotate(3 278 358)"/>
<ellipse cx="9" cy="434" rx="3.4" ry="3.0" fill="#c4c0b8" transform="rotate(-24 9 434)"/>
<ellipse cx="273" cy="364" rx="4.4" ry="1.6" fill="#c4c0b8" transform="rotate(-13 273 364)"/>
<ellipse cx="181" cy="423" rx="2.2" ry="2.4" fill="#9a968e" transform="rotate(-17 181 423)"/>
<ellipse cx="253" cy="462" rx="5.3" ry="1.8" fill="#b0aca4" transform="rotate(29 253 462)"/>
<ellipse cx="199" cy="358" rx="4.6" ry="3.3" fill="#e0dcd4" transform="rotate(-30 199 358)"/>
<ellipse cx="344" cy="471" rx="3.2" ry="2.0" fill="#e0dcd4" transform="rotate(-30 344 471)"/>
<ellipse cx="182" cy="368" rx="5.4" ry="3.5" fill="#c4c0b8" transform="rotate(2 182 368)"/>
<ellipse cx="56" cy="473" rx="4.3" ry="2.1" fill="#e0dcd4" transform="rotate(-23 56 473)"/>
<ellipse cx="83" cy="411" rx="3.7" ry="2.2" fill="#a8a49c" transform="rotate(13 83 411)"/>
<ellipse cx="344" cy="468" rx="3.6" ry="2.7" fill="#b0aca4" transform="rotate(-28 344 468)"/>
<ellipse cx="101" cy="475" rx="4.2" ry="2.4" fill="#cfc4a8" transform="rotate(20 101 475)"/>
<ellipse cx="78" cy="374" rx="2.1" ry="1.5" fill="#d0c8b4" transform="rotate(-29 78 374)"/>
<ellipse cx="48" cy="467" rx="2.5" ry="1.9" fill="#a8a49c" transform="rotate(0 48 467)"/>
<ellipse cx="356" cy="416" rx="4.5" ry="3.4" fill="#cfc4a8" transform="rotate(-14 356 416)"/>
<ellipse cx="276" cy="394" rx="2.3" ry="2.3" fill="#cfc4a8" transform="rotate(-18 276 394)"/>
<ellipse cx="211" cy="384" rx="4.2" ry="2.3" fill="#d0c8b4" transform="rotate(-20 211 384)"/>
<ellipse cx="6" cy="439" rx="4.8" ry="3.3" fill="#c4c0b8" transform="rotate(28 6 439)"/>
<ellipse cx="337" cy="452" rx="3.2" ry="2.1" fill="#9a968e" transform="rotate(29 337 452)"/>
<ellipse cx="288" cy="436" rx="4.2" ry="1.7" fill="#a8a49c" transform="rotate(4 288 436)"/>
<ellipse cx="217" cy="435" rx="2.9" ry="2.3" fill="#cfc4a8" transform="rotate(-10 217 435)"/>
<ellipse cx="30" cy="381" rx="2.3" ry="2.1" fill="#9a968e" transform="rotate(14 30 381)"/>
<ellipse cx="65" cy="434" rx="5.3" ry="2.2" fill="#9a968e" transform="rotate(-29 65 434)"/>
<ellipse cx="76" cy="426" rx="2.6" ry="2.8" fill="#a8a49c" transform="rotate(-9 76 426)"/>
<ellipse cx="166" cy="466" rx="5.3" ry="1.5" fill="#c4c0b8" transform="rotate(-7 166 466)"/>
<ellipse cx="133" cy="461" rx="3.5" ry="1.9" fill="#9a968e" transform="rotate(28 133 461)"/>
<ellipse cx="53" cy="469" rx="2.6" ry="2.4" fill="#d0c8b4" transform="rotate(8 53 469)"/>
<ellipse cx="182" cy="439" rx="3.6" ry="3.2" fill="#a8a49c" transform="rotate(23 182 439)"/>
<ellipse cx="280" cy="393" rx="4.7" ry="2.3" fill="#9a968e" transform="rotate(13 280 393)"/>
<ellipse cx="39" cy="418" rx="3.2" ry="3.0" fill="#d0c8b4" transform="rotate(-10 39 418)"/>
<ellipse cx="281" cy="468" rx="3.1" ry="1.8" fill="#9a968e" transform="rotate(-16 281 468)"/>
<ellipse cx="291" cy="351" rx="2.2" ry="3.1" fill="#a8a49c" transform="rotate(-12 291 351)"/>
<ellipse cx="103" cy="455" rx="5.1" ry="2.1" fill="#e0dcd4" transform="rotate(-22 103 455)"/>
<ellipse cx="239" cy="453" rx="3.4" ry="2.7" fill="#a8a49c" transform="rotate(-14 239 453)"/>
<ellipse cx="123" cy="448" rx="3.3" ry="2.3" fill="#a8a49c" transform="rotate(21 123 448)"/>
<ellipse cx="66" cy="451" rx="2.9" ry="3.4" fill="#e0dcd4" transform="rotate(3 66 451)"/>
<ellipse cx="322" cy="464" rx="5.1" ry="3.1" fill="#9a968e" transform="rotate(-8 322 464)"/>
<ellipse cx="356" cy="471" rx="2.5" ry="3.2" fill="#e0dcd4" transform="rotate(23 356 471)"/>
<ellipse cx="317" cy="445" rx="2.1" ry="2.1" fill="#e0dcd4" transform="rotate(-30 317 445)"/>
<ellipse cx="294" cy="360" rx="4.5" ry="2.1" fill="#b0aca4" transform="rotate(-18 294 360)"/>
<ellipse cx="356" cy="449" rx="5.0" ry="2.7" fill="#cfc4a8" transform="rotate(-24 356 449)"/>
<ellipse cx="73" cy="345" rx="4.3" ry="3.1" fill="#c4c0b8" transform="rotate(2 73 345)"/>
<ellipse cx="129" cy="459" rx="3.5" ry="2.5" fill="#e0dcd4" transform="rotate(15 129 459)"/>
<ellipse cx="307" cy="333" rx="3.7" ry="3.2" fill="#b0aca4" transform="rotate(14 307 333)"/>
<ellipse cx="37" cy="460" rx="3.5" ry="2.3" fill="#e0dcd4" transform="rotate(8 37 460)"/>
<ellipse cx="333" cy="384" rx="2.4" ry="1.7" fill="#b0aca4" transform="rotate(-27 333 384)"/>
<ellipse cx="304" cy="474" rx="2.4" ry="2.9" fill="#c4c0b8" transform="rotate(9 304 474)"/>
<ellipse cx="335" cy="442" rx="4.6" ry="3.4" fill="#9a968e" transform="rotate(-29 335 442)"/>
<path d="M150 428 L176 430 L180 444 L160 446Z" fill="#24242a"/><ellipse cx="295" cy="412" rx="8" ry="7" fill="#5a8a30"/><ellipse cx="52" cy="424" rx="8" ry="7" fill="#5f8030"/><ellipse cx="312" cy="422" rx="14" ry="8" fill="#a8a49a"/><ellipse cx="138" cy="458" rx="9" ry="6" fill="#d0d0cc"/>
<path d="M2 452 C20 446 40 440 62 438" stroke="#8a8078" stroke-width="1.500" fill="none"/>
</g>
<g filter="url(#pb1)">
<path d="M86 410 C70 408 52 412 38 422 C28 430 20 438 18 440 C24 444 34 438 44 430 C58 422 74 420 90 420Z" fill="#d9a466"/>
<path d="M160 296 C150 300 142 310 134 322 C122 340 108 360 100 380 C94 394 86 404 84 412 C84 424 100 426 120 426 C134 426 146 420 150 410 C154 400 152 388 150 378 C156 372 158 360 160 352 C164 362 164 374 166 384 C170 392 178 392 176 384 C174 372 176 350 180 332 C184 318 186 308 184 302Z" fill="#e6c08a"/>
<path d="M112 360 C104 376 96 396 92 410 C100 418 118 420 130 416 C128 396 124 376 120 362Z" fill="#ddb27a" opacity=".9"/>
<path d="M126 396 C134 384 148 384 152 394 C156 404 150 418 138 422 C128 424 120 416 126 396Z" fill="#f0e2c8"/>
<path d="M150 312 C160 304 176 306 184 312 C184 324 180 336 176 346 C168 350 156 346 150 336 C146 326 146 318 150 312Z" fill="#f2e2c4"/>
<path d="M146 410 C152 406 160 408 162 414 C158 420 150 420 146 416Z" fill="#f2e4cc"/>
<path d="M166 380 C172 378 178 382 178 388 C174 392 168 392 166 388Z" fill="#f2e4cc"/>
<path d="M160 293 C166 298 174 300 180 302 L178 308 C172 306 164 304 158 299Z" fill="#b0243a"/>
<path d="M156 276 C156 264 170 260 182 264 C192 268 198 278 196 288 C196 296 190 304 184 304 C176 302 164 298 158 292 C154 288 154 282 156 276Z" fill="#eac896"/>
<path d="M178 270 C188 270 196 280 194 292 C190 296 184 292 182 284 C180 278 176 274 178 270Z" fill="#cc9656"/>
<path d="M154 272 C158 264 166 262 170 264 C164 268 160 274 158 282Z" fill="#f6ecd8"/>
</g>
</g></svg>
<!--BOTTOM-->
<div class="t" id="lay" style="left:11px;top:902px;letter-spacing:-0.027px"><u>L</u>ayout:</div>
<div class="btn" style="left:57px;top:898px;width:197px;height:24px;border-color:#5a5e63;background:linear-gradient(#42464c,#393d43)"></div>
<div class="t" id="onem" style="left:61px;top:902px;letter-spacing:-0.013px">One map</div>
<svg class="abs" style="left:239px;top:907px" width="9" height="6"><path d="M0.500 0.800 H8.500 L4.500 5.200Z" fill="#c4c6c8"/></svg>
<div class="btn" style="left:256px;top:898px;width:78px;height:24px;border-color:#5a5e63;background:linear-gradient(#42464c,#393d43)"></div>
<svg class="abs" style="left:264px;top:902px" width="16" height="16" viewBox="0 0 16 16"><circle cx="8" cy="8" r="5.200" fill="none" stroke="#f4f0f0" stroke-width="3.600"/><circle cx="8" cy="8" r="5.200" fill="none" stroke="#d23c4a" stroke-width="3.600" stroke-dasharray="4.080 4.080" stroke-dashoffset="2.040"/></svg>
<div class="t" id="hlp" style="left:282px;top:902px;letter-spacing:-0.012px"><u>H</u>elp</div>
<svg class="abs" style="left:319px;top:908px" width="8" height="5"><path d="M0.500 0.500 H7.500 L4 4.500Z" fill="#a4a6a8"/></svg>
<div class="btn" style="left:1182px;top:898px;width:78px;height:24px;border-color:#5a5e63;background:linear-gradient(#42464c,#393d43)"></div>
<svg class="abs" style="left:1201px;top:903px" width="14" height="14" viewBox="0 0 14 14"><path d="M1.500 7.500 L5 11 L12.500 3" fill="none" stroke="#fcfcfc" stroke-width="1.200"/></svg>
<div class="t" id="bok" style="left:1219px;top:902px;letter-spacing:-0.83px"><u>O</u>K</div>
<div class="btn" style="left:1268px;top:898px;width:78px;height:24px;border-color:#5a5e63;background:linear-gradient(#42464c,#393d43)"></div>
<svg class="abs" style="left:1279px;top:903px" width="14" height="14" viewBox="0 0 14 14"><path d="M1.500 7.500 L5 11 L12.500 3" fill="none" stroke="#fcfcfc" stroke-width="1.200"/></svg>
<div class="t" id="bap" style="left:1297px;top:902px;letter-spacing:0.077px"><u>A</u>pply</div>
<div class="btn" style="left:1354px;top:898px;width:78px;height:24px;border-color:#5a5e63;background:linear-gradient(#42464c,#393d43)"></div>
<svg class="abs" style="left:1367px;top:904px" width="13" height="13" viewBox="0 0 13 13"><circle cx="6.500" cy="6.500" r="6" fill="#da4453"/><path d="M4 4 L9 9 M9 4 L4 9" stroke="#7a1f2a" stroke-width="1.200"/></svg>
<div class="t" id="bcl" style="left:1384px;top:902px;letter-spacing:-0.45px"><u>C</u>lose</div>
<!--DOCK-->
<div class="abs" style="left:1444px;top:0;width:52px;height:934px;background:#2a2e32"></div>
<div class="abs" style="left:1444px;top:0;width:1px;height:934px;background:#5a5e63"></div>
<div class="abs" style="left:1445px;top:56px;width:51px;height:58px;background:#3a3d41"></div>
<div class="abs" style="left:1445px;top:176px;width:51px;height:58px;background:#3a3d41"></div>
<div class="abs" style="left:1445px;top:296px;width:51px;height:58px;background:#3a3d41"></div>
<div class="abs" style="left:1444px;top:176px;width:3px;height:58px;background:#8a8d90"></div>
<div class="abs" style="left:1445px;top:416px;width:51px;height:58px;background:#356a8a"></div>
<div class="abs" style="left:1444px;top:416px;width:3px;height:58px;background:#3d9ccf"></div>
<svg class="abs" style="left:1456px;top:12px" width="32" height="30" viewBox="0 0 32 30"><g fill="#fcfcfc"><circle cx="9.200" cy="5.500" r="1.600"/><circle cx="5.400" cy="15" r="2.600"/><circle cx="12" cy="24.800" r="3.300"/><path d="M17 8 L20 5 L27.500 12 L20 19 L17 16 L21.200 12Z"/></g></svg>
<svg class="abs" style="left:1456px;top:71px" width="28" height="28" viewBox="0 0 28 28"><defs><linearGradient id="ss" x1="0" y1="0" x2="0" y2="1"><stop offset="0" stop-color="#2c3034"/><stop offset="1" stop-color="#1f2225"/></linearGradient></defs><rect x=".5" y=".5" width="27" height="26.500" rx="1.500" fill="url(#ss)"/><rect x=".5" y=".5" width="27" height="1" fill="#5a5e62"/><rect x="3" y="9.300" width="22" height="1.600" fill="#4fa3d8"/><rect x="19" y="9.300" width="6" height="1.600" fill="#6a6e72"/><circle cx="19.500" cy="10" r="2" fill="#fcfcfc"/><rect x="3" y="17.300" width="22" height="1.600" fill="#6a6e72"/><rect x="3" y="17.300" width="8" height="1.600" fill="#4fa3d8"/><circle cx="10" cy="18" r="2" fill="#fcfcfc"/></svg>
<svg class="abs" style="left:1455px;top:130px" width="30" height="30" viewBox="0 0 30 30"><defs><linearGradient id="fd" x1="0" y1="0" x2="0" y2="1"><stop offset="0" stop-color="#5cb3e6"/><stop offset="1" stop-color="#3a94cc"/></linearGradient></defs><path d="M0 1 H13 L15 4 H30 V12 H0Z" fill="#2f80b4"/><rect x="1.500" y="6" width="27" height="6" fill="#f6f8fa"/><path d="M0 10.500 H30 V28 H0Z" fill="url(#fd)"/><rect x="0" y="27.500" width="30" height="1.200" fill="#2a78aa"/></svg>
<svg class="abs" style="left:1456px;top:190px" width="28" height="29" viewBox="0 0 28 29"><defs><linearGradient id="ks" x1="0" y1="0" x2="0" y2="1"><stop offset="0" stop-color="#3a3e42"/><stop offset="1" stop-color="#25282b"/></linearGradient></defs><rect x=".5" y="1" width="27" height="27" rx="1.500" fill="url(#ks)"/><rect x=".5" y="1" width="27" height="1" fill="#7a7e82"/><path d="M11 8.500 L17 14.500 L11 20.500" fill="none" stroke="#8f9396" stroke-width="1.600"/></svg>
<svg class="abs" style="left:1454px;top:248px" width="32" height="33" viewBox="0 0 32 33"><defs><radialGradient id="ff" cx=".7" cy=".2" r="1"><stop offset="0" stop-color="#ffe14a"/><stop offset=".35" stop-color="#ff9a1f"/><stop offset=".65" stop-color="#ff4a3a"/><stop offset="1" stop-color="#e0207a"/></radialGradient><radialGradient id="ffi" cx=".5" cy=".4" r=".6"><stop offset="0" stop-color="#9a5af0"/><stop offset="1" stop-color="#5a2ad0"/></radialGradient></defs>
<path d="M16 4 C18 2 20 1 21 0 C21 3 23 5 26 7 C30 10 32 14 31 20 C30 28 23 33 16 33 C8 33 1 27 1 18 C1 14 2 10 5 7 C5 9 6 10 7 10 C8 7 12 5 16 4Z" fill="url(#ff)"/>
<circle cx="16" cy="18" r="7.200" fill="url(#ffi)"/><path d="M8 12 C12 10 16 11 18 14 C14 13 11 16 12 20 C13 24 18 26 22 23 C20 28 12 29 8 24 C5 20 6 15 8 12Z" fill="#ff7a20" opacity=".95"/><path d="M18 3 C22 6 26 10 26 17 C28 12 26 7 21 0 C21 2 19 3 18 3Z" fill="#ffd23a"/></svg>
<svg class="abs" style="left:1457px;top:311px" width="27" height="28" viewBox="0 0 27 28"><rect x=".5" y=".5" width="26" height="27" rx="3.500" fill="#26292d"/><text x="13.500" y="20.500" font-family="Liberation Sans, sans-serif" font-size="17" fill="#9a9da0" text-anchor="middle">à</text></svg>
<svg class="abs" style="left:1454px;top:372px" width="32" height="28" viewBox="0 0 32 28"><rect x="1" y="1" width="30" height="20" fill="#e8ecee"/><path d="M2.500 2.500 H29.500 V19.500 H2.500Z" fill="#3a3e42"/><path d="M2.500 2.500 H29.500 L2.500 14Z" fill="#3fb8c4"/><path d="M29.500 2.500 V19.500 H14Z" fill="#c43a8a"/><path d="M2.500 14 L14 19.500 H2.500Z" fill="#4a5458"/><rect x="10" y="7.500" width="12" height="8.500" rx="1" fill="#fcfcfc"/><rect x="13" y="6" width="5" height="2" fill="#fcfcfc"/><circle cx="16.800" cy="11.800" r="2.700" fill="none" stroke="#c43a6a" stroke-width="1"/><rect x="13" y="21" width="6" height="2.500" fill="#c8ccce"/><rect x="8" y="23.500" width="16" height="1.500" fill="#e8ecee"/></svg>
<svg class="abs" style="left:1454px;top:429px" width="44" height="32" viewBox="0 0 44 32"><defs><radialGradient id="dk2" cx=".45" cy=".4" r=".6"><stop offset="0" stop-color="#b8d4ee"/><stop offset=".4" stop-color="#5a8ec0"/><stop offset=".8" stop-color="#2a4a78"/><stop offset="1" stop-color="#182030"/></radialGradient></defs><circle cx="16" cy="16" r="15.300" fill="#2a2c30"/><circle cx="16" cy="16" r="13.600" fill="none" stroke="#8a8e94" stroke-width="1.200"/><circle cx="16" cy="16" r="11" fill="#14161a"/><circle cx="16" cy="16" r="9.600" fill="url(#dk2)"/><path d="M12 19 L20 11.500" stroke="#e6f0fa" stroke-width="2.400" stroke-linecap="round" opacity=".7"/><circle cx="36.300" cy="15.500" r="4.600" fill="#27ae60"/><path d="M36.300 12.800 V18.200 M33.600 15.500 H39" stroke="#fcfcfc" stroke-width="1.300"/></svg>
<svg class="abs" style="left:1448px;top:707px" width="46" height="14" viewBox="0 0 46 14"><path d="M0 13 L0 11 L1 7 L2 10 L3 6 L4 11 L5 10 L6 4 L7 11 L8 10 L9 11 L10 10 L11 11 L12 10 L13 11 L14 2 L15 2 L16 11 L17 10 L18 11 L19 10 L20 9 L21 4 L22 8 L23 9 L24 6 L25 9 L26 10 L27 8 L28 10 L29 9 L30 11 L31 10 L32 10 L33 8 L34 10 L35 11 L36 10 L37 11 L38 6 L39 10 L40 11 L41 11 L42 8 L43 11 L44 6 L45 11 L46 13Z" fill="#1f4e6e"/><path d="M0 13 L0 11 L1 7 L2 10 L3 6 L4 11 L5 10 L6 4 L7 11 L8 10 L9 11 L10 10 L11 11 L12 10 L13 11 L14 2 L15 2 L16 11 L17 10 L18 11 L19 10 L20 9 L21 4 L22 8 L23 9 L24 6 L25 9 L26 10 L27 8 L28 10 L29 9 L30 11 L31 10 L32 10 L33 8 L34 10 L35 11 L36 10 L37 11 L38 6 L39 10 L40 11 L41 11 L42 8 L43 11 L44 6 L45 11 L46 13" fill="none" stroke="#3d9fd6" stroke-width="1"/></svg>
<svg class="abs" style="left:1448px;top:757px" width="46" height="20" viewBox="0 0 46 20"><path d="M0 3 L8 3 L10 3.800 L14 3.800 L16 2.600 L40 2.200 L46 1.500 V20 H0Z" fill="#25394a"/><path d="M0 3 L8 3 L10 3.800 L14 3.800 L16 2.600 L40 2.200 L46 1.500" fill="none" stroke="#3579a3" stroke-width="1"/></svg>
<svg class="abs" style="left:1460px;top:792px" width="22" height="22" viewBox="0 0 22 22" fill="none" stroke="#fcfcfc" stroke-width="1.200"><path d="M5.500 14.500 C7 13 6.500 9 7.500 7 C8.500 4.500 13.500 4.500 14.500 7 C15.500 9 15 13 16.500 14.500 Z"/><path d="M9 17.500 H13" stroke-width="1.600"/><path d="M5.500 3 C3.500 4.500 3 6.500 3.200 8 M7 4.800 C6 5.600 5.500 6.800 5.600 7.800 M16.500 3 C18.500 4.500 19 6.500 18.800 8 M15 4.800 C16 5.600 16.500 6.800 16.400 7.800" stroke-width="1"/></svg>
<svg class="abs" style="left:1460px;top:822px" width="22" height="22" viewBox="0 0 22 22"><path d="M4.600 6.500 A8 8 0 0 1 18.500 8.500 M17.400 15.500 A8 8 0 0 1 3.500 13.500" fill="none" stroke="#fcfcfc" stroke-width="1.200"/><path d="M3 3.500 L4.600 6.800 L8 5.800 M19 18.500 L17.400 15.200 L14 16.200" fill="none" stroke="#fcfcfc" stroke-width="1.100"/><path d="M11 5.500 L15.500 10.500 H13 V15 H9 V10.500 H6.500Z" fill="#fcfcfc"/><circle cx="16.500" cy="16" r="3.200" fill="#3daee9"/></svg>
<svg class="abs" style="left:1460px;top:852px" width="22" height="22" viewBox="0 0 22 22" fill="none" stroke="#fcfcfc" stroke-width="1.200"><path d="M6 4 H19.500 V15.500 H6"/><path d="M9 19.500 H16.500 M12.800 15.500 V19.500" stroke-width="1.500"/><rect x="2.500" y="4" width="4.500" height="14.500" fill="#2a2e32"/><rect x="4" y="6.500" width="1.500" height="1.500" fill="#fcfcfc" stroke="none"/><path d="M2.500 14 H7"/></svg>
<svg class="abs" style="left:1463px;top:883px" width="16" height="16" viewBox="0 0 16 16"><path d="M11 2 L5 8 L11 14" fill="none" stroke="#fcfcfc" stroke-width="1.200"/></svg>
<div class="t" id="clk1" style="left:1445px;top:906px;width:51px;text-align:center;font-size:9px;line-height:11px;color:#e4e5e6;letter-spacing:-0.362px">7:41 AM</div>
<div class="t" id="clk2" style="left:1445px;top:918px;width:51px;text-align:center;font-size:9px;line-height:11px;color:#e4e5e6">3/6/26</div>
</body>
</html>
